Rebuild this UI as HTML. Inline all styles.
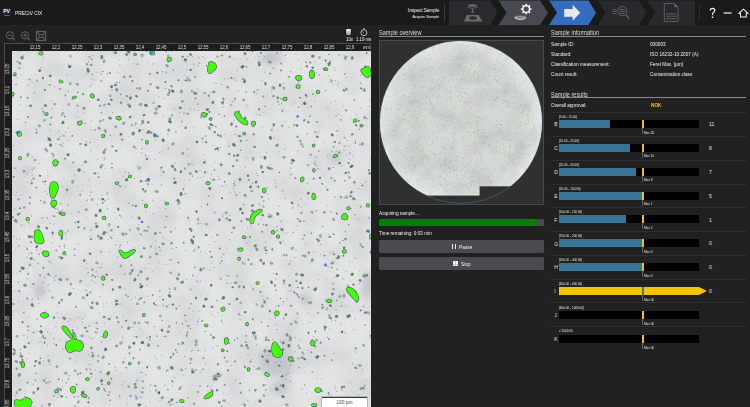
<!DOCTYPE html>
<html><head><meta charset="utf-8">
<style>
html,body{margin:0;padding:0;}
body{width:750px;height:407px;overflow:hidden;position:relative;background:#212121;font-family:"Liberation Sans", sans-serif;color:#e0e0e0;}
div{position:absolute;white-space:nowrap;}
.rl{font-size:4.5px;line-height:6px;color:#dcdcdc;letter-spacing:-0.12px;transform:scale(0.999)}
.hd{font-size:6.3px;line-height:7px;color:#dedede;transform:scaleX(0.885);transform-origin:0 0}
.lb{font-size:5.4px;line-height:6px;color:#f0f0f0;transform:scaleX(0.87);transform-origin:0 0}
.rng{position:absolute;font-size:3.7px;line-height:4px;color:#e8e8e8;transform:scaleX(0.83);transform-origin:0 0}
.let{position:absolute;font-size:5px;line-height:6px;color:#e0e0e0}
.cnt{position:absolute;font-size:5px;line-height:6px;color:#e6e6e6}
</style></head><body>
<!-- top bar -->
<div style="left:0;top:0;width:750px;height:25px;background:#1a1a1a"></div>
<div style="left:2px;top:8px;width:9px;height:8.4px;background:#1b2233;border-radius:1px"></div>
<div style="left:2px;top:9.2px;width:9px;text-align:center;font-size:5.2px;line-height:5px;font-weight:bold;color:#f4f4f4;letter-spacing:-0.3px">PV</div>
<div style="left:3.5px;top:14.6px;width:6px;height:0.5px;background:#5a6a8a;border-radius:50%"></div>
<div style="left:14.8px;top:9.4px;font-size:6.1px;line-height:7px;color:#f4f4f4;transform:scaleX(0.8);transform-origin:0 0">PRECiV CIX</div>
<div style="left:396px;top:7px;width:43px;text-align:right;font-size:5.1px;line-height:6px;color:#e8e8e8;letter-spacing:-0.28px">Inspect Sample</div>
<div style="left:396px;top:13.8px;width:43px;text-align:right;font-size:4.3px;line-height:5px;color:#e4e4e4;letter-spacing:-0.25px">Acquire Sample</div>
<div style="left:444px;top:4px;width:0.7px;height:17px;background:#3a3a3a"></div>
<svg style="position:absolute;left:0;top:0" width="750" height="26">
<path d="M449 0.5H490L497.5 12.7L490 24.9H449Z" fill="#2a2b2e"/>
<path d="M498.5 0.5H540L548 12.7L540 24.9H498.5L506.5 12.7Z" fill="#474a50"/>
<path d="M549 0.5H588.5L596 12.7L588.5 24.9H549L557 12.7Z" fill="#366cbc"/>
<path d="M598 0.5H639L646.5 12.7L639 24.9H598L605.5 12.7Z" fill="#28292c"/>
<path d="M647.5 0.5H695V24.9H647.5L655 12.7Z" fill="#28292c"/>
<!-- step1 icon -->
<g fill="#6b6b6b">
<ellipse cx="472.5" cy="5.5" rx="4.5" ry="1.3"/>
<path d="M467 7.2 Q472.5 9.6 478 7.2" fill="none" stroke="#6b6b6b" stroke-width="0.7"/>
<rect x="472" y="9" width="1" height="3"/>
<path d="M470.5 11.5H474.5L472.5 13.5Z"/>
<path d="M467 15H478.5L482.5 21.5H464Z"/>
</g>
<ellipse cx="473" cy="18" rx="4" ry="1.8" fill="#2a2b2e"/>
<!-- step2 gear -->
<g transform="translate(526.2 9.1)">
<circle r="3.35" fill="none" stroke="#f2f2f2" stroke-width="1.5"/>
<g fill="#f2f2f2">
<rect x="-0.85" y="-5.3" width="1.7" height="2" transform="rotate(0)"/>
<rect x="-0.85" y="-5.3" width="1.7" height="2" transform="rotate(45)"/>
<rect x="-0.85" y="-5.3" width="1.7" height="2" transform="rotate(90)"/>
<rect x="-0.85" y="-5.3" width="1.7" height="2" transform="rotate(135)"/>
<rect x="-0.85" y="-5.3" width="1.7" height="2" transform="rotate(180)"/>
<rect x="-0.85" y="-5.3" width="1.7" height="2" transform="rotate(225)"/>
<rect x="-0.85" y="-5.3" width="1.7" height="2" transform="rotate(270)"/>
<rect x="-0.85" y="-5.3" width="1.7" height="2" transform="rotate(315)"/>
</g>
</g>
<ellipse cx="520.2" cy="17.2" rx="5.6" ry="1.6" fill="#8e8e8e"/>
<path d="M514.4 17.6 Q520.2 21.6 526 17.6" fill="none" stroke="#ececec" stroke-width="0.9"/>
<!-- step3 arrow -->
<path d="M564.2 9H572.7V4.8L580.2 12.8L572.7 20.8V16.8H564.2Z" fill="#e8e8e8"/>
<!-- step4 magnifier -->
<g stroke="#6a6a6a" fill="none" stroke-width="0.8">
<circle cx="622.3" cy="11.2" r="4.6"/>
<path d="M625.6 14.6L629.4 18.6" stroke-width="1.3"/>
<path d="M612.6 9.5H616.5M612.6 11.6H616.5M612.6 13.7H616.5M619.5 9.5H624.5M619.5 11.6H625.5M619.5 13.7H624.5"/>
</g>
<!-- step5 doc -->
<g stroke="#6a6a6a" fill="none" stroke-width="0.8">
<path d="M664.3 3.5H674.5L678 7V21.5H664.3Z"/>
<path d="M666 13.9H676.5M666 16.2H676.5M666 18.7H676.5"/>
</g>
<path d="M674.5 3.5L678 7H674.5Z" fill="#6a6a6a"/>
<rect x="699" y="4" width="0.7" height="17" fill="#3a3a3a"/>
</svg>
<svg style="position:absolute;left:700px;top:0" width="50" height="25">
<path d="M10.2 10.6Q10.2 8.4 12.5 8.4Q14.8 8.4 14.8 10.5Q14.8 11.8 13.4 12.6Q12.5 13.2 12.5 14.6V15.2" fill="none" stroke="#f0f0f0" stroke-width="1.15"/>
<rect x="11.8" y="16.5" width="1.4" height="1.5" fill="#f0f0f0"/>
<rect x="23.6" y="12.4" width="8" height="1.2" fill="#f0f0f0"/>
<path d="M38.8 13.3L43.4 9.1L48 13.3H46.3V17H40.5V13.3Z" fill="none" stroke="#f0f0f0" stroke-width="1.05" stroke-linejoin="miter"/>
</svg>

<!-- zoom icons -->
<svg style="position:absolute;left:0;top:25px" width="60" height="20">
<g stroke="#626262" fill="none" stroke-width="1">
<circle cx="9.9" cy="10.3" r="3.6"/><path d="M12.6 13L14.8 15.3" stroke-width="1.2"/><path d="M8 10.3H11.8"/>
<circle cx="25" cy="10.3" r="3.6"/><path d="M27.7 13L29.9 15.3" stroke-width="1.2"/><path d="M23.1 10.3H26.9M25 8.4V12.2"/>
<rect x="36.5" y="6.4" width="9.2" height="9.2" stroke-width="1.1"/>
<rect x="39.2" y="9.4" width="3.8" height="3.2" stroke-width="0.9"/>
<path d="M37.2 7.1L39 8.9M45 7.1L43.2 8.9M37.2 14.9L39 13.1M45 14.9L43.2 13.1" stroke-width="1.2"/>
</g>
</svg>

<!-- microscope frame -->
<div style="left:4px;top:43px;width:367px;height:370px;background:#1c1c1c;box-shadow:inset 0.8px 0.8px 0 #5a5a5a, inset -0.8px 0 0 #5a5a5a"></div>
<svg width="750" height="407" style="position:absolute;left:0;top:0">
<defs>
<filter id="mott" x="0" y="0" width="100%" height="100%">
<feTurbulence type="fractalNoise" baseFrequency="0.035" numOctaves="3" seed="3"/>
<feColorMatrix type="matrix" values="0 0 0 0 0.48  0 0 0 0 0.49  0 0 0 0 0.52  0.9 0 0 0 -0.33"/>
</filter>
<filter id="bl"><feGaussianBlur stdDeviation="0.75"/></filter>
<filter id="pb"><feGaussianBlur stdDeviation="3"/></filter>
<filter id="grain1" x="0" y="0" width="100%" height="100%">
<feTurbulence type="fractalNoise" baseFrequency="0.7" numOctaves="1" seed="21"/>
<feColorMatrix type="matrix" values="0 0 0 0 0.45  0 0 0 0 0.5  0 0 0 0 0.48  1.4 0 0 0 -0.55"/>
</filter>
<clipPath id="imgclip"><rect x="12" y="51" width="359" height="356"/></clipPath>
</defs>
<g clip-path="url(#imgclip)">
<rect x="12" y="51" width="359" height="356" fill="#e6e6e7"/>
<rect x="12" y="51" width="359" height="356" filter="url(#mott)" opacity="0.75"/>
<rect x="12" y="51" width="359" height="356" filter="url(#grain1)" opacity="0.35"/>
<g filter="url(#pb)" fill="#8a8ea0" opacity="0.3">
<ellipse cx="273" cy="363" rx="13" ry="14"/><ellipse cx="280" cy="388" rx="10" ry="8"/><ellipse cx="286" cy="360" rx="6" ry="25"/>
<ellipse cx="368" cy="285" rx="6" ry="14"/><ellipse cx="27" cy="171" rx="5" ry="4"/><ellipse cx="270" cy="58" rx="10" ry="6"/>
<ellipse cx="335" cy="158" rx="7" ry="6"/><ellipse cx="305" cy="300" rx="6" ry="6"/><ellipse cx="40" cy="290" rx="5" ry="8"/>
</g>
<g filter="url(#bl)"><path d="M128.3 104.7l1.1 0.3M271.0 263.0l1.1 0.4M173.2 143.5l-0.5 0.7M141.0 104.2l-1.1 0.6M48.9 360.6l0.0 0.4M305.1 255.9l-0.0 0.3M344.0 295.2l0.1 1.1M180.2 387.8l-0.5 1.0M262.4 305.9l-0.3 0.3M367.4 312.6l0.4 0.0M78.4 401.7l0.1 0.1M82.6 335.8l-0.9 0.0M301.9 357.7l1.4 0.1M129.5 346.6l0.3 0.5" stroke="#2a5a3c" stroke-width="2.8" stroke-opacity="0.40" stroke-linecap="round" fill="none"/><path d="M221.2 374.9l0.3 0.1M257.1 186.4l0.1 0.1M143.9 230.3l0.0 0.5M333.3 283.4l-0.5 0.6M100.4 267.5l0.5 0.1M266.5 253.4l-0.1 0.1M259.1 204.3l0.0 0.0M340.0 242.7l-0.5 0.1M41.8 405.4l0.2 0.0M75.0 255.3l-0.6 0.2" stroke="#2a5a3c" stroke-width="1.5" stroke-opacity="0.40" stroke-linecap="round" fill="none"/><path d="M44.6 202.1l-0.2 0.7M325.3 327.4l0.0 0.2M169.5 326.3l-0.2 0.4M139.1 322.6l-0.3 0.4M301.3 144.0l0.5 0.5M61.9 299.7l-0.4 0.8M74.9 370.6l0.6 0.5M226.5 212.3l-0.7 0.8M187.3 332.6l0.1 0.1M331.7 81.0l-0.2 0.2M175.3 288.1l-0.3 1.0M68.8 104.2l-0.1 0.4M52.9 154.3l0.5 0.9M44.5 120.2l-0.3 0.0M268.6 340.0l0.2 0.3M100.6 121.1l-0.6 0.3M282.1 125.7l0.3 0.1M109.3 224.3l-0.5 0.2M84.3 228.1l0.1 0.6M126.3 233.9l-0.9 0.1" stroke="#305e40" stroke-width="2.4" stroke-opacity="0.40" stroke-linecap="round" fill="none"/><path d="M34.2 259.5l0.3 0.1M201.6 206.7l-0.2 0.0M104.9 391.0l0.1 0.1M55.7 395.0l0.1 0.0M101.9 341.9l-0.4 0.4M222.3 322.1l0.2 0.1M68.3 321.4l-0.0 0.0M88.1 332.2l-0.0 0.0M118.8 59.7l0.0 0.1M239.6 315.0l0.4 0.3M160.0 250.6l0.5 0.1M109.2 226.5l-0.0 0.2M327.9 108.6l0.2 0.5M335.2 196.7l0.1 0.1M128.6 203.4l0.3 0.0M203.1 141.7l-0.3 0.3" stroke="#2a5a3c" stroke-width="1.2" stroke-opacity="0.40" stroke-linecap="round" fill="none"/><path d="M162.5 243.5l0.8 0.5M332.5 262.7l-0.8 0.8M128.6 386.6l0.0 0.0M235.2 282.7l0.9 0.0M19.4 63.0l0.5 0.5M62.4 123.1l-0.1 0.0M121.1 102.6l-0.2 0.1M204.6 162.2l-0.6 0.7M240.0 136.1l-0.9 0.0M364.6 117.3l0.2 0.3M103.6 356.8l-0.6 0.9M181.6 91.0l-0.4 0.9M15.9 361.2l0.9 0.5M342.3 386.7l-0.4 0.7M139.0 362.4l-0.3 1.0M354.5 182.1l-0.2 0.5M324.7 326.8l1.0 0.5M340.9 197.1l0.0 0.0M166.6 65.3l0.9 0.6M171.7 242.9l-0.1 0.4M128.7 51.7l-0.7 0.0M130.8 97.5l-0.7 0.1" stroke="#3a6040" stroke-width="2.4" stroke-opacity="0.55" stroke-linecap="round" fill="none"/><path d="M220.8 278.5l-0.1 0.6M203.9 268.1l-0.4 0.8M94.9 129.8l0.4 0.2M31.5 252.9l0.2 0.2M353.5 122.1l0.3 0.2M153.9 102.7l-0.7 0.2M308.3 165.0l-0.7 0.4M341.7 306.0l-0.2 0.1M315.5 131.9l-0.5 0.1M141.3 372.4l0.4 0.1M124.6 274.2l0.0 0.1M312.2 339.8l-0.1 0.9M170.4 259.6l0.6 0.2M215.9 126.5l-0.1 0.1M227.1 361.1l-0.4 0.7" stroke="#3a6040" stroke-width="1.8" stroke-opacity="0.40" stroke-linecap="round" fill="none"/><path d="M234.2 227.7l-0.5 0.1M92.3 302.5l0.2 0.5M18.3 214.4l-0.4 0.1M104.3 317.0l-0.3 0.0M168.5 331.7l-0.8 0.1M213.6 91.9l0.5 0.1M31.6 183.2l0.0 0.1M247.5 219.5l1.0 0.0M205.1 172.3l-0.0 0.0M175.0 169.2l0.2 0.8M147.7 278.4l-0.7 0.8M284.1 280.6l-0.2 0.1M132.4 269.9l-0.3 0.9M67.1 189.8l-0.0 0.2M365.5 66.4l-0.3 0.6M32.0 304.2l-0.2 0.9" stroke="#34524a" stroke-width="2.4" stroke-opacity="0.55" stroke-linecap="round" fill="none"/><path d="M141.8 139.4l0.0 0.0M302.5 352.2l-0.1 0.2M210.8 334.9l0.2 0.0M61.6 115.1l0.1 0.0M333.5 234.1l0.3 0.1M207.3 204.3l0.3 0.4M210.4 251.5l-0.2 0.1M131.3 265.1l0.1 0.1M117.3 300.6l0.1 0.4M70.4 358.5l-0.4 0.2" stroke="#305e40" stroke-width="1.5" stroke-opacity="0.70" stroke-linecap="round" fill="none"/><path d="M189.7 173.3l1.0 0.4M240.7 392.6l0.1 0.0M109.0 318.8l0.9 0.4M237.1 160.0l0.1 0.2M117.1 345.7l-1.0 0.4M299.9 220.8l0.2 0.3M36.5 132.6l-0.1 0.4M219.9 248.5l0.0 0.2M324.7 212.3l-0.8 0.2M122.2 139.5l0.2 0.2M313.9 406.3l0.3 0.4M257.4 249.4l-0.6 0.7M352.5 134.0l-0.6 0.6M83.4 108.4l0.3 0.4M87.0 64.1l0.2 0.3M229.5 56.6l0.5 0.5" stroke="#3a6040" stroke-width="2.1" stroke-opacity="0.55" stroke-linecap="round" fill="none"/><path d="M162.1 320.5l-0.0 0.0M155.6 304.7l0.4 0.0M155.8 390.5l0.1 0.1M54.5 200.2l0.0 0.4M224.5 384.8l0.4 0.1M65.3 95.1l0.3 0.3M192.4 176.2l0.0 0.1M250.1 361.6l0.7 0.1M184.1 112.9l0.0 0.0M178.0 262.5l0.7 0.1M126.3 367.6l0.2 0.3M158.0 345.6l0.1 0.1M110.3 400.3l-0.2 0.1M341.9 388.9l-0.0 0.0M129.7 347.9l-0.5 0.2M283.7 254.8l0.5 0.1M297.5 218.7l0.5 0.3M238.3 313.9l0.0 0.4M184.8 315.4l0.7 0.1M35.2 365.6l-0.6 0.3" stroke="#2a4e50" stroke-width="1.5" stroke-opacity="0.55" stroke-linecap="round" fill="none"/><path d="M286.5 255.0l-0.1 0.5M296.3 281.1l0.4 0.0M65.2 158.5l-0.1 0.2M339.5 152.2l-0.4 0.3M313.8 178.4l-0.1 0.5M98.8 177.1l-0.3 0.0M76.1 306.7l-0.2 0.1M328.6 392.9l-0.0 0.9M252.7 318.9l0.2 0.6M129.4 353.1l0.2 0.3M310.0 62.3l0.5 0.4M174.3 178.4l0.0 0.1M92.3 352.9l0.1 0.0M78.0 374.2l0.0 0.0M229.3 304.0l0.2 0.1M169.7 402.0l-0.9 0.2M87.2 331.2l-0.7 0.1" stroke="#34524a" stroke-width="1.8" stroke-opacity="0.55" stroke-linecap="round" fill="none"/><path d="M175.8 350.0l-0.0 0.0M360.8 88.3l0.7 0.4M28.2 117.0l-0.2 0.0M281.4 70.2l-0.4 0.3M242.3 212.6l0.6 0.6M248.7 180.0l-0.0 0.1M91.6 64.8l-0.8 0.2M191.8 91.0l0.2 0.2M250.0 237.0l0.2 0.2M116.7 317.1l0.6 0.6M183.4 189.0l-0.1 0.2M109.9 72.7l-0.1 0.4M195.3 98.4l0.2 0.1M291.4 323.8l-0.6 0.2M301.6 212.8l-0.3 0.2M91.6 59.3l0.0 0.0M18.6 199.2l-0.1 0.3" stroke="#2a5a3c" stroke-width="1.8" stroke-opacity="0.55" stroke-linecap="round" fill="none"/><path d="M244.3 404.5l0.4 0.8M330.5 317.9l0.6 0.5M24.2 171.3l-0.2 0.1M268.9 216.8l0.8 0.3M183.6 242.7l-0.0 0.1M218.1 364.2l-0.2 0.4M162.5 397.4l-0.8 0.3M130.3 76.2l0.0 0.6M50.1 75.9l-0.1 0.0M83.1 94.0l0.1 0.4M294.3 292.4l0.2 0.1M54.3 216.2l-0.1 0.0" stroke="#2a4e50" stroke-width="2.1" stroke-opacity="0.55" stroke-linecap="round" fill="none"/><path d="M349.7 177.5l-0.1 0.0M70.4 56.3l-0.0 0.1M82.9 297.6l0.8 0.3M32.4 305.1l0.7 0.8M170.7 231.8l-0.0 0.0M291.1 305.7l-0.1 0.1M24.0 207.5l0.5 0.0M111.6 230.0l-0.2 0.5M302.6 298.6l-0.0 0.2M329.3 315.6l0.3 0.1M255.5 338.1l0.1 0.1M314.4 346.2l1.0 0.4M306.3 95.5l0.1 0.7" stroke="#2a4e50" stroke-width="2.4" stroke-opacity="0.40" stroke-linecap="round" fill="none"/><path d="M58.4 139.2l0.1 0.2M182.4 342.6l0.7 0.6M279.6 365.6l-0.9 0.0M324.8 329.4l-0.0 0.0M50.4 124.5l-0.0 0.0M240.9 140.9l0.0 0.0M302.9 255.8l0.0 0.0M228.0 370.0l0.2 0.3M212.2 67.2l0.4 0.7M256.1 248.2l-0.1 0.0M33.4 284.0l-0.1 0.0M211.7 256.8l0.2 0.0M223.4 98.6l0.1 0.6M171.2 86.0l0.6 0.5M355.3 291.2l-0.1 0.0M344.0 251.3l-0.8 0.5M253.7 134.2l-0.0 0.4" stroke="#2a5a3c" stroke-width="2.1" stroke-opacity="0.55" stroke-linecap="round" fill="none"/><path d="M111.7 99.7l-0.7 0.0M246.8 345.1l-0.4 0.5M84.2 260.2l-0.1 0.8M179.9 107.7l0.7 0.3M306.8 66.1l0.0 0.6M342.1 331.5l-0.2 0.8M134.1 342.8l-0.1 0.4M43.0 78.1l-0.1 0.1M112.9 289.4l0.0 0.3" stroke="#34524a" stroke-width="2.1" stroke-opacity="0.70" stroke-linecap="round" fill="none"/><path d="M95.8 223.6l0.3 0.1M287.4 404.6l-1.2 0.2M145.6 190.9l-0.8 0.8M347.1 197.3l-0.6 0.2M12.5 95.7l-0.4 1.1M100.1 105.6l0.1 0.1M355.8 348.2l-0.1 0.4M130.5 395.9l0.1 0.2M13.0 304.0l0.5 0.1M235.0 361.5l-0.1 0.1M19.3 291.1l-0.1 0.1M118.3 322.0l0.3 0.2M321.0 390.6l0.9 0.5M96.5 262.8l1.0 0.4" stroke="#34524a" stroke-width="2.4" stroke-opacity="0.40" stroke-linecap="round" fill="none"/><path d="M277.6 213.6l0.2 0.5M100.2 210.2l-0.1 0.9M242.9 66.6l-0.9 0.6M304.5 103.1l0.4 0.5M105.8 349.1l-0.4 0.6M277.2 346.5l-0.4 0.6M253.2 332.9l1.1 0.0M141.9 286.4l-1.1 0.7M317.8 356.5l-1.1 0.8M24.7 346.8l0.3 0.3M61.5 257.9l0.4 0.1" stroke="#2a4e50" stroke-width="2.8" stroke-opacity="0.70" stroke-linecap="round" fill="none"/><path d="M184.9 193.6l0.3 0.1M267.3 187.6l0.1 0.0M185.8 320.6l-0.2 0.5M246.3 140.5l0.6 0.0M315.3 331.7l-0.4 0.4M181.6 121.3l0.4 0.4M78.3 396.5l-0.2 0.1M257.4 368.8l-0.1 0.1M227.7 86.6l-0.4 0.4M369.1 314.4l-0.0 0.0M325.8 90.5l-0.0 0.3M205.5 331.5l-0.3 0.0M229.2 343.1l0.5 0.4M162.9 305.4l0.1 0.2" stroke="#305e40" stroke-width="1.5" stroke-opacity="0.40" stroke-linecap="round" fill="none"/><path d="M227.7 87.4l0.1 0.1M304.6 235.0l-0.0 0.2M126.7 179.8l-0.2 0.2M150.3 257.0l-0.2 0.4M52.8 297.5l-0.5 0.0M123.8 362.1l-0.6 0.4M198.1 219.0l0.2 0.0M217.2 234.7l0.4 0.4M243.4 99.5l0.6 0.8M50.6 75.5l-0.7 0.6M56.9 366.3l0.2 0.6M70.9 283.7l-0.1 0.8" stroke="#3a6040" stroke-width="2.4" stroke-opacity="0.40" stroke-linecap="round" fill="none"/><path d="M21.2 362.3l-0.8 0.1M20.3 389.6l-0.8 0.2M91.4 347.6l-0.1 0.4M100.9 167.3l-0.3 0.0M66.3 347.4l-0.2 0.4M266.1 339.9l-0.0 0.0M135.3 384.0l-0.5 0.3M213.8 179.7l0.0 0.1M155.7 233.3l-0.7 0.3M280.3 242.4l0.4 0.6M118.2 226.9l0.0 0.0M32.1 236.7l0.0 0.1M255.5 389.9l-0.3 0.6M144.0 248.2l0.4 0.1M346.4 88.8l0.0 0.7M115.9 300.9l-0.0 0.1M156.4 253.8l0.4 0.2M348.1 286.4l-0.1 0.3M98.2 235.9l0.2 0.5M140.5 271.7l0.9 0.0" stroke="#305e40" stroke-width="2.4" stroke-opacity="0.55" stroke-linecap="round" fill="none"/><path d="M228.2 219.8l0.2 0.2M359.3 129.2l-0.0 0.1M186.5 59.8l-0.2 0.2M322.4 226.5l-0.0 0.1M159.3 246.8l-0.1 0.6M291.0 174.1l-0.2 0.6M187.6 56.8l0.1 0.2M64.4 245.2l-0.2 0.5M303.1 354.1l0.5 0.1M253.3 335.7l-0.1 0.1M176.5 247.5l-0.3 0.0M293.5 232.3l-0.3 0.0M280.5 385.2l-0.3 0.4M15.0 168.2l-0.5 0.0M16.3 84.4l-0.4 0.0M57.1 212.5l0.0 0.1M68.2 204.9l-0.5 0.1M128.5 172.6l-0.0 0.4M331.1 211.5l0.1 0.2" stroke="#2a4e50" stroke-width="1.2" stroke-opacity="0.55" stroke-linecap="round" fill="none"/><path d="M63.7 317.9l1.0 0.6M283.3 342.8l-0.2 0.1M168.7 130.2l0.0 0.0M116.7 89.3l-0.1 0.7M352.4 57.6l-0.3 0.8M244.7 53.4l0.5 0.3M277.3 145.1l-0.5 0.4M245.2 117.8l0.0 0.3M353.4 198.6l0.8 0.4M30.4 105.8l0.4 0.0M24.6 285.1l0.7 0.3M287.0 334.7l0.1 0.3M194.6 93.2l1.4 0.1M261.0 260.2l-0.1 0.4M79.5 169.7l-0.4 1.0M252.3 210.6l0.4 0.4M39.6 362.7l-0.0 0.6M212.0 306.8l0.1 0.0" stroke="#2a4e50" stroke-width="2.8" stroke-opacity="0.55" stroke-linecap="round" fill="none"/><path d="M284.2 157.1l-0.7 0.2M85.9 209.7l0.5 0.0M362.5 143.6l-0.3 0.6M316.3 340.1l0.6 0.3M320.2 235.5l0.4 1.0M178.7 274.6l0.1 0.2M134.6 322.8l0.1 0.2M359.3 365.4l1.0 0.0M241.9 345.6l-0.5 0.3M223.7 400.6l1.1 0.1M139.3 88.5l0.6 0.1M104.3 60.9l-0.4 0.8M67.3 279.3l-0.4 0.1M70.3 83.6l-0.0 0.0M155.3 112.9l0.9 0.3M213.9 378.9l0.0 0.8M270.5 168.7l1.2 0.1M160.4 316.0l0.0 0.1M190.9 359.1l0.1 0.1M58.1 388.5l0.4 0.4M104.9 130.4l-0.0 0.0" stroke="#34524a" stroke-width="2.8" stroke-opacity="0.40" stroke-linecap="round" fill="none"/><path d="M139.7 130.3l-0.3 0.7M250.8 186.6l-0.4 0.6M118.2 208.8l0.1 0.7M211.2 285.0l-0.1 0.3M49.2 138.5l-0.5 0.8M102.9 199.1l-0.5 0.1M39.9 70.3l-0.3 0.5M271.4 281.8l0.2 1.1M281.6 229.5l0.9 0.1M45.2 105.4l0.4 0.2M197.0 141.7l-0.3 0.4M300.9 282.8l-0.3 0.2" stroke="#34524a" stroke-width="2.4" stroke-opacity="0.70" stroke-linecap="round" fill="none"/><path d="M295.0 321.0l0.4 0.4M309.7 116.1l0.6 0.3M78.7 211.9l0.5 0.3M329.8 60.9l0.5 0.2M221.6 320.2l-0.2 0.1M49.3 261.5l-0.1 0.3M253.5 126.6l-0.2 0.0M37.3 319.2l0.0 0.1M147.8 90.2l-0.4 0.4M318.1 169.0l0.3 0.1M340.6 119.8l0.5 0.2M268.7 214.5l0.5 0.1M119.0 185.6l0.4 0.1" stroke="#2a4e50" stroke-width="1.5" stroke-opacity="0.40" stroke-linecap="round" fill="none"/><path d="M197.8 177.6l0.2 0.2M89.9 364.3l-0.5 0.3M257.7 175.3l-0.5 0.2M302.1 388.8l0.0 0.6M326.3 278.8l-0.1 0.1M45.8 310.9l0.1 0.1M35.0 74.8l-0.0 0.0M42.2 108.1l-0.2 0.4M62.4 380.6l0.1 0.0M297.7 151.0l0.1 0.0M21.1 225.2l0.1 0.4M272.6 339.2l0.0 0.0" stroke="#34524a" stroke-width="1.2" stroke-opacity="0.40" stroke-linecap="round" fill="none"/><path d="M229.2 173.6l0.1 0.0M49.6 404.5l-0.4 0.0M104.2 151.6l-0.3 1.0M93.3 95.9l-0.4 0.2M222.7 102.2l-0.2 1.0M148.4 344.7l0.3 0.9M324.2 69.0l0.3 0.0M14.3 353.4l-0.4 0.6M31.3 258.5l-0.2 0.1M126.5 54.4l0.3 0.3M129.1 327.8l-0.7 0.6M158.7 106.3l0.0 0.2M329.3 168.6l-0.2 0.1M370.9 252.0l0.0 0.6M20.9 355.8l0.6 0.6" stroke="#34524a" stroke-width="2.8" stroke-opacity="0.55" stroke-linecap="round" fill="none"/><path d="M180.8 171.2l0.1 0.9M195.9 297.6l-0.0 0.8M22.4 322.1l0.2 0.1M140.7 181.1l0.7 0.1M240.4 179.1l-0.6 0.2M129.3 106.3l0.7 0.4M14.4 350.3l0.3 0.4M219.6 376.3l0.0 0.0M329.7 236.8l0.2 0.1M291.7 202.6l0.7 0.7M214.7 132.0l0.1 0.3M282.4 396.2l0.4 0.8M346.0 172.7l-0.5 0.5M316.8 136.7l0.9 0.3M144.4 115.0l-0.7 0.3M159.0 392.3l0.0 0.4M351.7 191.8l-0.6 0.9" stroke="#3a6040" stroke-width="2.1" stroke-opacity="0.70" stroke-linecap="round" fill="none"/><path d="M246.4 335.7l-0.4 0.3M333.4 146.7l0.5 0.1M243.0 66.2l-0.0 0.0M237.5 338.1l-0.0 0.2M308.4 287.2l0.5 0.1M190.5 328.4l-0.0 0.1M276.1 290.1l0.1 0.3M277.8 101.6l0.2 0.3M355.3 142.6l0.0 0.4M145.8 374.8l-0.0 0.0M252.4 51.5l0.3 0.2M234.7 185.6l-0.0 0.1M95.3 276.7l-0.1 0.6" stroke="#2a5a3c" stroke-width="1.2" stroke-opacity="0.70" stroke-linecap="round" fill="none"/><path d="M281.3 221.2l-0.1 0.0M242.8 78.6l-0.3 0.4M145.1 230.6l0.1 0.1M89.8 253.8l0.7 0.3M89.1 326.1l-0.0 0.0M347.5 396.3l0.0 0.0M92.1 356.3l0.5 0.4M145.5 181.1l0.2 0.1M203.3 358.0l0.4 0.2M40.6 358.3l-0.5 0.1M278.6 305.5l0.1 0.7M146.7 51.2l-0.1 0.2M326.6 309.2l0.0 0.3M42.9 181.5l0.1 0.2" stroke="#34524a" stroke-width="1.5" stroke-opacity="0.55" stroke-linecap="round" fill="none"/><path d="M271.1 215.9l0.2 0.1M179.2 202.6l-0.4 0.8M72.7 181.2l0.1 1.1M195.7 344.6l0.6 0.1M283.8 88.0l-0.0 0.2M340.0 296.6l-0.2 0.2M158.8 367.3l0.9 1.0M215.5 375.6l-0.9 0.6M289.8 336.8l0.6 0.5M39.2 125.7l0.3 0.3M168.7 94.4l-0.7 0.2M253.1 158.1l0.3 1.4M28.2 154.1l-0.4 0.2M137.8 228.4l0.7 0.6M292.9 247.9l-1.2 0.6M170.7 272.9l0.1 0.0" stroke="#305e40" stroke-width="2.8" stroke-opacity="0.40" stroke-linecap="round" fill="none"/><path d="M66.3 373.1l-1.2 0.1M92.2 199.5l0.1 0.2M259.1 368.2l-0.5 0.3M196.1 340.8l0.4 0.2M142.4 392.3l-0.0 0.0M150.5 84.2l0.1 0.1M156.3 108.7l0.2 0.6M361.8 388.0l-0.6 0.7M134.0 146.8l0.6 0.4M121.3 342.8l-0.8 0.6M206.4 224.1l0.0 0.0M345.6 57.3l-0.2 0.8M188.6 79.9l0.9 0.4" stroke="#3a6040" stroke-width="2.8" stroke-opacity="0.40" stroke-linecap="round" fill="none"/><path d="M248.0 175.7l-0.0 0.0M121.2 133.9l-0.5 0.6M86.0 144.7l-0.4 0.2M286.0 314.3l-0.1 0.4M259.5 64.5l-0.4 0.6M256.2 181.6l-0.1 0.7M221.0 164.5l0.3 0.3M237.9 155.0l-0.5 0.6M158.8 392.7l0.1 0.4M360.0 280.3l0.3 0.2M255.6 245.4l-0.6 0.6M344.1 247.6l-0.1 0.5M231.7 123.6l-0.2 1.0M172.2 399.6l-0.7 0.4M262.8 215.0l-0.1 0.1M115.3 84.9l0.3 0.3M245.2 312.2l-0.1 0.0M262.7 171.9l0.1 0.1" stroke="#305e40" stroke-width="2.4" stroke-opacity="0.70" stroke-linecap="round" fill="none"/><path d="M272.8 87.6l1.1 0.8M310.8 302.6l-1.4 0.1M100.3 238.4l1.3 0.4M17.1 336.3l-0.1 0.1M182.9 153.4l-0.0 0.0M156.1 191.5l1.2 0.1M290.8 339.2l-0.6 0.7M181.5 369.9l-0.0 0.0M142.2 54.8l-0.1 0.8M209.0 127.4l0.7 1.2M98.8 128.0l1.0 0.6M115.7 126.8l0.1 0.0M128.7 52.2l0.4 0.1M269.3 61.9l1.1 0.2M258.6 62.5l0.8 0.4M265.1 350.1l-0.3 1.2M296.9 273.9l-0.4 0.6M45.9 149.2l-0.1 0.4M136.5 398.3l0.1 0.0" stroke="#2a4e50" stroke-width="2.8" stroke-opacity="0.40" stroke-linecap="round" fill="none"/><path d="M325.7 61.0l-0.0 0.2M44.6 341.9l0.0 0.0M112.0 163.6l0.1 0.1M221.5 260.7l0.5 0.3M277.0 53.0l-0.2 0.4M17.5 61.5l-0.4 0.2M189.5 228.8l0.4 0.1M366.9 118.4l-0.0 0.0M291.5 163.1l-0.1 0.3M107.5 209.0l-0.0 0.0M148.3 91.0l0.1 0.2M98.3 355.9l-0.1 0.2M87.8 68.5l-0.7 0.0M152.8 294.9l-0.3 0.5M132.6 205.4l0.5 0.1M339.7 143.0l-0.6 0.0M56.6 250.5l-0.4 0.1M97.0 328.3l0.6 0.3M147.0 230.7l0.5 0.4" stroke="#3a6040" stroke-width="1.5" stroke-opacity="0.55" stroke-linecap="round" fill="none"/><path d="M105.1 200.2l-0.3 0.6M359.9 144.2l-0.0 0.5M361.2 245.8l0.1 0.1M192.7 275.1l0.2 0.6M227.2 283.0l0.1 0.3M275.2 317.0l0.1 0.5M169.5 292.0l0.6 0.4M290.6 71.5l-0.0 0.0M146.8 284.9l-0.0 0.0M65.2 233.1l0.5 0.3M189.3 308.0l0.1 0.2M337.3 130.8l-0.3 0.3M147.2 338.1l-0.2 0.0M365.3 385.5l-0.3 0.0M198.8 57.4l-0.1 0.0" stroke="#34524a" stroke-width="1.5" stroke-opacity="0.40" stroke-linecap="round" fill="none"/><path d="M272.3 249.1l0.0 0.5M260.5 291.6l0.0 0.3M58.8 379.3l-0.1 0.1M72.5 330.3l0.2 0.2M265.6 250.1l0.8 0.3M293.6 361.0l-0.5 0.1M248.3 259.7l0.2 0.0M273.2 96.0l0.4 0.3M269.3 351.2l0.5 0.2M19.9 208.2l0.2 0.0M215.5 149.1l-0.1 0.2M242.6 213.0l-0.1 0.3M54.1 317.2l-0.0 0.7" stroke="#3a6040" stroke-width="1.8" stroke-opacity="0.70" stroke-linecap="round" fill="none"/><path d="M290.8 365.4l-0.1 0.1M193.7 164.6l-0.1 0.2M185.7 62.3l-0.2 0.3M272.0 168.2l-0.0 0.1M44.8 277.5l-0.2 0.2M184.4 104.1l0.0 0.1M288.0 372.8l0.2 0.5M35.0 93.1l-0.1 0.2M171.7 60.1l0.0 0.3M32.2 157.1l0.2 0.2M246.8 91.4l-0.3 0.1M290.0 381.0l0.3 0.3M291.9 362.0l-0.3 0.0M194.0 64.1l0.4 0.1" stroke="#305e40" stroke-width="1.2" stroke-opacity="0.40" stroke-linecap="round" fill="none"/><path d="M194.3 251.0l-0.0 0.4M177.3 352.0l-0.2 0.4M245.6 342.0l-0.1 0.2M197.7 104.0l0.2 0.5M25.0 396.5l-0.2 0.1M141.4 124.5l-0.1 0.1M28.4 222.4l-0.1 0.4M314.2 163.4l0.4 0.2M29.4 79.1l-0.3 0.4M191.8 231.4l-0.4 0.1M281.7 103.6l0.1 0.4M154.3 326.6l-0.1 0.0M315.8 164.9l-0.0 0.1M342.6 240.4l0.5 0.0M348.3 224.6l0.6 0.2" stroke="#34524a" stroke-width="1.2" stroke-opacity="0.55" stroke-linecap="round" fill="none"/><path d="M100.9 237.3l0.7 0.3M331.1 396.4l0.4 0.8M132.4 80.9l-0.2 0.1M265.6 83.0l-0.6 0.1M343.0 405.4l0.4 0.1M56.3 345.0l0.0 0.3M265.4 84.0l0.1 0.5M231.3 78.0l0.3 0.1M234.1 155.4l0.1 0.2M161.6 167.5l-0.3 0.3M270.0 310.6l-0.4 0.8M206.0 142.0l0.3 0.3M308.6 332.5l-0.4 0.3" stroke="#305e40" stroke-width="1.8" stroke-opacity="0.70" stroke-linecap="round" fill="none"/><path d="M55.7 208.4l0.2 0.2M41.0 200.6l-0.2 0.2M88.1 272.7l0.1 0.0M176.4 322.5l0.1 0.5M355.1 214.7l-0.2 0.1M176.9 402.2l0.4 0.2M283.6 83.0l-0.0 0.1M221.6 406.3l0.2 0.1M97.7 173.0l-0.1 0.0M75.0 222.5l0.2 0.1M240.6 150.2l-0.0 0.0M54.0 338.6l0.0 0.0M136.5 88.1l0.4 0.2M33.4 332.3l0.4 0.3M364.1 125.5l0.0 0.0M277.0 226.5l0.0 0.0M173.3 69.8l0.0 0.3M34.1 167.7l0.1 0.2" stroke="#305e40" stroke-width="1.2" stroke-opacity="0.70" stroke-linecap="round" fill="none"/><path d="M120.7 94.6l-0.1 0.0M258.7 186.6l-0.2 0.3M170.5 357.1l0.2 0.6M305.6 94.8l0.1 0.3M334.2 254.0l0.1 0.5M275.9 389.0l0.2 0.5M136.2 337.0l0.7 0.0M13.7 348.8l-0.2 0.2M159.9 291.1l0.0 0.0M64.7 116.4l-0.2 0.1" stroke="#34524a" stroke-width="1.5" stroke-opacity="0.70" stroke-linecap="round" fill="none"/><path d="M45.1 181.3l0.4 0.0M327.6 189.7l-0.1 0.1M336.9 213.5l0.1 0.1M305.1 359.1l-0.5 0.2M59.0 302.5l0.2 0.5M236.2 126.3l0.0 0.3M348.5 162.9l0.3 0.0M317.1 239.1l0.1 0.1M193.9 236.6l-0.4 0.3M147.2 366.9l0.0 0.6M232.4 287.2l0.6 0.1M123.4 123.2l0.2 0.5M44.8 89.8l0.2 0.2M108.6 103.9l0.7 0.4M370.6 335.8l0.6 0.1M362.8 246.8l0.0 0.1" stroke="#2a4e50" stroke-width="1.8" stroke-opacity="0.70" stroke-linecap="round" fill="none"/><path d="M131.0 273.1l-0.9 0.7M80.8 143.9l-0.6 0.0M30.1 264.8l-0.4 0.2M363.3 345.1l0.5 0.6M139.7 167.5l-0.6 0.9M299.8 141.0l0.7 0.1M98.1 361.3l-0.0 0.0M168.3 55.7l0.1 1.0M239.4 286.0l-0.2 1.1M137.7 303.8l-0.7 0.0M311.7 212.1l0.6 0.4M351.1 196.3l0.1 0.0M54.3 104.0l0.6 0.3M265.2 247.5l-0.3 0.3M101.6 165.2l0.8 0.0M322.8 307.3l-0.5 0.7" stroke="#2a5a3c" stroke-width="2.4" stroke-opacity="0.40" stroke-linecap="round" fill="none"/><path d="M216.8 300.3l0.4 0.3M319.4 74.7l-0.0 0.2M161.4 184.9l0.1 0.2M232.1 232.1l-0.4 0.5M62.2 210.2l0.1 0.4M91.0 192.0l0.3 0.3M141.0 286.9l-0.5 0.2M124.7 122.0l0.4 0.0M350.2 196.2l-0.6 0.2M187.5 148.9l-0.1 0.1M342.7 278.9l-0.0 0.2M360.9 83.2l0.0 0.2M142.1 148.5l-0.2 0.4" stroke="#2a5a3c" stroke-width="1.2" stroke-opacity="0.55" stroke-linecap="round" fill="none"/><path d="M344.7 146.4l-0.5 0.1M298.8 106.9l-0.6 0.2M60.8 203.5l-0.1 0.1M223.6 254.2l0.2 0.2M37.8 263.3l0.5 0.3M196.1 342.6l0.2 0.1M336.1 115.7l-0.2 0.3M55.3 392.8l0.1 0.1M130.0 229.6l-0.1 0.7M307.1 133.6l0.5 0.2M240.0 209.6l-0.0 0.2M52.3 108.7l-0.3 0.0M164.7 385.1l0.0 0.0M107.4 193.1l-0.3 0.5M42.9 282.5l0.0 0.0M316.5 211.0l-0.6 0.1M252.5 182.8l0.1 0.5M221.2 55.5l-0.0 0.2" stroke="#3a6040" stroke-width="1.5" stroke-opacity="0.40" stroke-linecap="round" fill="none"/><path d="M101.9 56.5l-0.1 1.4M337.8 275.5l-0.6 0.3M315.7 288.8l-0.6 1.0M206.3 299.0l-0.7 0.4M60.0 212.6l0.3 0.6M104.4 232.4l-0.6 1.1M119.8 287.1l0.1 0.1M148.9 131.6l-1.0 0.9M338.5 256.6l-0.2 1.1M263.6 263.4l0.0 0.1" stroke="#3a6040" stroke-width="2.8" stroke-opacity="0.70" stroke-linecap="round" fill="none"/><path d="M312.5 56.1l0.6 0.1M233.5 144.3l0.8 1.0M22.2 268.0l1.1 0.3M283.0 385.4l0.2 0.8M329.6 63.2l-0.5 1.2M259.8 400.7l0.3 0.5M169.2 295.5l0.7 0.7M288.9 345.4l-0.0 0.6M175.4 182.5l-0.7 0.1M264.9 157.3l0.1 0.8M223.5 297.5l0.1 0.7M367.6 231.0l1.0 0.4M209.9 188.5l-0.1 0.0" stroke="#34524a" stroke-width="2.8" stroke-opacity="0.70" stroke-linecap="round" fill="none"/><path d="M62.0 237.5l-0.3 1.0M332.0 134.6l0.6 0.7M142.5 342.1l-0.8 0.7M237.0 298.9l-0.1 0.2M162.0 330.0l0.1 0.5M369.6 173.2l0.1 0.2M343.5 405.6l0.2 0.3M109.5 117.8l1.0 0.6M296.9 125.4l0.2 0.1M210.6 124.3l0.7 0.6M308.5 193.2l-0.5 0.2M135.1 279.3l-0.5 1.0" stroke="#2a5a3c" stroke-width="2.4" stroke-opacity="0.70" stroke-linecap="round" fill="none"/><path d="M332.5 294.1l0.1 0.0M270.2 137.2l0.5 1.2M336.8 316.2l-0.5 0.3M169.5 121.4l0.9 0.6M181.0 193.5l0.1 1.0M87.9 70.0l0.4 1.3M193.3 371.9l-0.7 0.2M185.4 59.7l-0.2 0.1M83.0 392.1l-0.2 0.5M29.2 236.4l0.6 0.4M111.7 86.5l-0.1 0.2M292.4 160.1l1.1 0.7M215.4 378.5l0.8 0.8M240.5 208.8l0.0 0.4M50.7 144.8l-0.2 0.7M301.5 274.9l1.2 0.3" stroke="#305e40" stroke-width="2.8" stroke-opacity="0.70" stroke-linecap="round" fill="none"/><path d="M202.8 138.1l-0.5 0.5M253.3 288.8l-0.1 0.5M84.8 107.7l0.2 0.2M197.7 392.0l0.6 0.0M336.5 258.3l0.6 0.0M116.9 82.3l-0.0 0.4M175.9 131.6l0.0 0.2M272.0 129.7l-0.5 0.2M119.7 215.3l0.1 0.1M202.6 320.7l-0.7 0.4M293.9 124.8l0.6 0.5M365.5 325.1l-0.2 0.0M298.5 345.4l-0.1 0.4M194.7 76.7l0.5 0.6" stroke="#2a4e50" stroke-width="1.8" stroke-opacity="0.40" stroke-linecap="round" fill="none"/><path d="M192.6 241.5l0.1 1.0M41.0 331.5l0.4 0.8M138.8 404.8l1.0 0.0M352.4 274.1l-0.4 0.5M68.0 154.6l0.2 0.1M97.0 226.4l-0.4 0.3M348.8 316.0l-1.0 0.5M108.6 372.7l-0.8 1.2M203.8 306.1l0.1 0.2M171.5 367.7l0.6 0.5M177.9 200.3l0.2 0.3M145.5 105.1l0.9 0.4M163.1 139.9l0.2 0.8M352.1 165.9l-1.0 0.7M70.3 293.6l-1.0 0.9M207.6 109.6l-0.4 0.0" stroke="#2a5a3c" stroke-width="2.8" stroke-opacity="0.70" stroke-linecap="round" fill="none"/><path d="M235.0 98.5l-0.1 0.2M236.5 195.1l-0.1 0.0M96.5 322.8l0.4 0.1M201.0 117.2l-0.1 0.2M299.0 297.0l-0.2 0.1M28.6 326.5l-0.9 0.0M329.0 404.3l0.6 0.2M35.4 160.0l-0.6 0.1M89.7 253.4l0.6 0.5" stroke="#2a4e50" stroke-width="2.1" stroke-opacity="0.40" stroke-linecap="round" fill="none"/><path d="M346.1 77.6l0.1 0.1M55.0 280.0l0.0 0.5M101.2 372.6l0.0 0.0M69.2 375.6l-0.3 0.1M204.9 58.4l0.1 0.0M47.7 137.1l0.0 0.0M156.3 358.6l-0.2 0.1M335.6 320.5l-0.3 0.1M172.0 248.5l0.5 0.2M350.9 208.6l0.4 0.2M51.6 153.1l0.4 0.0M209.7 312.0l0.5 0.1M298.6 82.6l0.1 0.0M360.3 183.5l-0.0 0.0M355.5 141.2l-0.0 0.2M213.9 267.6l0.0 0.1M89.6 101.7l-0.3 0.1" stroke="#3a6040" stroke-width="1.2" stroke-opacity="0.40" stroke-linecap="round" fill="none"/><path d="M228.6 275.9l-0.2 0.1M360.6 206.3l0.2 0.7M74.7 248.9l-0.1 0.2M167.7 389.5l0.3 0.2M59.4 256.8l-0.4 0.5M303.1 146.4l-0.2 0.6M122.0 326.8l-0.0 0.0M132.8 343.1l0.7 0.3M37.0 80.3l0.1 0.6M331.5 360.1l0.3 0.1M101.2 80.9l0.3 0.3M354.4 99.9l-0.0 0.3M89.3 56.9l0.2 0.0M298.6 358.4l-0.5 0.0M39.4 253.9l-0.3 0.5M312.4 372.1l-0.0 0.1M59.6 246.3l-0.0 0.0" stroke="#34524a" stroke-width="1.8" stroke-opacity="0.40" stroke-linecap="round" fill="none"/><path d="M155.0 385.6l0.4 0.5M280.3 298.4l-0.0 0.2M72.5 135.9l-0.3 0.1M222.1 298.8l0.0 0.0M105.7 131.9l-0.1 0.1M348.5 172.2l0.3 0.4M324.6 355.6l-0.2 0.2M108.6 395.0l-0.1 0.3M203.1 369.2l-0.1 0.1M345.9 110.1l0.2 0.5M343.6 255.5l-0.6 0.3M266.1 337.2l0.1 0.6M224.5 181.7l0.1 0.0M260.6 52.7l0.7 0.2" stroke="#2a5a3c" stroke-width="1.5" stroke-opacity="0.70" stroke-linecap="round" fill="none"/><path d="M318.7 150.9l0.3 0.2M115.9 370.0l-0.0 0.1M198.5 350.4l-0.2 0.1M166.4 216.3l0.3 0.0M120.8 186.5l-0.4 0.1M127.5 178.9l-0.4 0.1M234.5 339.8l0.2 0.3M304.0 221.0l-0.1 0.4M315.6 331.0l-0.3 0.2M73.3 162.1l-0.4 0.4M107.3 73.6l-0.1 0.0M81.5 392.1l0.5 0.0M18.3 282.1l0.0 0.0M77.5 92.1l0.1 0.5M110.2 135.1l-0.1 0.2M166.5 370.8l-0.0 0.2M197.9 220.5l0.0 0.0M156.9 335.9l0.0 0.4M263.8 200.9l0.0 0.2" stroke="#34524a" stroke-width="1.2" stroke-opacity="0.70" stroke-linecap="round" fill="none"/><path d="M209.5 111.8l-0.2 0.2M157.9 136.3l-0.4 0.1M102.9 284.5l-0.0 0.1M165.4 81.9l-0.0 0.4M150.0 336.9l-0.0 0.3M254.2 147.0l1.0 0.0M299.9 97.8l0.1 0.0M76.7 384.6l-0.0 0.0M238.6 111.5l0.4 0.1M266.8 225.2l-0.8 0.0" stroke="#34524a" stroke-width="2.1" stroke-opacity="0.55" stroke-linecap="round" fill="none"/><path d="M91.0 373.6l0.4 0.4M345.2 238.9l0.6 0.5M304.6 120.0l-0.5 0.6M208.8 95.6l0.1 0.3M283.0 396.6l0.9 0.3M43.4 267.6l-0.1 0.2M251.3 264.1l0.1 0.1M218.0 134.9l0.4 0.5M335.1 141.8l-0.3 0.4M244.9 366.6l0.1 0.7M355.2 367.8l1.0 0.3M228.9 153.8l0.7 0.3M363.5 387.8l0.3 0.7M182.0 101.3l0.7 0.1M366.8 402.3l0.4 0.0M366.3 70.4l0.5 0.3M42.7 336.2l0.2 0.3M54.1 206.5l-0.4 0.8M27.2 298.6l-0.0 0.2M77.1 84.0l0.5 0.6M320.7 342.6l-0.1 0.3M22.5 359.6l0.3 0.3" stroke="#305e40" stroke-width="2.1" stroke-opacity="0.55" stroke-linecap="round" fill="none"/><path d="M243.8 204.7l-0.0 0.0M101.2 251.5l-0.1 0.6M306.0 62.0l0.2 0.4M222.3 55.2l0.2 0.2M187.2 77.3l0.3 0.4M239.8 180.2l0.4 0.5M53.6 395.8l0.0 0.2M109.5 391.9l-0.3 0.2M268.0 326.1l-0.3 0.1M148.5 227.0l-0.5 0.2M170.1 404.6l-0.1 0.0M361.0 310.2l-0.8 0.1M345.1 73.9l-0.3 0.1M131.7 124.6l0.3 0.7M19.0 245.9l0.1 0.0" stroke="#305e40" stroke-width="1.8" stroke-opacity="0.40" stroke-linecap="round" fill="none"/><path d="M333.6 219.5l-0.1 0.0M33.7 392.4l-0.1 0.6M15.1 75.1l-0.3 0.2M264.8 301.5l-0.3 0.9M233.1 166.1l0.1 0.0M185.7 127.8l0.0 0.1M195.9 171.2l0.7 0.7M312.5 259.6l-0.5 1.1M214.0 337.5l-0.9 0.1M151.2 132.8l0.1 0.0M220.6 136.0l0.1 0.4M212.0 390.6l0.4 0.6M267.8 167.4l0.9 0.6" stroke="#2a5a3c" stroke-width="2.4" stroke-opacity="0.55" stroke-linecap="round" fill="none"/><path d="M66.6 397.0l-0.0 0.0M214.2 169.8l0.4 0.2M103.0 71.5l-0.5 0.1M233.8 183.3l0.2 0.0M208.8 196.1l-0.3 0.0M191.7 370.8l0.5 0.2M328.9 339.2l0.4 0.1M337.4 269.2l-0.3 0.1M27.7 155.4l-0.0 0.5M112.1 90.0l-0.2 0.0M328.7 54.3l0.1 0.1M207.9 386.1l-0.3 0.3M307.6 183.8l0.0 0.0" stroke="#2a4e50" stroke-width="1.2" stroke-opacity="0.70" stroke-linecap="round" fill="none"/><path d="M356.9 301.9l-0.2 0.1M137.5 64.3l0.1 0.1M75.0 405.8l-0.1 0.0M50.3 381.7l0.0 0.0M207.8 68.7l-0.0 0.0M190.8 289.4l0.0 0.0M63.7 135.8l0.2 0.1M273.5 68.2l0.0 0.1M184.7 168.3l0.4 0.6M80.2 194.4l-0.0 0.7M47.2 150.9l0.0 0.6M145.5 322.0l0.5 0.3M142.9 387.8l-0.1 0.1M311.2 106.5l-0.1 0.0" stroke="#2a5a3c" stroke-width="1.8" stroke-opacity="0.40" stroke-linecap="round" fill="none"/><path d="M244.3 79.9l0.5 0.5M333.3 288.9l0.6 0.2M207.4 395.6l0.5 0.2M227.4 351.1l-0.3 0.1M213.0 125.2l-0.1 0.1M279.4 172.6l0.0 0.0M240.2 383.3l-0.2 0.4M239.8 257.6l-0.2 0.1M362.6 185.4l-0.4 0.1M40.9 326.1l0.2 0.3" stroke="#2a4e50" stroke-width="1.5" stroke-opacity="0.70" stroke-linecap="round" fill="none"/><path d="M277.3 230.7l-0.2 0.1M36.1 187.6l0.6 0.1M196.1 369.8l0.5 0.1M304.7 385.0l-0.0 0.1M337.1 300.4l-0.4 0.2M267.1 298.3l0.5 0.2M85.9 290.6l-0.0 0.0M192.8 369.3l0.1 0.0M101.4 112.8l0.0 0.0M129.3 254.4l0.1 0.4M178.3 344.0l0.4 0.1M159.9 232.4l0.1 0.5M237.1 276.0l0.1 0.6M312.5 94.0l0.7 0.1M360.7 310.4l0.2 0.1" stroke="#305e40" stroke-width="1.5" stroke-opacity="0.55" stroke-linecap="round" fill="none"/><path d="M88.4 397.8l0.4 0.3M44.6 342.9l0.2 0.3M103.0 202.7l-0.5 0.4M25.6 122.6l0.0 0.0M108.9 363.7l0.5 0.3M27.8 382.4l-0.6 0.4M138.4 274.9l-0.1 0.2M311.2 233.0l-0.0 0.5M85.2 123.3l-0.0 0.0M194.8 267.3l-0.1 0.3M270.3 73.3l-0.3 0.6M66.3 382.7l0.1 0.1M36.2 373.2l-0.0 0.3M254.0 91.6l0.3 0.7M20.4 271.2l-0.3 0.5M74.3 397.0l0.1 0.0M190.4 362.9l0.1 0.3M244.9 263.9l-0.3 0.1M27.2 248.8l0.1 0.5M242.4 262.7l0.5 0.2M331.5 178.1l0.0 0.7M50.1 84.8l-0.7 0.1M311.4 351.9l0.1 0.3" stroke="#2a5a3c" stroke-width="1.5" stroke-opacity="0.55" stroke-linecap="round" fill="none"/><path d="M173.4 304.5l-0.9 0.2M344.1 386.7l-0.0 0.2M353.7 284.5l-0.5 0.2M154.0 303.2l0.1 0.7M178.4 80.1l-0.0 0.3M135.7 206.1l0.3 0.1M283.2 349.3l-0.5 0.6M142.9 188.9l0.3 0.7M172.4 381.2l0.0 0.1M95.2 173.4l-0.8 0.1M343.8 89.9l0.3 0.7M130.3 98.7l0.2 0.1M116.5 150.7l-0.6 0.2M308.2 121.9l0.3 0.6M39.6 175.7l0.9 0.2" stroke="#2a5a3c" stroke-width="1.8" stroke-opacity="0.70" stroke-linecap="round" fill="none"/><path d="M130.2 117.0l-0.0 0.0M339.7 163.0l-0.1 0.1M217.3 148.5l0.4 0.1M312.6 67.7l0.1 0.0M116.7 304.0l-0.3 0.4M365.4 312.5l-0.1 0.1M37.1 246.3l-0.6 0.8M229.8 220.1l0.1 0.1M217.8 374.0l0.8 0.0M101.4 380.5l0.4 0.5M38.1 388.5l-0.2 0.8M98.2 99.8l0.2 0.0" stroke="#2a4e50" stroke-width="2.4" stroke-opacity="0.70" stroke-linecap="round" fill="none"/><path d="M147.9 184.1l0.1 0.0M51.1 117.7l0.5 0.0M297.4 136.5l0.2 0.6M281.2 63.5l-0.0 0.0M46.0 382.9l-0.0 0.0M173.3 353.6l0.4 0.6M16.3 368.3l0.3 0.8M263.9 385.2l-0.3 0.4M310.9 154.7l-0.4 0.1M171.9 115.2l-0.1 0.5M110.2 95.5l0.1 0.8M186.7 335.2l0.1 0.6M60.4 144.7l-0.0 0.0M142.8 381.1l-0.0 0.3" stroke="#305e40" stroke-width="1.8" stroke-opacity="0.55" stroke-linecap="round" fill="none"/><path d="M122.8 337.2l-0.0 0.1M57.8 397.3l-0.4 0.2M43.5 338.1l-0.3 0.1M32.3 298.7l0.1 0.1M281.4 227.8l0.1 0.1M222.1 185.9l0.4 0.3M137.1 166.5l-0.1 0.0M263.9 286.6l-0.0 0.0M232.6 101.5l0.1 0.3M184.5 186.2l0.0 0.0M275.7 278.9l-0.0 0.1M315.5 156.9l0.2 0.1M49.8 223.3l0.1 0.2M343.1 401.6l0.1 0.1" stroke="#2a4e50" stroke-width="1.2" stroke-opacity="0.40" stroke-linecap="round" fill="none"/><path d="M172.2 166.1l0.6 0.6M169.8 118.9l-0.0 0.0M276.7 388.5l0.5 1.0M138.9 217.6l0.6 1.0M200.9 269.2l-0.1 0.9M135.6 387.2l0.1 0.2M213.0 102.2l-0.2 0.6M252.4 205.3l0.0 0.3M182.8 282.2l-1.2 0.2M266.8 360.8l0.9 0.9M96.9 303.2l0.4 0.7" stroke="#2a5a3c" stroke-width="2.8" stroke-opacity="0.55" stroke-linecap="round" fill="none"/><path d="M190.3 54.1l0.4 0.7M142.6 121.2l0.3 1.3M59.8 279.2l1.1 0.5M245.0 195.3l0.0 0.1M15.2 220.4l1.0 0.9M172.2 90.8l0.9 0.5M91.3 307.5l0.7 0.4M85.5 161.8l0.2 0.1M277.8 97.7l-0.0 0.4M190.6 229.2l0.4 0.6M219.3 402.4l-0.1 0.0" stroke="#305e40" stroke-width="2.8" stroke-opacity="0.55" stroke-linecap="round" fill="none"/><path d="M100.8 74.0l0.3 0.2M165.1 88.5l0.0 0.0M234.9 78.7l0.1 0.3M68.2 91.4l0.1 0.5M187.9 398.0l-0.1 0.1M338.9 54.8l0.3 0.4M328.1 266.7l-0.1 0.2M299.2 367.6l-0.4 0.2M110.6 236.6l-0.3 0.1M249.6 390.5l0.1 0.3M206.5 65.4l0.0 0.5M162.5 71.3l-0.3 0.4M90.0 369.0l0.4 0.3M20.3 352.8l0.3 0.5M265.9 389.6l-0.4 0.4M89.9 142.3l0.0 0.3" stroke="#3a6040" stroke-width="1.2" stroke-opacity="0.55" stroke-linecap="round" fill="none"/><path d="M191.0 303.7l0.0 0.1M188.3 164.2l1.0 0.2M121.0 265.5l-0.4 0.6M33.3 178.4l0.6 0.3M258.4 224.2l-0.0 0.0M163.2 171.6l0.8 0.5M217.0 56.5l0.6 0.1M204.4 92.9l0.6 0.1M149.9 340.0l0.0 0.0M12.3 217.1l0.8 0.1M360.6 244.1l-0.2 0.3M198.2 223.3l0.1 0.2M167.2 306.4l-0.5 0.3M122.8 233.3l0.0 0.2M165.5 227.0l-0.4 0.4M40.1 275.0l-0.1 0.5M334.6 180.5l0.5 0.4M111.6 238.0l-0.0 0.2M16.7 392.1l0.1 0.9" stroke="#305e40" stroke-width="2.1" stroke-opacity="0.40" stroke-linecap="round" fill="none"/><path d="M112.3 146.3l0.1 0.1M261.7 196.9l0.4 0.1M78.2 227.1l0.5 0.2M182.8 56.7l-0.4 0.1M163.0 299.6l0.1 0.1M159.8 106.4l0.3 0.2M157.7 72.5l-0.6 0.5M325.5 60.2l-0.0 0.0M85.6 327.7l-0.6 0.2M308.8 252.7l0.2 0.2M93.2 355.4l0.2 0.0M206.6 113.8l0.3 0.2M358.9 120.9l0.1 0.0M126.3 320.7l-0.1 0.1M368.8 170.2l0.1 0.2M88.6 402.2l-0.4 0.2M322.3 183.8l-0.0 0.0M324.5 255.6l0.0 0.0" stroke="#34524a" stroke-width="1.8" stroke-opacity="0.70" stroke-linecap="round" fill="none"/><path d="M297.7 287.4l0.1 0.0M224.5 357.5l0.1 0.3M255.9 335.9l-0.3 0.2M322.5 304.5l-0.3 0.1M80.2 373.1l0.2 0.2M295.2 178.0l0.5 0.4M119.8 396.0l0.0 0.0M101.9 384.3l0.3 0.0M366.8 52.9l-0.2 0.5M165.8 336.2l-0.1 0.1M23.9 312.8l0.0 0.0" stroke="#3a6040" stroke-width="1.5" stroke-opacity="0.70" stroke-linecap="round" fill="none"/><path d="M111.9 167.7l-0.0 0.1M135.8 123.5l-0.1 0.2M104.6 158.5l-0.0 0.0M252.4 191.0l-1.0 0.0M134.0 344.0l0.1 0.1M188.8 325.9l-0.9 0.2M263.8 395.2l0.4 0.7M319.7 57.0l-0.3 0.8M297.6 313.4l-0.2 0.1M95.5 332.2l0.8 0.2M111.3 378.5l0.2 0.6M263.1 96.3l0.3 0.3M143.3 342.7l-0.6 0.3M148.0 322.5l-0.4 0.8M38.8 229.6l-0.9 0.4" stroke="#34524a" stroke-width="2.1" stroke-opacity="0.40" stroke-linecap="round" fill="none"/><path d="M219.3 179.2l-0.1 0.1M48.1 382.3l-0.1 0.5M68.5 378.7l-0.4 0.2M119.7 82.5l-0.1 0.1M92.1 74.1l0.2 0.5M60.5 88.9l-0.2 0.5M219.4 114.4l-0.3 0.0M90.9 229.7l-0.1 0.6M106.8 232.3l0.0 0.3M298.7 204.8l-0.3 0.4" stroke="#305e40" stroke-width="1.2" stroke-opacity="0.55" stroke-linecap="round" fill="none"/><path d="M29.3 342.9l-0.8 0.3M262.1 231.7l0.1 0.1M45.1 337.9l0.2 0.5M276.2 314.6l0.5 0.4M150.8 246.3l0.0 0.3M150.0 73.6l-0.1 0.5M28.3 274.0l-0.4 0.1M104.0 389.0l0.2 0.1M92.6 275.1l0.4 0.3M217.6 376.3l0.1 0.5M29.7 202.9l-0.0 0.6M19.7 213.5l-0.1 0.2M246.3 66.6l0.1 0.1M187.3 113.6l0.8 0.3M14.2 176.8l-0.7 0.1M20.8 97.1l0.1 0.2M140.7 234.1l-0.0 0.0" stroke="#3a6040" stroke-width="1.8" stroke-opacity="0.55" stroke-linecap="round" fill="none"/><path d="M63.1 122.0l0.2 0.7M95.9 215.1l0.4 0.7M244.7 81.5l-0.6 0.4M273.8 124.4l0.1 0.6M280.1 84.7l-0.2 1.0M38.3 226.6l0.5 0.2" stroke="#3a6040" stroke-width="2.4" stroke-opacity="0.70" stroke-linecap="round" fill="none"/><path d="M262.4 356.3l0.3 0.5M356.1 125.1l0.0 0.2M206.8 235.0l-1.0 0.1M217.0 390.2l0.1 0.3M302.4 288.0l-0.0 0.1M136.1 95.9l0.8 0.6M191.5 239.7l-0.2 0.4" stroke="#305e40" stroke-width="2.1" stroke-opacity="0.70" stroke-linecap="round" fill="none"/><path d="M47.3 217.9l-0.1 0.1M331.9 267.6l-0.4 0.2M182.5 323.7l-0.1 0.3M36.9 250.1l0.1 0.0M153.2 63.8l-0.0 0.1M330.9 79.0l-0.0 0.0M33.3 384.0l-0.0 0.0M344.9 180.6l-0.3 0.0M316.7 121.9l0.5 0.1M166.0 52.0l0.1 0.1M139.9 349.5l0.4 0.2M58.3 161.3l0.1 0.5M333.4 167.3l0.0 0.0" stroke="#3a6040" stroke-width="1.2" stroke-opacity="0.70" stroke-linecap="round" fill="none"/><path d="M87.4 294.6l-0.3 0.7M320.0 177.8l-0.1 0.1M62.0 396.2l-0.8 0.3M36.0 361.2l-0.5 0.3M330.0 305.3l0.9 0.5M46.5 227.8l0.6 0.5M282.4 376.2l-0.8 0.4M289.4 285.2l0.5 0.3" stroke="#2a5a3c" stroke-width="2.1" stroke-opacity="0.70" stroke-linecap="round" fill="none"/><path d="M140.5 284.0l-0.2 0.4M133.6 357.8l-0.1 0.7M246.3 218.6l0.0 0.1M176.4 308.4l-0.1 0.5M91.3 238.7l-0.5 0.7M172.8 91.2l0.3 0.4M92.2 269.1l0.4 0.7M30.7 242.1l0.6 0.3M224.5 116.1l-0.0 0.0M296.9 294.1l0.6 0.6M141.3 297.9l0.1 0.2M169.3 89.6l-0.2 0.2M349.6 315.3l0.2 0.4M186.5 80.5l-0.8 0.1M241.5 220.8l-0.1 0.5M111.7 279.9l0.9 0.1M27.5 97.7l0.2 0.1M198.6 246.8l0.0 0.7M126.8 96.0l0.4 0.2M30.0 197.3l0.4 0.1M122.5 234.3l0.5 0.6M194.1 403.6l0.0 0.3M276.5 273.7l0.6 0.7M230.8 105.1l0.0 0.0" stroke="#2a4e50" stroke-width="1.8" stroke-opacity="0.55" stroke-linecap="round" fill="none"/><path d="M144.7 302.2l-0.7 0.2M317.8 313.0l0.2 0.0M90.7 292.2l0.1 0.1M103.4 119.8l-0.4 0.3M19.2 68.0l-0.0 0.3M256.5 304.1l0.2 0.7M240.5 302.7l0.7 0.1M105.0 149.3l0.7 0.1M274.9 285.2l0.2 0.8M125.9 294.7l-0.0 0.0M288.7 76.8l0.4 0.2M77.2 105.5l0.5 0.1M296.3 322.3l0.4 0.3M299.1 348.1l0.8 0.2M284.3 283.1l-0.3 0.2" stroke="#3a6040" stroke-width="2.1" stroke-opacity="0.40" stroke-linecap="round" fill="none"/><path d="M268.9 351.1l1.0 0.2M177.1 278.4l0.7 0.6M147.0 159.0l0.0 0.1" stroke="#2a4e50" stroke-width="2.4" stroke-opacity="0.55" stroke-linecap="round" fill="none"/><path d="M86.6 369.0l-0.2 0.6M188.1 217.4l-0.2 0.7M43.4 111.5l0.6 0.8M263.6 206.3l0.0 0.5M78.0 169.6l0.8 0.3M282.4 110.7l0.1 0.6M123.8 76.7l0.5 0.3M44.2 380.3l-0.7 0.3M63.1 113.3l-0.5 0.1M227.1 218.1l-0.7 0.7M81.3 280.9l-0.9 0.4M139.8 299.0l-0.4 0.4M247.8 347.4l0.1 1.0M104.6 104.6l-0.5 0.7" stroke="#2a5a3c" stroke-width="2.1" stroke-opacity="0.40" stroke-linecap="round" fill="none"/><path d="M222.0 198.2l-0.0 0.0M259.0 109.3l0.1 0.0M169.4 92.2l0.1 0.0M52.6 232.5l0.1 0.7M196.4 211.1l0.3 0.7M190.7 69.7l0.0 0.3M77.9 221.8l0.3 0.4M106.5 274.7l0.3 0.1M148.4 122.2l-0.3 0.3M243.8 286.9l0.0 0.5M60.8 389.5l0.1 0.2M48.5 274.3l-0.1 0.1M50.4 140.3l-0.4 0.0" stroke="#2a4e50" stroke-width="2.1" stroke-opacity="0.70" stroke-linecap="round" fill="none"/><path d="M261.2 166.5l0.1 0.9M219.4 219.6l-0.1 0.5M19.6 374.6l-0.4 0.5M364.3 90.3l0.1 0.2M157.2 87.4l0.8 0.3M141.5 256.6l-0.3 0.2M318.9 240.7l-0.6 0.1" stroke="#3a6040" stroke-width="2.8" stroke-opacity="0.55" stroke-linecap="round" fill="none"/><path d="M89.8 195.6h.2M222.5 216.1h.2M97.6 226.7h.2M247.0 243.1h.2M229.3 239.8h.2M43.6 365.0h.2M344.3 332.1h.2M51.7 199.4h.2M159.8 296.6h.2M77.8 317.7h.2M184.3 356.6h.2M152.7 200.4h.2M115.4 245.3h.2M86.2 73.8h.2M139.8 380.6h.2M212.6 348.3h.2M19.6 239.0h.2M39.0 303.2h.2M72.5 349.5h.2M25.4 391.1h.2M38.4 299.0h.2M69.9 318.8h.2M314.8 111.9h.2M68.4 128.2h.2M217.8 345.5h.2M106.0 131.1h.2M196.7 249.8h.2M263.3 224.8h.2M38.1 342.5h.2M85.8 217.4h.2M114.5 212.8h.2M136.1 54.8h.2M13.7 145.2h.2M355.8 292.5h.2M335.9 309.6h.2M301.0 207.1h.2M40.7 249.2h.2M282.0 256.0h.2M331.8 321.3h.2M223.5 393.2h.2M290.8 290.6h.2M316.9 378.4h.2M191.4 351.4h.2M313.7 251.9h.2M307.4 232.1h.2M27.3 337.4h.2M246.3 342.3h.2M328.3 234.6h.2M159.3 152.9h.2M188.3 155.9h.2M341.0 323.8h.2M334.8 100.8h.2M84.0 172.1h.2M246.4 197.3h.2M101.7 195.2h.2M224.4 78.7h.2M68.6 139.9h.2M26.1 247.3h.2M88.2 354.3h.2M57.3 313.2h.2M89.4 292.6h.2M315.0 61.8h.2M282.3 98.7h.2M220.5 263.7h.2M338.6 82.8h.2M251.8 359.8h.2M334.5 261.7h.2M135.0 125.4h.2M75.6 361.9h.2M33.9 92.2h.2M145.7 406.8h.2M347.0 140.7h.2M119.5 247.6h.2M274.3 137.8h.2M17.7 119.5h.2M123.0 381.8h.2M19.5 363.0h.2M172.8 355.7h.2M290.8 104.1h.2M137.2 128.0h.2M322.9 226.4h.2M214.5 162.0h.2M140.2 391.8h.2M200.9 251.6h.2M133.9 64.0h.2M59.0 214.4h.2M33.5 267.1h.2M260.4 115.5h.2M198.4 110.7h.2M345.5 57.7h.2M48.7 290.9h.2M221.4 84.5h.2M86.2 141.5h.2M317.6 121.5h.2M125.0 289.0h.2M29.9 224.1h.2M233.8 114.1h.2M313.2 289.4h.2M34.9 379.7h.2M116.1 218.1h.2M103.4 303.9h.2M119.0 304.2h.2M290.7 168.4h.2M314.9 100.9h.2M212.5 376.3h.2M154.4 356.4h.2M62.6 387.1h.2M211.1 237.2h.2M25.0 393.6h.2M259.3 56.4h.2M246.2 106.0h.2M217.2 83.2h.2M222.8 214.4h.2M65.2 132.1h.2M348.4 176.2h.2M94.6 282.4h.2M51.7 215.7h.2M58.3 131.1h.2M254.1 366.3h.2M283.1 301.9h.2M201.1 177.5h.2M133.8 336.5h.2M256.4 344.9h.2M334.8 385.7h.2M326.9 307.8h.2M338.1 114.2h.2M222.2 315.8h.2M112.6 52.7h.2M172.4 385.6h.2M342.9 105.7h.2M316.4 72.6h.2M211.5 385.8h.2M294.8 323.0h.2M274.8 284.7h.2M146.8 62.3h.2M217.9 176.4h.2M333.5 263.3h.2M220.1 308.7h.2M51.3 263.2h.2M53.5 224.2h.2M98.0 276.7h.2M153.4 213.8h.2M44.8 191.4h.2M102.1 263.8h.2M360.3 389.2h.2M189.2 179.6h.2M352.4 363.7h.2M317.7 132.9h.2M172.9 107.6h.2M32.1 169.6h.2M258.4 187.2h.2M143.2 343.6h.2M66.2 193.7h.2M370.6 338.3h.2M235.6 380.2h.2M185.4 368.2h.2M227.4 248.1h.2M23.9 225.2h.2M148.3 141.9h.2M103.7 233.9h.2M123.0 176.5h.2M260.1 205.5h.2M279.0 152.0h.2M154.6 113.5h.2M155.0 159.9h.2M125.0 186.7h.2M351.6 288.2h.2M124.9 358.0h.2M321.7 379.3h.2M360.3 107.6h.2M39.8 231.0h.2M330.3 252.1h.2M158.8 97.0h.2M71.8 213.4h.2M209.2 270.2h.2M200.6 372.2h.2M215.7 66.4h.2M334.8 70.3h.2M284.5 149.2h.2M211.3 263.2h.2M268.5 199.0h.2M214.3 316.5h.2M301.0 199.2h.2M89.8 236.4h.2M369.4 113.8h.2M207.9 294.3h.2M182.0 386.0h.2M210.9 178.7h.2M185.9 369.1h.2M40.9 342.1h.2M165.9 264.5h.2M66.1 255.6h.2M106.4 303.0h.2M212.9 180.7h.2M84.4 316.5h.2M179.5 331.4h.2M260.9 156.9h.2M256.4 173.1h.2M171.1 356.6h.2M155.9 241.0h.2M26.3 105.7h.2M305.2 243.7h.2M171.7 366.8h.2M57.8 306.1h.2M55.7 326.6h.2M119.2 182.2h.2M334.2 197.2h.2M180.2 208.2h.2M279.0 206.0h.2M110.9 316.2h.2M197.5 89.1h.2M42.0 217.5h.2M305.6 203.6h.2M18.1 301.6h.2M271.5 90.9h.2M280.5 361.7h.2M320.6 244.4h.2M308.5 333.9h.2M179.6 305.6h.2M330.6 102.6h.2M292.6 207.1h.2" stroke="#2a5a3c" stroke-width="1.0" stroke-opacity="0.45" stroke-linecap="round" fill="none"/><path d="M263.9 112.8h.2M353.2 156.1h.2M27.7 182.4h.2M308.3 322.9h.2M45.2 184.2h.2M210.5 388.7h.2M291.9 208.6h.2M145.7 268.3h.2M205.6 364.3h.2M86.3 268.4h.2M341.5 166.3h.2M52.5 236.1h.2M123.1 316.1h.2M77.1 327.8h.2M77.7 117.0h.2M279.0 104.6h.2M286.4 232.9h.2M16.0 310.6h.2M365.7 181.6h.2M171.3 90.7h.2M333.2 252.1h.2M91.0 120.8h.2M238.9 135.9h.2M349.7 261.9h.2M369.2 106.3h.2M107.7 319.1h.2M238.5 91.1h.2M101.1 336.5h.2M217.8 312.6h.2M359.5 271.0h.2M262.4 296.1h.2M241.1 115.3h.2M145.5 211.3h.2M40.0 338.7h.2M282.5 304.2h.2M294.6 257.8h.2M173.5 98.7h.2M233.5 188.8h.2M247.8 354.7h.2M77.3 403.6h.2M115.5 182.4h.2M50.1 364.4h.2M59.2 340.0h.2M334.8 277.6h.2M264.9 56.9h.2M61.3 299.8h.2M91.5 376.8h.2M28.8 84.6h.2M358.6 188.6h.2M33.9 366.5h.2M86.6 263.2h.2M13.8 236.4h.2M66.0 239.1h.2M275.5 183.1h.2M191.7 163.8h.2M117.0 347.0h.2M261.3 219.7h.2M250.8 226.5h.2M20.6 349.5h.2M359.0 283.6h.2M239.4 313.1h.2M280.2 340.2h.2M66.9 74.9h.2M47.4 331.8h.2M115.0 367.4h.2M27.1 86.2h.2M147.3 296.2h.2M264.4 106.1h.2M290.2 261.6h.2M104.3 323.2h.2M27.4 278.9h.2M174.6 109.3h.2M141.7 235.8h.2M161.8 400.0h.2M22.6 356.5h.2M315.6 95.7h.2M174.4 377.5h.2M157.3 367.9h.2M64.4 247.7h.2M346.6 145.5h.2M16.8 273.5h.2M336.3 151.4h.2M240.2 319.8h.2M265.8 384.5h.2M77.1 186.8h.2M53.1 157.7h.2M128.2 136.3h.2M26.7 257.2h.2M228.4 78.9h.2M59.1 88.6h.2M276.4 186.7h.2M47.8 175.8h.2M360.6 75.0h.2M16.3 192.1h.2M258.8 114.8h.2M306.3 393.0h.2M235.7 134.4h.2M142.0 362.7h.2M266.8 346.4h.2M162.8 244.1h.2M285.6 379.2h.2M344.2 55.8h.2M53.7 277.6h.2M292.4 163.6h.2M99.3 312.7h.2M120.8 217.0h.2M249.5 388.8h.2M91.8 79.1h.2M134.2 178.4h.2M270.1 165.3h.2M247.9 104.8h.2M117.7 72.4h.2M205.3 350.2h.2M108.2 198.9h.2M283.1 190.1h.2M205.6 253.2h.2M320.8 254.6h.2M276.2 186.9h.2M282.0 191.4h.2M349.5 146.1h.2M36.8 295.9h.2M109.2 252.1h.2M235.6 80.8h.2M190.1 109.6h.2M192.6 350.0h.2M95.1 215.9h.2M62.3 110.1h.2M27.0 358.3h.2M234.0 59.1h.2M13.0 311.9h.2M143.0 129.7h.2M342.0 390.4h.2M295.9 54.1h.2M332.6 254.1h.2M113.9 235.4h.2M234.1 120.3h.2M364.0 274.2h.2M148.8 263.7h.2M245.4 167.3h.2M200.4 281.0h.2M295.8 250.2h.2M350.4 118.7h.2M210.0 257.5h.2M15.1 395.8h.2M308.1 107.7h.2M108.1 239.3h.2M39.0 163.7h.2M35.5 380.5h.2M47.3 194.3h.2M327.1 63.3h.2M174.7 163.4h.2M335.6 80.5h.2M286.6 298.6h.2M187.0 69.5h.2M239.8 192.7h.2M54.2 86.3h.2M159.7 400.7h.2M127.4 242.0h.2M43.6 361.4h.2M193.2 244.5h.2M211.8 314.6h.2M88.9 305.9h.2M48.0 355.8h.2M125.3 172.2h.2M62.4 348.9h.2M39.0 331.6h.2M247.2 59.3h.2M19.5 376.4h.2M211.7 174.2h.2M128.5 59.3h.2M119.7 64.9h.2M300.3 340.1h.2M343.8 150.0h.2M349.5 159.2h.2M329.2 317.8h.2M245.6 92.6h.2M307.4 350.3h.2M365.8 380.6h.2M82.5 319.2h.2M52.0 100.8h.2M272.9 126.8h.2M50.5 275.7h.2M82.3 322.4h.2M234.5 192.1h.2M199.1 319.0h.2M81.9 165.5h.2M276.9 329.5h.2M74.6 175.2h.2M260.1 215.2h.2M342.8 401.5h.2M164.9 200.9h.2M285.8 374.8h.2M276.1 324.6h.2M355.2 258.3h.2M29.1 253.8h.2M186.4 279.4h.2M226.0 185.4h.2M111.8 167.9h.2M331.9 289.7h.2M15.6 290.9h.2M47.5 345.5h.2M179.8 112.5h.2M32.1 175.2h.2M337.4 84.8h.2M355.2 120.2h.2M125.1 77.4h.2M128.3 296.7h.2M135.2 297.1h.2M328.5 338.3h.2M73.5 288.5h.2M48.3 255.4h.2M274.7 87.5h.2M27.0 173.8h.2M199.7 310.9h.2M256.1 114.0h.2M134.5 247.2h.2M234.0 100.8h.2M167.9 134.0h.2M127.0 404.1h.2M253.0 205.8h.2M155.7 140.2h.2M233.6 156.6h.2M264.4 72.1h.2M91.8 280.9h.2M297.9 59.9h.2M31.3 216.0h.2M289.5 263.8h.2M59.1 230.9h.2M274.7 179.8h.2M169.9 122.3h.2" stroke="#2a4e50" stroke-width="1.0" stroke-opacity="0.45" stroke-linecap="round" fill="none"/><path d="M184.9 80.5h.2M359.8 389.2h.2M202.6 56.5h.2M313.5 336.6h.2M346.4 154.8h.2M23.4 55.8h.2M285.2 244.3h.2M98.8 198.7h.2M326.8 205.9h.2M141.9 286.7h.2M288.9 127.2h.2M197.7 65.9h.2M122.0 373.0h.2M227.0 337.3h.2M161.7 151.7h.2M234.1 184.6h.2M262.2 126.7h.2M42.3 218.7h.2M20.7 75.2h.2M141.3 152.9h.2M65.6 341.1h.2M268.6 168.1h.2M95.1 369.6h.2M280.3 52.3h.2M356.9 218.4h.2M194.4 248.9h.2M121.3 304.3h.2M328.6 76.0h.2M82.0 191.4h.2M194.3 127.8h.2M189.9 107.3h.2M14.6 208.9h.2M23.8 335.4h.2M323.7 142.5h.2M319.3 132.1h.2M60.3 136.7h.2M58.2 317.7h.2M105.2 391.1h.2M230.3 192.3h.2M331.6 151.4h.2M363.2 404.3h.2M192.4 56.4h.2M245.7 157.7h.2M41.2 67.6h.2M297.0 318.2h.2M253.4 133.4h.2M283.2 240.8h.2M89.9 337.7h.2M221.4 257.3h.2M336.9 391.5h.2M256.1 93.6h.2M327.0 337.1h.2M161.2 175.7h.2M285.1 198.5h.2M126.2 53.6h.2M327.3 155.6h.2M94.4 79.9h.2M342.3 332.1h.2M62.4 186.7h.2M345.0 59.5h.2M197.1 324.7h.2M358.0 118.0h.2M160.6 170.3h.2M89.7 86.1h.2M230.7 283.5h.2M288.5 264.2h.2M370.8 159.3h.2M248.0 51.1h.2M51.7 291.9h.2M209.9 393.0h.2M52.2 243.1h.2M228.9 142.3h.2M214.5 83.1h.2M218.6 150.6h.2M79.7 282.7h.2M335.4 388.1h.2M112.4 112.8h.2M156.0 389.7h.2M353.5 329.6h.2M44.6 381.0h.2M268.6 354.8h.2M224.2 134.5h.2M299.2 88.3h.2M131.5 299.8h.2M199.9 170.4h.2M297.2 226.1h.2M362.6 369.5h.2M92.7 55.6h.2M346.2 195.5h.2M37.9 299.1h.2M168.5 148.2h.2M369.9 100.4h.2M43.6 292.7h.2M301.4 69.0h.2M163.2 115.6h.2M35.7 380.7h.2M20.8 105.1h.2M220.1 263.1h.2M136.1 148.7h.2M97.5 72.5h.2M212.7 145.3h.2M280.6 341.8h.2M140.3 328.2h.2M84.3 113.0h.2M167.9 148.6h.2M359.7 219.8h.2M155.6 248.2h.2M294.5 102.1h.2M53.8 343.7h.2M91.6 276.5h.2M200.9 223.3h.2M192.6 311.1h.2M126.6 101.2h.2M265.7 242.4h.2M175.2 228.2h.2M237.1 70.4h.2M152.3 271.8h.2M117.4 256.8h.2M223.5 107.1h.2M255.3 57.8h.2M123.3 98.6h.2M359.2 399.0h.2M263.1 384.4h.2M231.2 365.5h.2M119.8 398.2h.2M234.8 181.3h.2M91.9 338.9h.2M165.5 208.5h.2M301.8 104.6h.2M91.3 84.8h.2M163.5 336.6h.2M356.2 115.2h.2M67.8 64.3h.2M346.6 56.6h.2M310.4 322.0h.2M282.9 108.1h.2M189.5 220.3h.2M255.9 369.4h.2M132.2 327.4h.2M148.8 176.1h.2M88.9 179.7h.2M270.1 319.1h.2M230.0 215.6h.2M294.8 337.5h.2M255.4 182.6h.2M150.6 402.5h.2M142.2 200.5h.2M325.8 187.0h.2M317.9 279.6h.2M283.9 301.6h.2M78.3 243.9h.2M270.8 265.2h.2M287.9 291.2h.2M295.0 351.4h.2M315.1 161.6h.2M50.3 333.9h.2M73.7 153.9h.2M204.1 154.7h.2M315.6 165.0h.2M32.0 82.2h.2M247.5 227.8h.2M345.4 333.2h.2M214.2 241.5h.2M135.7 205.2h.2M79.4 221.0h.2M185.5 250.4h.2M355.4 352.3h.2M273.3 273.6h.2M191.1 369.0h.2M355.0 318.6h.2M48.5 284.9h.2M16.4 239.1h.2M275.9 362.8h.2M334.1 353.3h.2M163.0 397.3h.2M226.0 275.1h.2M31.3 180.5h.2M54.4 165.6h.2M350.8 382.3h.2M211.4 92.5h.2M369.4 312.3h.2M121.9 384.6h.2M158.4 262.7h.2M183.6 375.0h.2M275.7 306.5h.2M247.8 400.6h.2M181.9 344.5h.2M261.9 80.8h.2M209.2 244.7h.2M256.1 339.4h.2M327.6 69.9h.2M345.9 271.5h.2M268.0 194.4h.2M30.8 79.9h.2M284.7 121.1h.2M63.0 143.3h.2M263.7 224.7h.2M16.8 77.0h.2M45.7 378.1h.2M342.0 302.6h.2M99.8 296.5h.2M329.5 329.4h.2M105.1 168.4h.2M358.4 394.8h.2M138.5 224.5h.2M205.1 161.2h.2M157.7 305.8h.2M43.2 57.7h.2M81.4 340.8h.2M328.3 318.0h.2M266.4 152.4h.2M169.1 304.5h.2M29.1 353.3h.2M265.1 106.5h.2M248.0 175.4h.2M97.5 159.2h.2M308.4 312.7h.2M163.0 237.9h.2M267.7 376.0h.2M104.0 306.6h.2M20.6 195.1h.2M193.4 250.4h.2M220.3 147.5h.2M280.0 352.6h.2M285.5 55.5h.2M50.2 130.4h.2M13.4 315.3h.2M184.2 75.6h.2M90.7 151.7h.2M161.8 355.7h.2M210.4 190.2h.2M96.3 271.7h.2M132.2 217.1h.2M171.9 404.9h.2M194.7 109.7h.2M91.9 130.3h.2M241.8 281.8h.2M150.1 391.1h.2M310.3 262.7h.2M164.1 98.5h.2M57.8 209.5h.2M345.1 306.1h.2M333.6 67.9h.2M97.5 204.6h.2M88.5 61.8h.2M203.6 176.3h.2M15.7 195.2h.2M328.2 66.1h.2M263.4 299.6h.2" stroke="#34524a" stroke-width="1.0" stroke-opacity="0.45" stroke-linecap="round" fill="none"/><path d="M261.5 322.0h.1M36.3 129.6h.1M55.8 275.7h.1M62.3 146.1h.1M166.1 72.2h.1M150.4 385.2h.1M344.6 137.7h.1M214.8 212.4h.1M283.7 318.5h.1M257.4 90.0h.1M135.7 396.0h.1M28.1 330.2h.1M363.4 306.6h.1M120.3 245.2h.1M197.2 281.5h.1M74.4 334.1h.1M349.9 153.2h.1M167.8 370.1h.1M86.7 200.5h.1M236.8 160.8h.1M345.5 231.8h.1M140.6 396.9h.1M127.7 296.3h.1M145.5 155.4h.1M169.6 288.7h.1M200.0 386.1h.1M302.6 238.8h.1M100.2 371.9h.1M205.6 136.1h.1M344.4 197.8h.1M136.6 380.4h.1M368.8 217.7h.1M355.8 402.1h.1M229.1 145.9h.1M67.7 230.7h.1M197.8 321.6h.1M59.0 394.2h.1M364.2 89.0h.1M199.4 63.3h.1M280.7 98.5h.1" stroke="#6a8cd8" stroke-width="2" stroke-opacity="0.6" stroke-linecap="round" fill="none"/></g>
<g fill="none" stroke="#40387a" stroke-width="1.3" opacity="0.85"><path d="M42.7 52.9Q42.8 53.3 42.7 53.7Q42.5 54.2 42.1 54.5Q41.7 54.9 41.0 54.8Q40.4 54.7 39.9 54.5Q39.3 54.3 39.1 53.8Q39.0 53.3 39.1 52.8Q39.2 52.3 39.8 52.1Q40.5 52.0 41.0 51.9Q41.6 51.9 42.1 52.2Q42.5 52.4 42.7 52.9Z"/><path d="M23.1 57.5Q23.3 57.7 23.1 57.9Q22.9 58.2 22.6 58.3Q22.4 58.4 22.0 58.5Q21.6 58.6 21.4 58.3Q21.2 58.1 21.1 57.9Q21.0 57.7 21.0 57.5Q21.0 57.2 21.3 57.1Q21.6 56.9 22.0 56.9Q22.4 56.9 22.7 57.1Q23.0 57.2 23.1 57.5Z"/><path d="M70.8 66.4Q70.8 66.6 70.7 66.8Q70.6 67.0 70.3 67.2Q70.0 67.3 69.7 67.3Q69.4 67.3 69.1 67.2Q68.8 67.0 68.6 66.8Q68.5 66.6 68.7 66.4Q68.8 66.2 69.1 66.0Q69.4 65.9 69.7 65.9Q70.1 65.8 70.4 66.0Q70.7 66.1 70.8 66.4Z"/><path d="M15.9 73.9Q15.9 74.3 15.8 74.6Q15.8 75.0 15.5 75.2Q15.2 75.4 14.9 75.4Q14.5 75.4 14.2 75.3Q13.8 75.1 13.8 74.7Q13.8 74.3 13.9 74.0Q14.0 73.6 14.2 73.3Q14.5 73.0 14.9 73.0Q15.3 73.1 15.6 73.3Q15.9 73.6 15.9 73.9Z"/><path d="M62.7 81.7Q62.7 82.1 62.5 82.4Q62.2 82.7 61.7 82.7Q61.1 82.7 60.5 82.5Q59.8 82.4 59.4 81.9Q59.0 81.5 59.1 81.2Q59.2 80.8 59.4 80.5Q59.6 80.1 60.1 80.1Q60.7 80.0 61.2 80.3Q61.8 80.6 62.2 81.0Q62.6 81.3 62.7 81.7Z"/><path d="M13.8 93.6Q14.0 94.0 13.7 94.4Q13.5 94.8 13.3 95.1Q13.0 95.3 12.7 95.4Q12.3 95.5 12.1 95.2Q11.8 94.9 11.6 94.4Q11.4 94.0 11.6 93.6Q11.9 93.2 12.1 92.9Q12.3 92.5 12.7 92.5Q13.0 92.6 13.3 92.9Q13.5 93.2 13.8 93.6Z"/><path d="M75.8 96.7Q76.3 96.9 76.0 97.3Q75.8 97.7 75.4 98.0Q75.0 98.3 74.5 98.5Q74.0 98.8 73.4 98.8Q72.8 98.9 72.5 98.6Q72.2 98.3 72.5 97.9Q72.7 97.5 73.0 97.1Q73.3 96.8 73.8 96.6Q74.4 96.5 74.9 96.5Q75.4 96.5 75.8 96.7Z"/><path d="M93.0 94.4Q93.6 94.9 93.8 95.6Q94.0 96.2 93.9 96.7Q93.8 97.2 93.6 97.6Q93.4 98.1 92.8 97.8Q92.2 97.6 91.7 97.3Q91.1 97.0 90.8 96.4Q90.5 95.8 90.6 95.2Q90.7 94.7 91.0 94.5Q91.3 94.2 91.9 94.0Q92.4 93.9 93.0 94.4Z"/><path d="M47.6 113.2Q47.8 113.5 47.9 113.9Q48.1 114.2 47.7 114.6Q47.4 114.9 46.9 115.1Q46.4 115.3 45.9 115.2Q45.5 115.2 45.2 114.9Q44.9 114.6 45.0 114.2Q45.2 113.8 45.5 113.5Q45.8 113.2 46.2 113.1Q46.6 112.9 47.0 112.9Q47.5 112.9 47.6 113.2Z"/><path d="M81.6 121.6Q81.9 122.2 81.9 122.8Q81.9 123.4 81.4 123.9Q80.9 124.3 80.3 124.6Q79.7 124.9 79.0 124.8Q78.4 124.6 78.1 124.1Q77.9 123.7 77.6 123.1Q77.4 122.5 77.9 122.0Q78.4 121.5 79.1 121.4Q79.7 121.2 80.5 121.1Q81.3 121.0 81.6 121.6Z"/><path d="M21.4 134.4Q21.3 135.1 20.7 135.6Q20.2 136.1 19.5 136.2Q18.8 136.3 18.3 135.8Q17.8 135.4 17.5 134.8Q17.3 134.2 17.4 133.6Q17.4 132.9 17.8 132.3Q18.3 131.7 19.1 131.5Q19.9 131.3 20.4 131.9Q21.0 132.5 21.3 133.1Q21.5 133.8 21.4 134.4Z"/><path d="M116.2 52.5Q116.2 52.7 116.1 52.9Q116.0 53.1 115.9 53.3Q115.8 53.5 115.5 53.5Q115.2 53.5 115.1 53.3Q114.9 53.1 114.8 52.9Q114.7 52.7 114.8 52.4Q114.8 52.2 115.0 52.1Q115.3 52.0 115.5 52.0Q115.7 52.0 115.9 52.1Q116.1 52.3 116.2 52.5Z"/><path d="M136.1 54.0Q136.3 54.4 136.1 54.7Q136.0 55.1 135.6 55.2Q135.3 55.4 135.0 55.4Q134.7 55.3 134.4 55.2Q134.0 55.1 133.9 54.7Q133.9 54.4 134.0 54.1Q134.2 53.8 134.4 53.5Q134.6 53.2 135.0 53.3Q135.3 53.4 135.7 53.5Q136.0 53.7 136.1 54.0Z"/><path d="M154.4 52.4Q154.4 52.9 154.4 53.4Q154.5 53.9 154.0 54.4Q153.5 54.8 152.8 54.7Q152.0 54.6 151.3 54.6Q150.6 54.6 150.4 54.1Q150.2 53.7 150.3 53.2Q150.4 52.7 151.0 52.5Q151.6 52.2 152.2 52.1Q152.8 52.0 153.6 51.9Q154.3 51.9 154.4 52.4Z"/><path d="M171.0 59.8Q170.8 60.4 170.3 60.8Q169.8 61.2 169.2 61.4Q168.6 61.7 168.1 61.4Q167.5 61.2 167.5 60.5Q167.5 59.8 167.4 59.1Q167.3 58.4 167.9 58.0Q168.6 57.6 169.1 57.6Q169.7 57.5 170.4 57.6Q171.0 57.7 171.1 58.4Q171.2 59.1 171.0 59.8Z"/><path d="M121.0 118.3Q121.1 118.7 120.8 119.1Q120.5 119.4 119.9 119.6Q119.3 119.9 118.4 119.6Q117.6 119.3 117.0 118.9Q116.5 118.4 116.2 117.9Q115.9 117.3 116.5 117.0Q117.0 116.7 117.7 116.7Q118.4 116.6 119.2 116.7Q120.1 116.8 120.5 117.3Q120.9 117.8 121.0 118.3Z"/><path d="M104.7 135.3Q104.7 135.8 104.5 136.2Q104.4 136.6 104.1 137.0Q103.8 137.4 103.3 137.4Q102.8 137.4 102.3 137.1Q101.9 136.8 101.9 136.3Q101.9 135.8 101.9 135.3Q101.9 134.8 102.4 134.6Q102.9 134.4 103.3 134.4Q103.8 134.3 104.2 134.6Q104.6 134.9 104.7 135.3Z"/><path d="M134.3 133.3Q134.5 133.6 134.2 133.9Q134.0 134.2 133.8 134.4Q133.6 134.7 133.2 134.8Q132.8 134.8 132.6 134.5Q132.3 134.2 132.3 133.9Q132.2 133.6 132.2 133.3Q132.3 132.9 132.6 132.7Q132.9 132.6 133.2 132.5Q133.6 132.4 133.9 132.6Q134.1 132.9 134.3 133.3Z"/><path d="M156.0 134.7Q156.2 135.2 156.0 135.7Q155.9 136.2 155.6 136.3Q155.2 136.5 154.9 136.6Q154.5 136.8 154.3 136.4Q154.0 136.1 153.9 135.6Q153.7 135.2 153.8 134.7Q153.9 134.2 154.2 134.0Q154.5 133.8 154.9 133.9Q155.2 133.9 155.5 134.1Q155.9 134.2 156.0 134.7Z"/><path d="M206.7 114.6Q206.7 115.3 206.5 115.9Q206.2 116.6 205.3 116.8Q204.5 117.1 203.7 116.6Q202.9 116.2 202.2 115.9Q201.4 115.6 201.5 115.0Q201.6 114.4 201.7 113.8Q201.8 113.2 202.5 112.8Q203.3 112.5 204.2 112.8Q205.0 113.2 205.8 113.6Q206.6 114.0 206.7 114.6Z"/><path d="M211.7 118.6Q211.9 119.0 211.7 119.3Q211.5 119.7 211.3 120.0Q211.0 120.3 210.6 120.2Q210.3 120.0 210.0 119.8Q209.7 119.6 209.5 119.3Q209.3 119.0 209.5 118.7Q209.7 118.3 210.0 118.2Q210.3 118.0 210.6 117.9Q211.0 117.9 211.3 118.1Q211.6 118.3 211.7 118.6Z"/><path d="M255.4 122.9Q255.4 123.7 255.2 124.3Q254.9 125.0 254.5 125.4Q254.1 125.8 253.4 126.0Q252.8 126.2 252.4 125.6Q251.9 125.1 251.8 124.4Q251.8 123.7 251.8 122.9Q251.7 122.1 252.3 121.8Q252.9 121.5 253.5 121.5Q254.1 121.4 254.7 121.7Q255.3 122.1 255.4 122.9Z"/><path d="M245.3 133.2Q245.3 133.6 245.3 134.0Q245.2 134.3 244.9 134.5Q244.6 134.7 244.2 134.7Q243.8 134.8 243.6 134.5Q243.3 134.3 243.1 133.9Q242.9 133.6 243.1 133.3Q243.3 132.9 243.5 132.7Q243.8 132.5 244.2 132.5Q244.6 132.4 244.9 132.7Q245.2 132.9 245.3 133.2Z"/><path d="M313.9 72.6Q314.1 73.9 314.2 75.1Q314.3 76.3 313.8 77.1Q313.4 77.9 312.8 78.2Q312.1 78.5 311.3 78.1Q310.4 77.6 309.9 76.2Q309.5 74.8 309.7 73.5Q309.9 72.2 310.3 71.4Q310.7 70.5 311.4 70.5Q312.1 70.5 312.9 70.9Q313.7 71.2 313.9 72.6Z"/><path d="M301.6 77.9Q301.7 78.6 301.3 79.2Q300.8 79.7 300.1 80.2Q299.4 80.7 298.4 80.5Q297.4 80.3 296.8 79.6Q296.2 79.0 295.8 78.2Q295.4 77.5 295.9 76.9Q296.4 76.2 297.3 75.9Q298.2 75.7 299.3 75.7Q300.3 75.8 300.9 76.5Q301.4 77.2 301.6 77.9Z"/><path d="M327.3 68.9Q327.6 69.2 327.5 69.6Q327.3 69.9 326.9 70.1Q326.5 70.3 326.0 70.4Q325.4 70.5 325.1 70.2Q324.7 69.9 324.6 69.5Q324.5 69.2 324.7 68.9Q325.0 68.6 325.2 68.4Q325.5 68.1 326.0 68.0Q326.6 67.9 326.8 68.3Q327.0 68.6 327.3 68.9Z"/><path d="M299.9 85.9Q300.1 86.5 299.8 87.0Q299.4 87.5 299.1 87.9Q298.7 88.4 298.1 88.4Q297.4 88.5 297.1 88.0Q296.8 87.5 296.4 87.0Q296.0 86.5 296.4 86.0Q296.7 85.5 297.1 85.1Q297.5 84.8 298.1 84.8Q298.7 84.8 299.2 85.1Q299.7 85.4 299.9 85.9Z"/><path d="M319.5 91.5Q319.7 92.0 319.5 92.5Q319.3 93.0 318.9 93.2Q318.5 93.5 318.0 93.4Q317.6 93.3 317.1 93.1Q316.6 93.0 316.5 92.5Q316.5 92.0 316.5 91.5Q316.6 90.9 317.1 90.9Q317.6 90.8 318.1 90.5Q318.6 90.3 318.9 90.7Q319.3 91.0 319.5 91.5Z"/><path d="M286.8 98.6Q286.8 99.1 286.7 99.6Q286.5 100.0 286.0 100.3Q285.5 100.5 284.9 100.5Q284.4 100.5 283.8 100.2Q283.3 100.0 283.2 99.6Q283.2 99.1 283.4 98.7Q283.5 98.3 283.9 97.9Q284.3 97.6 284.9 97.5Q285.6 97.4 286.2 97.7Q286.8 98.0 286.8 98.6Z"/><path d="M356.5 120.0Q356.7 120.4 356.7 120.9Q356.6 121.4 356.1 121.6Q355.7 121.8 355.1 122.0Q354.6 122.1 354.3 121.7Q354.0 121.3 353.9 120.8Q353.8 120.4 353.9 120.0Q354.0 119.5 354.3 119.2Q354.7 118.9 355.2 119.0Q355.6 119.0 356.0 119.3Q356.3 119.6 356.5 120.0Z"/><path d="M362.5 125.3Q362.7 125.7 362.5 126.0Q362.2 126.3 362.0 126.5Q361.8 126.8 361.4 126.8Q361.1 126.7 360.8 126.6Q360.4 126.4 360.3 126.0Q360.2 125.7 360.3 125.4Q360.5 125.0 360.8 124.8Q361.1 124.7 361.4 124.7Q361.7 124.8 362.0 124.9Q362.4 125.0 362.5 125.3Z"/><path d="M21.2 157.6Q21.3 158.1 21.1 158.6Q21.0 159.0 20.7 159.4Q20.4 159.7 20.0 159.6Q19.7 159.5 19.3 159.3Q19.0 159.1 18.9 158.6Q18.9 158.1 18.9 157.6Q19.0 157.1 19.3 156.9Q19.7 156.7 20.0 156.8Q20.3 156.8 20.7 157.0Q21.0 157.1 21.2 157.6Z"/><path d="M57.6 162.1Q58.1 162.8 57.7 163.6Q57.2 164.3 56.7 165.1Q56.2 165.8 55.4 165.8Q54.6 165.8 53.9 165.2Q53.3 164.6 53.1 163.7Q53.0 162.8 53.2 161.9Q53.3 161.0 54.0 160.6Q54.6 160.1 55.4 160.0Q56.2 159.8 56.7 160.6Q57.1 161.4 57.6 162.1Z"/><path d="M65.0 213.6Q65.0 214.1 64.7 214.5Q64.5 214.9 64.1 215.2Q63.7 215.5 63.1 215.4Q62.6 215.3 62.1 215.2Q61.5 215.0 61.3 214.6Q61.2 214.1 61.4 213.6Q61.5 213.2 62.1 213.0Q62.6 212.8 63.1 212.8Q63.6 212.9 64.3 212.9Q65.0 213.0 65.0 213.6Z"/><path d="M29.2 218.7Q29.2 219.2 29.0 219.6Q28.8 220.0 28.5 220.3Q28.1 220.5 27.7 220.7Q27.2 220.8 26.9 220.4Q26.6 220.0 26.3 219.6Q26.0 219.2 26.3 218.8Q26.5 218.3 26.8 217.9Q27.1 217.5 27.6 217.7Q28.1 217.9 28.6 218.0Q29.1 218.2 29.2 218.7Z"/><path d="M147.9 141.8Q148.0 142.2 148.0 142.7Q148.0 143.3 147.7 143.6Q147.3 143.8 146.9 143.8Q146.5 143.8 146.2 143.5Q145.9 143.2 145.9 142.7Q145.9 142.2 145.8 141.7Q145.8 141.1 146.2 141.0Q146.6 140.8 146.9 140.8Q147.3 140.7 147.5 141.0Q147.8 141.3 147.9 141.8Z"/><path d="M117.9 182.8Q118.0 183.1 118.0 183.5Q118.1 183.9 117.6 184.0Q117.1 184.2 116.6 184.3Q116.1 184.3 115.7 184.0Q115.4 183.7 115.3 183.4Q115.1 183.1 115.2 182.8Q115.4 182.4 115.8 182.3Q116.2 182.1 116.6 182.1Q117.0 182.2 117.4 182.3Q117.8 182.4 117.9 182.8Z"/><path d="M131.1 175.7Q131.3 176.0 131.3 176.4Q131.3 176.7 131.0 177.0Q130.6 177.2 130.2 177.4Q129.8 177.5 129.4 177.5Q129.0 177.5 128.8 177.3Q128.6 177.0 128.6 176.7Q128.7 176.3 128.9 176.0Q129.1 175.6 129.5 175.4Q130.0 175.2 130.4 175.3Q130.9 175.4 131.1 175.7Z"/><path d="M127.2 179.6Q127.4 179.8 127.3 180.0Q127.1 180.3 126.9 180.3Q126.7 180.4 126.5 180.5Q126.3 180.5 126.0 180.4Q125.8 180.3 125.8 180.0Q125.7 179.8 125.8 179.6Q125.8 179.3 126.1 179.2Q126.3 179.2 126.5 179.1Q126.8 179.0 126.9 179.2Q127.0 179.4 127.2 179.6Z"/><path d="M149.2 179.4Q149.2 179.8 149.1 180.1Q149.0 180.4 148.8 180.7Q148.6 180.9 148.2 180.8Q147.9 180.7 147.5 180.7Q147.1 180.6 147.1 180.2Q147.1 179.8 147.2 179.5Q147.3 179.1 147.6 178.9Q147.9 178.8 148.2 178.8Q148.5 178.9 148.9 178.9Q149.3 179.0 149.2 179.4Z"/><path d="M147.4 206.2Q147.3 206.6 147.0 207.0Q146.7 207.4 146.1 207.5Q145.6 207.6 145.2 207.3Q144.7 207.0 144.7 206.5Q144.7 206.0 144.7 205.6Q144.7 205.2 145.0 204.7Q145.3 204.3 145.8 204.4Q146.3 204.4 146.8 204.6Q147.2 204.8 147.4 205.3Q147.5 205.7 147.4 206.2Z"/><path d="M168.3 203.1Q168.5 203.5 168.3 203.9Q168.1 204.2 167.7 204.4Q167.3 204.6 166.8 204.7Q166.3 204.8 165.9 204.4Q165.6 204.1 165.5 203.8Q165.3 203.5 165.4 203.1Q165.4 202.8 165.9 202.6Q166.4 202.5 166.8 202.4Q167.3 202.4 167.7 202.6Q168.2 202.8 168.3 203.1Z"/><path d="M105.6 217.5Q105.8 217.9 105.6 218.3Q105.5 218.8 105.0 219.1Q104.6 219.4 104.0 219.4Q103.4 219.4 103.0 219.1Q102.6 218.7 102.5 218.3Q102.3 217.9 102.4 217.5Q102.6 217.1 103.0 216.8Q103.4 216.5 104.0 216.4Q104.7 216.3 105.1 216.6Q105.5 217.0 105.6 217.5Z"/><path d="M209.7 182.7Q210.1 183.1 209.8 183.5Q209.5 183.9 209.1 184.3Q208.8 184.7 208.1 184.7Q207.4 184.8 207.0 184.4Q206.5 184.0 206.2 183.6Q205.9 183.1 206.2 182.6Q206.5 182.2 207.0 181.9Q207.5 181.6 208.1 181.6Q208.7 181.7 209.0 182.0Q209.4 182.3 209.7 182.7Z"/><path d="M265.8 189.8Q266.1 190.4 265.8 191.0Q265.6 191.7 265.2 192.3Q264.8 192.8 264.1 192.7Q263.5 192.6 263.1 192.1Q262.7 191.6 262.6 191.0Q262.4 190.4 262.6 189.8Q262.7 189.1 263.1 188.6Q263.5 188.1 264.1 188.1Q264.7 188.1 265.1 188.7Q265.4 189.2 265.8 189.8Z"/><path d="M314.7 145.1Q314.8 145.5 314.6 145.8Q314.5 146.2 314.3 146.5Q314.0 146.8 313.6 146.8Q313.2 146.8 312.9 146.5Q312.6 146.3 312.5 145.9Q312.5 145.5 312.5 145.1Q312.5 144.7 312.9 144.6Q313.3 144.4 313.6 144.4Q314.0 144.3 314.3 144.5Q314.7 144.7 314.7 145.1Z"/><path d="M337.0 155.0Q337.3 155.2 337.5 155.5Q337.6 155.9 337.0 156.3Q336.3 156.6 335.6 157.0Q335.0 157.3 334.3 157.3Q333.5 157.4 333.4 157.0Q333.4 156.6 333.5 156.3Q333.6 155.9 333.8 155.5Q334.1 155.0 334.9 154.8Q335.6 154.6 336.1 154.7Q336.6 154.8 337.0 155.0Z"/><path d="M314.9 169.9Q315.2 170.3 315.0 170.8Q314.8 171.3 314.5 171.6Q314.2 171.9 313.8 171.9Q313.4 171.9 313.2 171.5Q313.0 171.1 312.9 170.7Q312.8 170.3 312.9 169.9Q313.0 169.5 313.2 169.2Q313.4 168.8 313.8 168.9Q314.1 169.1 314.3 169.3Q314.6 169.5 314.9 169.9Z"/><path d="M303.8 179.2Q303.8 180.0 303.3 180.5Q302.7 180.9 302.2 181.4Q301.8 181.9 301.3 181.6Q300.9 181.4 300.7 180.8Q300.5 180.2 300.6 179.5Q300.6 178.9 301.0 178.2Q301.3 177.6 301.9 177.4Q302.4 177.3 302.9 177.4Q303.3 177.5 303.6 178.0Q303.9 178.5 303.8 179.2Z"/><path d="M315.5 195.5Q315.8 196.4 315.6 197.4Q315.3 198.3 314.8 198.9Q314.4 199.5 313.8 199.5Q313.3 199.4 312.8 198.9Q312.3 198.4 312.2 197.4Q312.2 196.4 312.3 195.5Q312.4 194.5 312.8 193.9Q313.2 193.3 313.8 193.4Q314.3 193.5 314.7 194.1Q315.1 194.6 315.5 195.5Z"/><path d="M350.0 207.7Q350.1 208.1 350.0 208.6Q349.9 209.0 349.5 209.2Q349.0 209.4 348.6 209.5Q348.1 209.5 347.7 209.3Q347.2 209.1 347.0 208.6Q346.8 208.1 347.1 207.7Q347.4 207.2 347.8 207.0Q348.2 206.9 348.6 206.8Q349.0 206.8 349.4 207.0Q349.8 207.2 350.0 207.7Z"/><path d="M369.3 204.9Q369.4 205.3 369.3 205.7Q369.1 206.1 368.8 206.5Q368.5 206.9 368.0 206.9Q367.5 207.0 367.0 206.6Q366.6 206.3 366.5 205.8Q366.4 205.3 366.6 204.8Q366.7 204.4 367.1 204.1Q367.5 203.7 368.0 203.9Q368.4 204.0 368.8 204.2Q369.1 204.5 369.3 204.9Z"/><path d="M347.3 216.2Q347.9 217.0 347.6 218.0Q347.2 218.9 346.4 219.4Q345.5 219.8 344.6 219.7Q343.8 219.6 343.0 219.2Q342.2 218.7 341.8 217.9Q341.3 217.0 341.8 216.2Q342.3 215.3 342.9 214.6Q343.6 213.8 344.6 213.7Q345.7 213.5 346.2 214.5Q346.7 215.5 347.3 216.2Z"/><path d="M62.5 232.5Q62.6 233.3 62.6 234.2Q62.6 235.0 62.1 235.6Q61.6 236.2 61.0 235.8Q60.4 235.5 59.9 235.2Q59.4 234.8 59.1 234.0Q58.7 233.3 59.1 232.6Q59.5 231.9 59.9 231.3Q60.3 230.8 61.0 230.5Q61.6 230.3 62.0 231.0Q62.4 231.7 62.5 232.5Z"/><path d="M65.3 252.7Q65.5 253.2 65.3 253.7Q65.2 254.1 64.9 254.4Q64.6 254.7 64.2 254.7Q63.8 254.7 63.5 254.4Q63.3 254.1 63.1 253.7Q62.9 253.2 63.1 252.8Q63.4 252.4 63.6 252.1Q63.9 251.8 64.2 251.7Q64.6 251.5 64.9 251.9Q65.2 252.3 65.3 252.7Z"/><path d="M47.9 314.5Q48.8 315.2 48.4 316.1Q48.0 317.1 46.7 317.3Q45.4 317.5 44.2 317.8Q43.0 318.1 42.3 317.3Q41.6 316.6 40.9 315.9Q40.2 315.2 40.8 314.5Q41.4 313.7 42.2 313.2Q43.1 312.6 44.3 312.7Q45.4 312.8 46.3 313.3Q47.1 313.8 47.9 314.5Z"/><path d="M104.7 277.7Q104.9 278.2 104.8 278.8Q104.7 279.5 104.2 279.8Q103.8 280.1 103.3 280.1Q102.8 280.1 102.5 279.7Q102.1 279.3 101.8 278.7Q101.5 278.2 101.8 277.7Q102.2 277.2 102.5 276.6Q102.8 276.1 103.3 276.3Q103.7 276.5 104.1 276.8Q104.4 277.2 104.7 277.7Z"/><path d="M144.9 314.7Q144.9 315.2 144.9 315.7Q144.8 316.1 144.4 316.3Q144.1 316.5 143.8 316.5Q143.5 316.5 143.2 316.3Q142.8 316.1 142.8 315.7Q142.7 315.2 142.7 314.7Q142.7 314.2 143.1 314.0Q143.5 313.9 143.8 313.9Q144.1 313.9 144.5 314.0Q144.9 314.1 144.9 314.7Z"/><path d="M274.4 231.8Q274.7 232.2 274.6 232.7Q274.4 233.2 274.0 233.5Q273.5 233.7 273.0 233.7Q272.5 233.6 272.1 233.4Q271.7 233.2 271.5 232.7Q271.4 232.2 271.6 231.8Q271.8 231.4 272.2 231.1Q272.6 230.9 273.1 230.7Q273.6 230.5 273.8 230.9Q274.1 231.4 274.4 231.8Z"/><path d="M279.2 236.2Q279.3 236.6 279.3 237.0Q279.2 237.5 278.8 237.7Q278.4 238.0 278.0 238.0Q277.5 238.1 277.2 237.7Q276.9 237.4 276.7 237.0Q276.5 236.6 276.6 236.2Q276.8 235.7 277.2 235.5Q277.6 235.3 278.1 235.1Q278.5 234.9 278.8 235.3Q279.1 235.8 279.2 236.2Z"/><path d="M245.7 236.8Q245.9 237.1 245.8 237.5Q245.7 237.9 245.2 238.1Q244.7 238.2 244.2 238.3Q243.7 238.3 243.2 238.1Q242.8 237.9 242.6 237.5Q242.4 237.1 242.6 236.7Q242.8 236.4 243.3 236.2Q243.7 236.1 244.2 236.1Q244.6 236.1 245.0 236.3Q245.4 236.4 245.7 236.8Z"/><path d="M242.5 249.1Q242.9 249.5 242.7 250.0Q242.4 250.5 241.8 250.7Q241.1 250.9 240.4 250.9Q239.7 250.9 239.0 250.7Q238.3 250.5 238.1 250.0Q237.8 249.5 238.1 249.0Q238.5 248.6 239.1 248.4Q239.8 248.2 240.4 248.2Q241.1 248.1 241.6 248.4Q242.1 248.7 242.5 249.1Z"/><path d="M240.1 258.5Q240.3 258.8 240.2 259.1Q240.1 259.5 239.8 259.7Q239.5 259.9 239.1 260.0Q238.7 260.1 238.4 259.8Q238.0 259.6 238.1 259.2Q238.1 258.8 238.1 258.4Q238.1 258.1 238.4 257.9Q238.7 257.7 239.1 257.8Q239.4 257.9 239.7 258.0Q240.0 258.2 240.1 258.5Z"/><path d="M259.0 282.7Q259.1 283.1 258.9 283.4Q258.7 283.8 258.4 284.0Q258.0 284.3 257.5 284.3Q257.0 284.3 256.7 284.0Q256.4 283.7 256.3 283.4Q256.2 283.1 256.3 282.8Q256.3 282.5 256.7 282.2Q257.0 281.9 257.5 281.9Q258.1 281.8 258.5 282.1Q259.0 282.3 259.0 282.7Z"/><path d="M224.9 308.7Q225.0 309.2 224.8 309.7Q224.5 310.1 224.1 310.5Q223.7 310.8 223.2 310.9Q222.6 311.1 222.0 310.8Q221.4 310.5 221.5 309.9Q221.6 309.2 221.7 308.7Q221.9 308.2 222.2 307.8Q222.6 307.5 223.3 307.3Q223.9 307.1 224.3 307.6Q224.7 308.1 224.9 308.7Z"/><path d="M278.8 312.4Q279.1 313.0 278.8 313.6Q278.6 314.2 278.2 314.9Q277.8 315.5 277.0 315.4Q276.3 315.3 275.6 314.9Q274.9 314.5 274.8 313.8Q274.7 313.0 275.0 312.4Q275.3 311.8 275.8 311.4Q276.4 311.1 277.0 311.1Q277.6 311.1 278.1 311.5Q278.6 311.8 278.8 312.4Z"/><path d="M346.3 251.1Q346.5 251.5 346.2 251.9Q346.0 252.3 345.6 252.7Q345.3 253.2 344.6 253.2Q343.9 253.2 343.4 252.8Q342.9 252.5 342.6 252.0Q342.3 251.5 342.6 251.0Q342.9 250.5 343.4 250.2Q343.9 249.8 344.6 249.8Q345.3 249.9 345.7 250.2Q346.1 250.6 346.3 251.1Z"/><path d="M367.3 275.0Q367.8 275.1 367.5 275.4Q367.3 275.8 366.7 276.0Q366.1 276.3 365.4 276.5Q364.7 276.7 364.2 276.7Q363.6 276.7 363.4 276.5Q363.2 276.3 363.3 276.1Q363.4 275.8 363.9 275.5Q364.3 275.3 365.0 275.0Q365.7 274.8 366.2 274.9Q366.8 275.0 367.3 275.0Z"/><path d="M331.4 300.4Q331.7 300.8 331.6 301.3Q331.4 301.8 330.7 302.1Q330.0 302.4 329.1 302.3Q328.3 302.2 327.6 302.0Q327.0 301.7 326.5 301.2Q326.0 300.8 326.6 300.4Q327.1 300.0 327.7 299.6Q328.2 299.2 329.1 299.3Q329.9 299.3 330.5 299.7Q331.1 300.0 331.4 300.4Z"/><path d="M371.2 235.9Q371.3 236.6 371.3 237.4Q371.2 238.2 371.0 238.4Q370.7 238.5 370.5 238.7Q370.3 238.9 370.1 238.4Q369.9 238.0 369.8 237.3Q369.8 236.6 369.9 236.0Q370.0 235.4 370.1 234.9Q370.2 234.3 370.5 234.4Q370.7 234.5 370.9 234.8Q371.2 235.2 371.2 235.9Z"/><path d="M24.2 363.8Q24.3 364.6 24.3 365.5Q24.3 366.5 23.8 366.8Q23.3 367.0 22.8 367.2Q22.3 367.3 21.9 366.8Q21.5 366.3 21.4 365.4Q21.3 364.6 21.4 363.8Q21.6 363.0 21.9 362.6Q22.3 362.1 22.8 362.0Q23.3 361.9 23.7 362.4Q24.1 363.0 24.2 363.8Z"/><path d="M89.1 378.7Q89.5 379.0 89.4 379.4Q89.2 379.8 88.6 379.9Q88.0 380.1 87.4 380.1Q86.8 380.2 86.3 379.9Q85.9 379.7 85.7 379.3Q85.5 379.0 85.8 378.7Q86.1 378.4 86.5 378.2Q86.8 377.9 87.4 377.9Q88.0 377.9 88.4 378.1Q88.7 378.4 89.1 378.7Z"/><path d="M75.3 388.5Q75.5 389.6 75.2 390.5Q74.9 391.4 74.4 392.3Q73.9 393.1 73.1 392.8Q72.3 392.5 71.7 392.0Q71.0 391.5 70.7 390.6Q70.4 389.6 70.6 388.5Q70.8 387.5 71.6 387.2Q72.3 386.9 73.1 386.7Q73.8 386.4 74.5 386.9Q75.2 387.5 75.3 388.5Z"/><path d="M58.1 390.7Q58.5 391.1 58.2 391.5Q58.0 392.0 57.5 392.3Q57.1 392.6 56.5 392.5Q56.0 392.4 55.6 392.2Q55.2 391.9 54.9 391.5Q54.7 391.1 54.9 390.7Q55.2 390.3 55.6 390.0Q55.9 389.7 56.5 389.7Q57.1 389.7 57.4 390.0Q57.8 390.3 58.1 390.7Z"/><path d="M86.7 395.9Q86.7 396.4 86.3 396.8Q85.9 397.2 85.2 397.1Q84.4 397.1 83.6 396.8Q82.9 396.5 82.4 396.1Q81.8 395.6 81.5 395.0Q81.1 394.4 81.8 394.2Q82.4 394.0 83.1 393.9Q83.8 393.9 84.5 394.2Q85.2 394.6 86.0 395.0Q86.8 395.4 86.7 395.9Z"/><path d="M99.1 388.5Q99.2 388.9 99.1 389.2Q98.9 389.6 98.6 389.7Q98.3 389.9 98.0 390.0Q97.6 390.0 97.4 389.8Q97.2 389.5 97.1 389.2Q96.9 388.9 97.0 388.6Q97.2 388.3 97.4 388.0Q97.6 387.7 98.0 387.7Q98.4 387.7 98.7 387.9Q99.0 388.2 99.1 388.5Z"/><path d="M107.3 334.2Q107.1 335.1 106.7 336.0Q106.4 336.8 105.8 337.2Q105.3 337.6 104.7 337.7Q104.0 337.8 103.6 337.1Q103.2 336.4 103.5 335.3Q103.7 334.2 104.1 333.3Q104.6 332.4 105.2 331.6Q105.8 330.8 106.3 331.3Q106.8 331.8 107.1 332.5Q107.4 333.2 107.3 334.2Z"/><path d="M130.9 363.2Q131.1 363.5 130.9 363.8Q130.7 364.1 130.5 364.4Q130.3 364.8 129.9 364.7Q129.5 364.7 129.2 364.5Q128.8 364.3 128.8 363.9Q128.7 363.5 128.8 363.1Q128.9 362.8 129.2 362.6Q129.5 362.4 129.9 362.4Q130.3 362.3 130.5 362.6Q130.7 362.9 130.9 363.2Z"/><path d="M109.9 382.7Q110.1 383.0 109.8 383.3Q109.6 383.6 109.4 383.9Q109.2 384.2 108.8 384.1Q108.5 384.0 108.1 383.9Q107.8 383.7 107.6 383.4Q107.5 383.0 107.8 382.7Q108.0 382.4 108.2 382.2Q108.5 382.1 108.8 382.0Q109.1 381.9 109.4 382.1Q109.7 382.4 109.9 382.7Z"/><path d="M183.6 400.6Q183.9 401.0 183.8 401.5Q183.7 402.0 183.1 402.2Q182.4 402.3 181.9 402.3Q181.4 402.3 180.7 402.2Q180.0 402.1 179.9 401.5Q179.8 401.0 179.9 400.5Q180.0 399.9 180.7 399.7Q181.3 399.5 181.9 399.6Q182.5 399.6 182.9 399.9Q183.2 400.2 183.6 400.6Z"/><path d="M207.7 325.0Q207.8 325.4 207.7 325.8Q207.7 326.2 207.2 326.3Q206.7 326.5 206.2 326.5Q205.7 326.6 205.4 326.3Q205.1 326.0 204.7 325.7Q204.4 325.4 204.7 325.1Q205.1 324.8 205.4 324.6Q205.8 324.4 206.2 324.3Q206.7 324.2 207.1 324.5Q207.5 324.7 207.7 325.0Z"/><path d="M248.2 323.8Q248.2 324.3 248.1 324.7Q248.0 325.2 247.7 325.5Q247.5 325.8 247.1 325.8Q246.7 325.9 246.4 325.6Q246.0 325.3 245.9 324.8Q245.8 324.3 246.0 323.9Q246.2 323.4 246.4 323.0Q246.7 322.6 247.1 322.7Q247.5 322.8 247.8 323.1Q248.1 323.3 248.2 323.8Z"/><path d="M228.4 340.1Q228.7 340.9 228.4 341.7Q228.2 342.5 227.7 343.1Q227.2 343.6 226.4 343.9Q225.7 344.3 225.1 343.5Q224.6 342.8 224.5 341.8Q224.4 340.9 224.6 340.1Q224.7 339.2 225.2 338.4Q225.7 337.6 226.4 337.9Q227.2 338.1 227.7 338.7Q228.2 339.3 228.4 340.1Z"/><path d="M223.8 349.8Q223.8 350.2 223.8 350.6Q223.8 351.0 223.5 351.2Q223.1 351.5 222.7 351.5Q222.3 351.4 222.0 351.2Q221.6 351.0 221.6 350.6Q221.6 350.2 221.7 349.9Q221.8 349.6 222.1 349.3Q222.3 349.1 222.7 349.2Q223.0 349.3 223.4 349.3Q223.8 349.4 223.8 349.8Z"/><path d="M249.7 368.9Q249.7 369.4 249.5 369.8Q249.4 370.2 249.2 370.6Q249.0 370.9 248.6 370.8Q248.3 370.7 247.9 370.6Q247.5 370.4 247.5 369.9Q247.5 369.4 247.6 368.9Q247.6 368.5 247.9 368.1Q248.2 367.7 248.6 367.8Q249.0 368.0 249.3 368.2Q249.7 368.3 249.7 368.9Z"/><path d="M269.2 375.2Q269.0 375.7 268.6 375.9Q268.1 376.2 267.5 376.0Q266.9 375.9 266.3 375.7Q265.7 375.4 265.2 374.9Q264.7 374.3 265.0 373.9Q265.3 373.5 265.4 373.0Q265.6 372.5 266.4 372.7Q267.1 373.0 267.8 373.3Q268.4 373.5 268.9 374.1Q269.4 374.7 269.2 375.2Z"/><path d="M212.2 392.4Q212.6 392.8 212.6 393.4Q212.7 394.1 212.1 395.1Q211.6 396.1 210.0 397.2Q208.4 398.4 207.4 398.4Q206.3 398.4 205.2 398.6Q204.2 398.7 204.2 398.0Q204.2 397.2 205.3 396.1Q206.5 395.0 207.8 393.9Q209.2 392.7 210.5 392.3Q211.9 391.9 212.2 392.4Z"/><path d="M314.7 342.5Q315.0 343.1 314.7 343.7Q314.4 344.3 313.9 345.0Q313.5 345.6 312.7 345.7Q311.9 345.7 311.4 345.0Q310.9 344.4 310.6 343.7Q310.2 343.1 310.5 342.4Q310.7 341.7 311.3 341.2Q311.9 340.7 312.6 340.9Q313.3 341.1 313.9 341.5Q314.4 341.9 314.7 342.5Z"/><path d="M282.3 351.7Q282.4 352.4 282.1 353.0Q281.9 353.6 281.7 353.9Q281.4 354.3 281.0 354.6Q280.7 355.0 280.5 354.3Q280.3 353.6 280.1 353.0Q280.0 352.4 280.0 351.7Q280.1 350.9 280.4 350.7Q280.8 350.5 281.2 350.2Q281.5 349.9 281.8 350.4Q282.1 350.9 282.3 351.7Z"/><path d="M292.9 358.4Q293.1 359.0 292.7 359.5Q292.3 360.1 291.8 360.4Q291.3 360.8 290.5 361.0Q289.8 361.2 289.4 360.6Q289.0 360.0 288.7 359.5Q288.3 359.0 288.5 358.4Q288.7 357.8 289.2 357.4Q289.8 357.0 290.6 357.0Q291.4 357.1 292.0 357.4Q292.6 357.8 292.9 358.4Z"/><path d="M320.4 388.9Q320.7 389.5 320.7 390.2Q320.8 390.9 320.1 391.6Q319.5 392.2 318.4 392.4Q317.4 392.6 316.8 392.0Q316.1 391.5 315.4 391.0Q314.7 390.6 315.0 389.8Q315.3 389.1 316.1 388.6Q316.8 388.2 317.7 388.0Q318.5 387.8 319.3 388.1Q320.1 388.3 320.4 388.9Z"/><path d="M316.5 404.6Q316.6 405.0 316.4 405.4Q316.2 405.8 315.7 406.1Q315.1 406.4 314.3 406.4Q313.6 406.3 312.9 406.1Q312.2 405.9 311.8 405.4Q311.4 405.0 311.8 404.6Q312.2 404.1 312.9 403.9Q313.6 403.7 314.3 403.6Q315.1 403.6 315.7 403.9Q316.3 404.2 316.5 404.6Z"/><path d="M120.7 254.1Q118.3 250.3 119.8 250.1Q121.2 249.8 122.9 252.1Q124.6 254.3 128.8 251.8Q133.0 249.3 134.6 249.8Q136.2 250.3 133.8 252.4Q131.5 254.5 128.7 256.6Q125.8 258.6 124.4 258.2Q123.0 257.8 120.7 254.1Z"/><path d="M62.2 327.2Q62.5 326.5 64.0 326.2Q65.5 326.0 67.8 329.0Q70.0 332.0 71.5 334.8Q73.0 337.5 72.5 338.2Q72.0 339.0 70.8 338.0Q69.5 337.0 66.8 334.0Q64.0 331.0 63.0 329.5Q62.0 328.0 62.2 327.2Z"/><path d="M73.2 334.8Q72.8 332.5 73.4 332.5Q74.0 332.5 75.2 335.5Q76.5 338.5 76.0 339.0Q75.5 339.5 74.5 338.2Q73.5 337.0 73.2 334.8Z"/><path d="M65.8 345.8Q65.8 343.1 67.8 341.9Q69.7 340.6 72.2 340.1Q74.6 339.6 76.8 339.9Q79.0 340.1 81.0 341.6Q83.0 343.1 83.2 345.1Q83.5 347.0 82.2 349.2Q81.0 351.4 78.8 350.9Q76.6 350.5 75.2 350.5Q73.7 350.5 72.2 351.7Q70.7 352.9 69.2 352.4Q67.8 351.9 66.8 350.2Q65.8 348.5 65.8 345.8Z"/><path d="M51.5 182.7Q52.3 181.8 54.1 181.8Q56.0 181.8 57.2 183.9Q58.4 186.0 58.1 187.8Q57.8 189.7 56.9 191.6Q56.0 193.4 55.4 195.6Q54.7 197.7 53.2 198.0Q51.7 198.3 50.8 195.9Q49.8 193.4 49.7 190.4Q49.6 187.3 50.2 185.4Q50.8 183.6 51.5 182.7Z"/><path d="M51.2 202.4Q51.7 200.8 53.5 200.5Q55.4 200.2 56.2 201.4Q57.0 202.6 56.2 204.4Q55.4 206.3 53.8 206.7Q52.3 207.0 51.5 205.4Q50.8 203.9 51.2 202.4Z"/><path d="M34.6 232.6Q34.4 230.6 36.8 230.1Q39.2 229.7 40.5 231.6Q41.8 233.6 42.6 236.2Q43.5 238.8 43.7 240.9Q43.9 243.1 41.5 243.5Q39.2 243.9 37.2 243.2Q35.3 242.6 34.6 240.2Q34.0 237.9 34.5 236.2Q34.9 234.5 34.6 232.6Z"/><path d="M42.4 253.2Q42.2 251.7 45.0 251.2Q47.8 250.8 48.5 252.9Q49.1 255.1 47.8 256.1Q46.5 257.2 44.5 255.9Q42.6 254.7 42.4 253.2Z"/><path d="M208.8 63.5Q208.9 62.1 210.6 62.0Q212.3 61.8 213.7 62.5Q215.0 63.3 215.8 64.8Q216.6 66.4 216.1 67.8Q215.7 69.1 214.3 70.2Q212.9 71.3 211.5 72.5Q210.1 73.7 209.1 73.2Q208.0 72.8 207.8 70.7Q207.7 68.5 208.1 66.7Q208.6 64.8 208.8 63.5Z"/><path d="M361.4 71.5Q360.4 69.8 362.2 69.2Q364.1 68.6 366.0 67.3Q367.8 66.1 368.8 66.8Q369.7 67.4 370.4 69.8Q371.0 72.3 371.0 74.2Q371.0 76.0 368.8 76.8Q366.6 77.5 365.6 76.8Q364.7 76.0 363.5 74.6Q362.3 73.2 361.4 71.5Z"/><path d="M273.1 343.1Q273.8 341.6 275.1 342.0Q276.4 342.4 277.1 344.0Q277.8 345.7 279.1 347.4Q280.4 349.0 281.5 350.9Q282.6 352.7 282.1 354.4Q281.5 356.0 279.9 356.9Q278.2 357.8 276.5 357.2Q274.9 356.7 273.8 355.8Q272.7 354.9 272.1 351.9Q271.6 349.0 272.0 346.8Q272.3 344.6 273.1 343.1Z"/><path d="M346.9 290.0Q346.3 288.1 348.0 287.8Q349.6 287.4 351.5 288.3Q353.3 289.2 354.6 290.7Q355.8 292.2 357.0 294.2Q358.1 296.2 358.5 298.0Q358.8 299.9 357.9 300.8Q357.0 301.7 355.7 300.8Q354.4 299.9 352.8 297.9Q351.1 295.8 349.2 293.8Q347.4 291.8 346.9 290.0Z"/><path d="M14.6 401.8Q14.6 400.1 16.1 400.0Q17.6 399.9 19.5 400.3Q21.4 400.7 22.8 399.4Q24.1 398.2 25.7 397.8Q27.3 397.4 28.6 398.4Q30.0 399.3 31.1 400.6Q32.2 401.8 31.7 402.9Q31.1 403.9 30.6 405.7Q30.0 407.5 22.7 407.5Q15.4 407.5 15.0 405.4Q14.6 403.4 14.6 401.8Z"/><path d="M234.9 113.8Q235.1 112.1 236.1 111.9Q237.2 111.8 238.8 113.0Q240.3 114.2 240.8 116.1Q241.2 117.9 243.8 119.2Q246.4 120.4 247.2 121.6Q248.0 122.8 247.5 123.9Q247.0 125.0 245.5 124.7Q244.0 124.3 242.0 122.9Q240.0 121.6 238.3 119.8Q236.6 117.9 235.7 116.7Q234.8 115.4 234.9 113.8Z"/><path d="M250.8 223.2Q250.0 222.5 250.2 219.2Q250.5 216.0 252.2 214.0Q254.0 212.0 256.8 210.5Q259.5 209.0 261.0 209.5Q262.5 210.0 262.0 211.0Q261.5 212.0 259.0 213.5Q256.5 215.0 255.2 216.5Q253.8 218.0 253.7 220.5Q253.5 223.0 252.5 223.5Q251.5 224.0 250.8 223.2Z"/></g>
<g fill="#42ff00"><path d="M42.7 52.9Q42.8 53.3 42.7 53.7Q42.5 54.2 42.1 54.5Q41.7 54.9 41.0 54.8Q40.4 54.7 39.9 54.5Q39.3 54.3 39.1 53.8Q39.0 53.3 39.1 52.8Q39.2 52.3 39.8 52.1Q40.5 52.0 41.0 51.9Q41.6 51.9 42.1 52.2Q42.5 52.4 42.7 52.9Z"/><path d="M23.1 57.5Q23.3 57.7 23.1 57.9Q22.9 58.2 22.6 58.3Q22.4 58.4 22.0 58.5Q21.6 58.6 21.4 58.3Q21.2 58.1 21.1 57.9Q21.0 57.7 21.0 57.5Q21.0 57.2 21.3 57.1Q21.6 56.9 22.0 56.9Q22.4 56.9 22.7 57.1Q23.0 57.2 23.1 57.5Z"/><path d="M70.8 66.4Q70.8 66.6 70.7 66.8Q70.6 67.0 70.3 67.2Q70.0 67.3 69.7 67.3Q69.4 67.3 69.1 67.2Q68.8 67.0 68.6 66.8Q68.5 66.6 68.7 66.4Q68.8 66.2 69.1 66.0Q69.4 65.9 69.7 65.9Q70.1 65.8 70.4 66.0Q70.7 66.1 70.8 66.4Z"/><path d="M15.9 73.9Q15.9 74.3 15.8 74.6Q15.8 75.0 15.5 75.2Q15.2 75.4 14.9 75.4Q14.5 75.4 14.2 75.3Q13.8 75.1 13.8 74.7Q13.8 74.3 13.9 74.0Q14.0 73.6 14.2 73.3Q14.5 73.0 14.9 73.0Q15.3 73.1 15.6 73.3Q15.9 73.6 15.9 73.9Z"/><path d="M62.7 81.7Q62.7 82.1 62.5 82.4Q62.2 82.7 61.7 82.7Q61.1 82.7 60.5 82.5Q59.8 82.4 59.4 81.9Q59.0 81.5 59.1 81.2Q59.2 80.8 59.4 80.5Q59.6 80.1 60.1 80.1Q60.7 80.0 61.2 80.3Q61.8 80.6 62.2 81.0Q62.6 81.3 62.7 81.7Z"/><path d="M13.8 93.6Q14.0 94.0 13.7 94.4Q13.5 94.8 13.3 95.1Q13.0 95.3 12.7 95.4Q12.3 95.5 12.1 95.2Q11.8 94.9 11.6 94.4Q11.4 94.0 11.6 93.6Q11.9 93.2 12.1 92.9Q12.3 92.5 12.7 92.5Q13.0 92.6 13.3 92.9Q13.5 93.2 13.8 93.6Z"/><path d="M75.8 96.7Q76.3 96.9 76.0 97.3Q75.8 97.7 75.4 98.0Q75.0 98.3 74.5 98.5Q74.0 98.8 73.4 98.8Q72.8 98.9 72.5 98.6Q72.2 98.3 72.5 97.9Q72.7 97.5 73.0 97.1Q73.3 96.8 73.8 96.6Q74.4 96.5 74.9 96.5Q75.4 96.5 75.8 96.7Z"/><path d="M93.0 94.4Q93.6 94.9 93.8 95.6Q94.0 96.2 93.9 96.7Q93.8 97.2 93.6 97.6Q93.4 98.1 92.8 97.8Q92.2 97.6 91.7 97.3Q91.1 97.0 90.8 96.4Q90.5 95.8 90.6 95.2Q90.7 94.7 91.0 94.5Q91.3 94.2 91.9 94.0Q92.4 93.9 93.0 94.4Z"/><path d="M47.6 113.2Q47.8 113.5 47.9 113.9Q48.1 114.2 47.7 114.6Q47.4 114.9 46.9 115.1Q46.4 115.3 45.9 115.2Q45.5 115.2 45.2 114.9Q44.9 114.6 45.0 114.2Q45.2 113.8 45.5 113.5Q45.8 113.2 46.2 113.1Q46.6 112.9 47.0 112.9Q47.5 112.9 47.6 113.2Z"/><path d="M81.6 121.6Q81.9 122.2 81.9 122.8Q81.9 123.4 81.4 123.9Q80.9 124.3 80.3 124.6Q79.7 124.9 79.0 124.8Q78.4 124.6 78.1 124.1Q77.9 123.7 77.6 123.1Q77.4 122.5 77.9 122.0Q78.4 121.5 79.1 121.4Q79.7 121.2 80.5 121.1Q81.3 121.0 81.6 121.6Z"/><path d="M21.4 134.4Q21.3 135.1 20.7 135.6Q20.2 136.1 19.5 136.2Q18.8 136.3 18.3 135.8Q17.8 135.4 17.5 134.8Q17.3 134.2 17.4 133.6Q17.4 132.9 17.8 132.3Q18.3 131.7 19.1 131.5Q19.9 131.3 20.4 131.9Q21.0 132.5 21.3 133.1Q21.5 133.8 21.4 134.4Z"/><path d="M116.2 52.5Q116.2 52.7 116.1 52.9Q116.0 53.1 115.9 53.3Q115.8 53.5 115.5 53.5Q115.2 53.5 115.1 53.3Q114.9 53.1 114.8 52.9Q114.7 52.7 114.8 52.4Q114.8 52.2 115.0 52.1Q115.3 52.0 115.5 52.0Q115.7 52.0 115.9 52.1Q116.1 52.3 116.2 52.5Z"/><path d="M136.1 54.0Q136.3 54.4 136.1 54.7Q136.0 55.1 135.6 55.2Q135.3 55.4 135.0 55.4Q134.7 55.3 134.4 55.2Q134.0 55.1 133.9 54.7Q133.9 54.4 134.0 54.1Q134.2 53.8 134.4 53.5Q134.6 53.2 135.0 53.3Q135.3 53.4 135.7 53.5Q136.0 53.7 136.1 54.0Z"/><path d="M154.4 52.4Q154.4 52.9 154.4 53.4Q154.5 53.9 154.0 54.4Q153.5 54.8 152.8 54.7Q152.0 54.6 151.3 54.6Q150.6 54.6 150.4 54.1Q150.2 53.7 150.3 53.2Q150.4 52.7 151.0 52.5Q151.6 52.2 152.2 52.1Q152.8 52.0 153.6 51.9Q154.3 51.9 154.4 52.4Z"/><path d="M171.0 59.8Q170.8 60.4 170.3 60.8Q169.8 61.2 169.2 61.4Q168.6 61.7 168.1 61.4Q167.5 61.2 167.5 60.5Q167.5 59.8 167.4 59.1Q167.3 58.4 167.9 58.0Q168.6 57.6 169.1 57.6Q169.7 57.5 170.4 57.6Q171.0 57.7 171.1 58.4Q171.2 59.1 171.0 59.8Z"/><path d="M121.0 118.3Q121.1 118.7 120.8 119.1Q120.5 119.4 119.9 119.6Q119.3 119.9 118.4 119.6Q117.6 119.3 117.0 118.9Q116.5 118.4 116.2 117.9Q115.9 117.3 116.5 117.0Q117.0 116.7 117.7 116.7Q118.4 116.6 119.2 116.7Q120.1 116.8 120.5 117.3Q120.9 117.8 121.0 118.3Z"/><path d="M104.7 135.3Q104.7 135.8 104.5 136.2Q104.4 136.6 104.1 137.0Q103.8 137.4 103.3 137.4Q102.8 137.4 102.3 137.1Q101.9 136.8 101.9 136.3Q101.9 135.8 101.9 135.3Q101.9 134.8 102.4 134.6Q102.9 134.4 103.3 134.4Q103.8 134.3 104.2 134.6Q104.6 134.9 104.7 135.3Z"/><path d="M134.3 133.3Q134.5 133.6 134.2 133.9Q134.0 134.2 133.8 134.4Q133.6 134.7 133.2 134.8Q132.8 134.8 132.6 134.5Q132.3 134.2 132.3 133.9Q132.2 133.6 132.2 133.3Q132.3 132.9 132.6 132.7Q132.9 132.6 133.2 132.5Q133.6 132.4 133.9 132.6Q134.1 132.9 134.3 133.3Z"/><path d="M156.0 134.7Q156.2 135.2 156.0 135.7Q155.9 136.2 155.6 136.3Q155.2 136.5 154.9 136.6Q154.5 136.8 154.3 136.4Q154.0 136.1 153.9 135.6Q153.7 135.2 153.8 134.7Q153.9 134.2 154.2 134.0Q154.5 133.8 154.9 133.9Q155.2 133.9 155.5 134.1Q155.9 134.2 156.0 134.7Z"/><path d="M206.7 114.6Q206.7 115.3 206.5 115.9Q206.2 116.6 205.3 116.8Q204.5 117.1 203.7 116.6Q202.9 116.2 202.2 115.9Q201.4 115.6 201.5 115.0Q201.6 114.4 201.7 113.8Q201.8 113.2 202.5 112.8Q203.3 112.5 204.2 112.8Q205.0 113.2 205.8 113.6Q206.6 114.0 206.7 114.6Z"/><path d="M211.7 118.6Q211.9 119.0 211.7 119.3Q211.5 119.7 211.3 120.0Q211.0 120.3 210.6 120.2Q210.3 120.0 210.0 119.8Q209.7 119.6 209.5 119.3Q209.3 119.0 209.5 118.7Q209.7 118.3 210.0 118.2Q210.3 118.0 210.6 117.9Q211.0 117.9 211.3 118.1Q211.6 118.3 211.7 118.6Z"/><path d="M255.4 122.9Q255.4 123.7 255.2 124.3Q254.9 125.0 254.5 125.4Q254.1 125.8 253.4 126.0Q252.8 126.2 252.4 125.6Q251.9 125.1 251.8 124.4Q251.8 123.7 251.8 122.9Q251.7 122.1 252.3 121.8Q252.9 121.5 253.5 121.5Q254.1 121.4 254.7 121.7Q255.3 122.1 255.4 122.9Z"/><path d="M245.3 133.2Q245.3 133.6 245.3 134.0Q245.2 134.3 244.9 134.5Q244.6 134.7 244.2 134.7Q243.8 134.8 243.6 134.5Q243.3 134.3 243.1 133.9Q242.9 133.6 243.1 133.3Q243.3 132.9 243.5 132.7Q243.8 132.5 244.2 132.5Q244.6 132.4 244.9 132.7Q245.2 132.9 245.3 133.2Z"/><path d="M313.9 72.6Q314.1 73.9 314.2 75.1Q314.3 76.3 313.8 77.1Q313.4 77.9 312.8 78.2Q312.1 78.5 311.3 78.1Q310.4 77.6 309.9 76.2Q309.5 74.8 309.7 73.5Q309.9 72.2 310.3 71.4Q310.7 70.5 311.4 70.5Q312.1 70.5 312.9 70.9Q313.7 71.2 313.9 72.6Z"/><path d="M301.6 77.9Q301.7 78.6 301.3 79.2Q300.8 79.7 300.1 80.2Q299.4 80.7 298.4 80.5Q297.4 80.3 296.8 79.6Q296.2 79.0 295.8 78.2Q295.4 77.5 295.9 76.9Q296.4 76.2 297.3 75.9Q298.2 75.7 299.3 75.7Q300.3 75.8 300.9 76.5Q301.4 77.2 301.6 77.9Z"/><path d="M327.3 68.9Q327.6 69.2 327.5 69.6Q327.3 69.9 326.9 70.1Q326.5 70.3 326.0 70.4Q325.4 70.5 325.1 70.2Q324.7 69.9 324.6 69.5Q324.5 69.2 324.7 68.9Q325.0 68.6 325.2 68.4Q325.5 68.1 326.0 68.0Q326.6 67.9 326.8 68.3Q327.0 68.6 327.3 68.9Z"/><path d="M299.9 85.9Q300.1 86.5 299.8 87.0Q299.4 87.5 299.1 87.9Q298.7 88.4 298.1 88.4Q297.4 88.5 297.1 88.0Q296.8 87.5 296.4 87.0Q296.0 86.5 296.4 86.0Q296.7 85.5 297.1 85.1Q297.5 84.8 298.1 84.8Q298.7 84.8 299.2 85.1Q299.7 85.4 299.9 85.9Z"/><path d="M319.5 91.5Q319.7 92.0 319.5 92.5Q319.3 93.0 318.9 93.2Q318.5 93.5 318.0 93.4Q317.6 93.3 317.1 93.1Q316.6 93.0 316.5 92.5Q316.5 92.0 316.5 91.5Q316.6 90.9 317.1 90.9Q317.6 90.8 318.1 90.5Q318.6 90.3 318.9 90.7Q319.3 91.0 319.5 91.5Z"/><path d="M286.8 98.6Q286.8 99.1 286.7 99.6Q286.5 100.0 286.0 100.3Q285.5 100.5 284.9 100.5Q284.4 100.5 283.8 100.2Q283.3 100.0 283.2 99.6Q283.2 99.1 283.4 98.7Q283.5 98.3 283.9 97.9Q284.3 97.6 284.9 97.5Q285.6 97.4 286.2 97.7Q286.8 98.0 286.8 98.6Z"/><path d="M356.5 120.0Q356.7 120.4 356.7 120.9Q356.6 121.4 356.1 121.6Q355.7 121.8 355.1 122.0Q354.6 122.1 354.3 121.7Q354.0 121.3 353.9 120.8Q353.8 120.4 353.9 120.0Q354.0 119.5 354.3 119.2Q354.7 118.9 355.2 119.0Q355.6 119.0 356.0 119.3Q356.3 119.6 356.5 120.0Z"/><path d="M362.5 125.3Q362.7 125.7 362.5 126.0Q362.2 126.3 362.0 126.5Q361.8 126.8 361.4 126.8Q361.1 126.7 360.8 126.6Q360.4 126.4 360.3 126.0Q360.2 125.7 360.3 125.4Q360.5 125.0 360.8 124.8Q361.1 124.7 361.4 124.7Q361.7 124.8 362.0 124.9Q362.4 125.0 362.5 125.3Z"/><path d="M21.2 157.6Q21.3 158.1 21.1 158.6Q21.0 159.0 20.7 159.4Q20.4 159.7 20.0 159.6Q19.7 159.5 19.3 159.3Q19.0 159.1 18.9 158.6Q18.9 158.1 18.9 157.6Q19.0 157.1 19.3 156.9Q19.7 156.7 20.0 156.8Q20.3 156.8 20.7 157.0Q21.0 157.1 21.2 157.6Z"/><path d="M57.6 162.1Q58.1 162.8 57.7 163.6Q57.2 164.3 56.7 165.1Q56.2 165.8 55.4 165.8Q54.6 165.8 53.9 165.2Q53.3 164.6 53.1 163.7Q53.0 162.8 53.2 161.9Q53.3 161.0 54.0 160.6Q54.6 160.1 55.4 160.0Q56.2 159.8 56.7 160.6Q57.1 161.4 57.6 162.1Z"/><path d="M65.0 213.6Q65.0 214.1 64.7 214.5Q64.5 214.9 64.1 215.2Q63.7 215.5 63.1 215.4Q62.6 215.3 62.1 215.2Q61.5 215.0 61.3 214.6Q61.2 214.1 61.4 213.6Q61.5 213.2 62.1 213.0Q62.6 212.8 63.1 212.8Q63.6 212.9 64.3 212.9Q65.0 213.0 65.0 213.6Z"/><path d="M29.2 218.7Q29.2 219.2 29.0 219.6Q28.8 220.0 28.5 220.3Q28.1 220.5 27.7 220.7Q27.2 220.8 26.9 220.4Q26.6 220.0 26.3 219.6Q26.0 219.2 26.3 218.8Q26.5 218.3 26.8 217.9Q27.1 217.5 27.6 217.7Q28.1 217.9 28.6 218.0Q29.1 218.2 29.2 218.7Z"/><path d="M147.9 141.8Q148.0 142.2 148.0 142.7Q148.0 143.3 147.7 143.6Q147.3 143.8 146.9 143.8Q146.5 143.8 146.2 143.5Q145.9 143.2 145.9 142.7Q145.9 142.2 145.8 141.7Q145.8 141.1 146.2 141.0Q146.6 140.8 146.9 140.8Q147.3 140.7 147.5 141.0Q147.8 141.3 147.9 141.8Z"/><path d="M117.9 182.8Q118.0 183.1 118.0 183.5Q118.1 183.9 117.6 184.0Q117.1 184.2 116.6 184.3Q116.1 184.3 115.7 184.0Q115.4 183.7 115.3 183.4Q115.1 183.1 115.2 182.8Q115.4 182.4 115.8 182.3Q116.2 182.1 116.6 182.1Q117.0 182.2 117.4 182.3Q117.8 182.4 117.9 182.8Z"/><path d="M131.1 175.7Q131.3 176.0 131.3 176.4Q131.3 176.7 131.0 177.0Q130.6 177.2 130.2 177.4Q129.8 177.5 129.4 177.5Q129.0 177.5 128.8 177.3Q128.6 177.0 128.6 176.7Q128.7 176.3 128.9 176.0Q129.1 175.6 129.5 175.4Q130.0 175.2 130.4 175.3Q130.9 175.4 131.1 175.7Z"/><path d="M127.2 179.6Q127.4 179.8 127.3 180.0Q127.1 180.3 126.9 180.3Q126.7 180.4 126.5 180.5Q126.3 180.5 126.0 180.4Q125.8 180.3 125.8 180.0Q125.7 179.8 125.8 179.6Q125.8 179.3 126.1 179.2Q126.3 179.2 126.5 179.1Q126.8 179.0 126.9 179.2Q127.0 179.4 127.2 179.6Z"/><path d="M149.2 179.4Q149.2 179.8 149.1 180.1Q149.0 180.4 148.8 180.7Q148.6 180.9 148.2 180.8Q147.9 180.7 147.5 180.7Q147.1 180.6 147.1 180.2Q147.1 179.8 147.2 179.5Q147.3 179.1 147.6 178.9Q147.9 178.8 148.2 178.8Q148.5 178.9 148.9 178.9Q149.3 179.0 149.2 179.4Z"/><path d="M147.4 206.2Q147.3 206.6 147.0 207.0Q146.7 207.4 146.1 207.5Q145.6 207.6 145.2 207.3Q144.7 207.0 144.7 206.5Q144.7 206.0 144.7 205.6Q144.7 205.2 145.0 204.7Q145.3 204.3 145.8 204.4Q146.3 204.4 146.8 204.6Q147.2 204.8 147.4 205.3Q147.5 205.7 147.4 206.2Z"/><path d="M168.3 203.1Q168.5 203.5 168.3 203.9Q168.1 204.2 167.7 204.4Q167.3 204.6 166.8 204.7Q166.3 204.8 165.9 204.4Q165.6 204.1 165.5 203.8Q165.3 203.5 165.4 203.1Q165.4 202.8 165.9 202.6Q166.4 202.5 166.8 202.4Q167.3 202.4 167.7 202.6Q168.2 202.8 168.3 203.1Z"/><path d="M105.6 217.5Q105.8 217.9 105.6 218.3Q105.5 218.8 105.0 219.1Q104.6 219.4 104.0 219.4Q103.4 219.4 103.0 219.1Q102.6 218.7 102.5 218.3Q102.3 217.9 102.4 217.5Q102.6 217.1 103.0 216.8Q103.4 216.5 104.0 216.4Q104.7 216.3 105.1 216.6Q105.5 217.0 105.6 217.5Z"/><path d="M209.7 182.7Q210.1 183.1 209.8 183.5Q209.5 183.9 209.1 184.3Q208.8 184.7 208.1 184.7Q207.4 184.8 207.0 184.4Q206.5 184.0 206.2 183.6Q205.9 183.1 206.2 182.6Q206.5 182.2 207.0 181.9Q207.5 181.6 208.1 181.6Q208.7 181.7 209.0 182.0Q209.4 182.3 209.7 182.7Z"/><path d="M265.8 189.8Q266.1 190.4 265.8 191.0Q265.6 191.7 265.2 192.3Q264.8 192.8 264.1 192.7Q263.5 192.6 263.1 192.1Q262.7 191.6 262.6 191.0Q262.4 190.4 262.6 189.8Q262.7 189.1 263.1 188.6Q263.5 188.1 264.1 188.1Q264.7 188.1 265.1 188.7Q265.4 189.2 265.8 189.8Z"/><path d="M314.7 145.1Q314.8 145.5 314.6 145.8Q314.5 146.2 314.3 146.5Q314.0 146.8 313.6 146.8Q313.2 146.8 312.9 146.5Q312.6 146.3 312.5 145.9Q312.5 145.5 312.5 145.1Q312.5 144.7 312.9 144.6Q313.3 144.4 313.6 144.4Q314.0 144.3 314.3 144.5Q314.7 144.7 314.7 145.1Z"/><path d="M337.0 155.0Q337.3 155.2 337.5 155.5Q337.6 155.9 337.0 156.3Q336.3 156.6 335.6 157.0Q335.0 157.3 334.3 157.3Q333.5 157.4 333.4 157.0Q333.4 156.6 333.5 156.3Q333.6 155.9 333.8 155.5Q334.1 155.0 334.9 154.8Q335.6 154.6 336.1 154.7Q336.6 154.8 337.0 155.0Z"/><path d="M314.9 169.9Q315.2 170.3 315.0 170.8Q314.8 171.3 314.5 171.6Q314.2 171.9 313.8 171.9Q313.4 171.9 313.2 171.5Q313.0 171.1 312.9 170.7Q312.8 170.3 312.9 169.9Q313.0 169.5 313.2 169.2Q313.4 168.8 313.8 168.9Q314.1 169.1 314.3 169.3Q314.6 169.5 314.9 169.9Z"/><path d="M303.8 179.2Q303.8 180.0 303.3 180.5Q302.7 180.9 302.2 181.4Q301.8 181.9 301.3 181.6Q300.9 181.4 300.7 180.8Q300.5 180.2 300.6 179.5Q300.6 178.9 301.0 178.2Q301.3 177.6 301.9 177.4Q302.4 177.3 302.9 177.4Q303.3 177.5 303.6 178.0Q303.9 178.5 303.8 179.2Z"/><path d="M315.5 195.5Q315.8 196.4 315.6 197.4Q315.3 198.3 314.8 198.9Q314.4 199.5 313.8 199.5Q313.3 199.4 312.8 198.9Q312.3 198.4 312.2 197.4Q312.2 196.4 312.3 195.5Q312.4 194.5 312.8 193.9Q313.2 193.3 313.8 193.4Q314.3 193.5 314.7 194.1Q315.1 194.6 315.5 195.5Z"/><path d="M350.0 207.7Q350.1 208.1 350.0 208.6Q349.9 209.0 349.5 209.2Q349.0 209.4 348.6 209.5Q348.1 209.5 347.7 209.3Q347.2 209.1 347.0 208.6Q346.8 208.1 347.1 207.7Q347.4 207.2 347.8 207.0Q348.2 206.9 348.6 206.8Q349.0 206.8 349.4 207.0Q349.8 207.2 350.0 207.7Z"/><path d="M369.3 204.9Q369.4 205.3 369.3 205.7Q369.1 206.1 368.8 206.5Q368.5 206.9 368.0 206.9Q367.5 207.0 367.0 206.6Q366.6 206.3 366.5 205.8Q366.4 205.3 366.6 204.8Q366.7 204.4 367.1 204.1Q367.5 203.7 368.0 203.9Q368.4 204.0 368.8 204.2Q369.1 204.5 369.3 204.9Z"/><path d="M347.3 216.2Q347.9 217.0 347.6 218.0Q347.2 218.9 346.4 219.4Q345.5 219.8 344.6 219.7Q343.8 219.6 343.0 219.2Q342.2 218.7 341.8 217.9Q341.3 217.0 341.8 216.2Q342.3 215.3 342.9 214.6Q343.6 213.8 344.6 213.7Q345.7 213.5 346.2 214.5Q346.7 215.5 347.3 216.2Z"/><path d="M62.5 232.5Q62.6 233.3 62.6 234.2Q62.6 235.0 62.1 235.6Q61.6 236.2 61.0 235.8Q60.4 235.5 59.9 235.2Q59.4 234.8 59.1 234.0Q58.7 233.3 59.1 232.6Q59.5 231.9 59.9 231.3Q60.3 230.8 61.0 230.5Q61.6 230.3 62.0 231.0Q62.4 231.7 62.5 232.5Z"/><path d="M65.3 252.7Q65.5 253.2 65.3 253.7Q65.2 254.1 64.9 254.4Q64.6 254.7 64.2 254.7Q63.8 254.7 63.5 254.4Q63.3 254.1 63.1 253.7Q62.9 253.2 63.1 252.8Q63.4 252.4 63.6 252.1Q63.9 251.8 64.2 251.7Q64.6 251.5 64.9 251.9Q65.2 252.3 65.3 252.7Z"/><path d="M47.9 314.5Q48.8 315.2 48.4 316.1Q48.0 317.1 46.7 317.3Q45.4 317.5 44.2 317.8Q43.0 318.1 42.3 317.3Q41.6 316.6 40.9 315.9Q40.2 315.2 40.8 314.5Q41.4 313.7 42.2 313.2Q43.1 312.6 44.3 312.7Q45.4 312.8 46.3 313.3Q47.1 313.8 47.9 314.5Z"/><path d="M104.7 277.7Q104.9 278.2 104.8 278.8Q104.7 279.5 104.2 279.8Q103.8 280.1 103.3 280.1Q102.8 280.1 102.5 279.7Q102.1 279.3 101.8 278.7Q101.5 278.2 101.8 277.7Q102.2 277.2 102.5 276.6Q102.8 276.1 103.3 276.3Q103.7 276.5 104.1 276.8Q104.4 277.2 104.7 277.7Z"/><path d="M144.9 314.7Q144.9 315.2 144.9 315.7Q144.8 316.1 144.4 316.3Q144.1 316.5 143.8 316.5Q143.5 316.5 143.2 316.3Q142.8 316.1 142.8 315.7Q142.7 315.2 142.7 314.7Q142.7 314.2 143.1 314.0Q143.5 313.9 143.8 313.9Q144.1 313.9 144.5 314.0Q144.9 314.1 144.9 314.7Z"/><path d="M274.4 231.8Q274.7 232.2 274.6 232.7Q274.4 233.2 274.0 233.5Q273.5 233.7 273.0 233.7Q272.5 233.6 272.1 233.4Q271.7 233.2 271.5 232.7Q271.4 232.2 271.6 231.8Q271.8 231.4 272.2 231.1Q272.6 230.9 273.1 230.7Q273.6 230.5 273.8 230.9Q274.1 231.4 274.4 231.8Z"/><path d="M279.2 236.2Q279.3 236.6 279.3 237.0Q279.2 237.5 278.8 237.7Q278.4 238.0 278.0 238.0Q277.5 238.1 277.2 237.7Q276.9 237.4 276.7 237.0Q276.5 236.6 276.6 236.2Q276.8 235.7 277.2 235.5Q277.6 235.3 278.1 235.1Q278.5 234.9 278.8 235.3Q279.1 235.8 279.2 236.2Z"/><path d="M245.7 236.8Q245.9 237.1 245.8 237.5Q245.7 237.9 245.2 238.1Q244.7 238.2 244.2 238.3Q243.7 238.3 243.2 238.1Q242.8 237.9 242.6 237.5Q242.4 237.1 242.6 236.7Q242.8 236.4 243.3 236.2Q243.7 236.1 244.2 236.1Q244.6 236.1 245.0 236.3Q245.4 236.4 245.7 236.8Z"/><path d="M242.5 249.1Q242.9 249.5 242.7 250.0Q242.4 250.5 241.8 250.7Q241.1 250.9 240.4 250.9Q239.7 250.9 239.0 250.7Q238.3 250.5 238.1 250.0Q237.8 249.5 238.1 249.0Q238.5 248.6 239.1 248.4Q239.8 248.2 240.4 248.2Q241.1 248.1 241.6 248.4Q242.1 248.7 242.5 249.1Z"/><path d="M240.1 258.5Q240.3 258.8 240.2 259.1Q240.1 259.5 239.8 259.7Q239.5 259.9 239.1 260.0Q238.7 260.1 238.4 259.8Q238.0 259.6 238.1 259.2Q238.1 258.8 238.1 258.4Q238.1 258.1 238.4 257.9Q238.7 257.7 239.1 257.8Q239.4 257.9 239.7 258.0Q240.0 258.2 240.1 258.5Z"/><path d="M259.0 282.7Q259.1 283.1 258.9 283.4Q258.7 283.8 258.4 284.0Q258.0 284.3 257.5 284.3Q257.0 284.3 256.7 284.0Q256.4 283.7 256.3 283.4Q256.2 283.1 256.3 282.8Q256.3 282.5 256.7 282.2Q257.0 281.9 257.5 281.9Q258.1 281.8 258.5 282.1Q259.0 282.3 259.0 282.7Z"/><path d="M224.9 308.7Q225.0 309.2 224.8 309.7Q224.5 310.1 224.1 310.5Q223.7 310.8 223.2 310.9Q222.6 311.1 222.0 310.8Q221.4 310.5 221.5 309.9Q221.6 309.2 221.7 308.7Q221.9 308.2 222.2 307.8Q222.6 307.5 223.3 307.3Q223.9 307.1 224.3 307.6Q224.7 308.1 224.9 308.7Z"/><path d="M278.8 312.4Q279.1 313.0 278.8 313.6Q278.6 314.2 278.2 314.9Q277.8 315.5 277.0 315.4Q276.3 315.3 275.6 314.9Q274.9 314.5 274.8 313.8Q274.7 313.0 275.0 312.4Q275.3 311.8 275.8 311.4Q276.4 311.1 277.0 311.1Q277.6 311.1 278.1 311.5Q278.6 311.8 278.8 312.4Z"/><path d="M346.3 251.1Q346.5 251.5 346.2 251.9Q346.0 252.3 345.6 252.7Q345.3 253.2 344.6 253.2Q343.9 253.2 343.4 252.8Q342.9 252.5 342.6 252.0Q342.3 251.5 342.6 251.0Q342.9 250.5 343.4 250.2Q343.9 249.8 344.6 249.8Q345.3 249.9 345.7 250.2Q346.1 250.6 346.3 251.1Z"/><path d="M367.3 275.0Q367.8 275.1 367.5 275.4Q367.3 275.8 366.7 276.0Q366.1 276.3 365.4 276.5Q364.7 276.7 364.2 276.7Q363.6 276.7 363.4 276.5Q363.2 276.3 363.3 276.1Q363.4 275.8 363.9 275.5Q364.3 275.3 365.0 275.0Q365.7 274.8 366.2 274.9Q366.8 275.0 367.3 275.0Z"/><path d="M331.4 300.4Q331.7 300.8 331.6 301.3Q331.4 301.8 330.7 302.1Q330.0 302.4 329.1 302.3Q328.3 302.2 327.6 302.0Q327.0 301.7 326.5 301.2Q326.0 300.8 326.6 300.4Q327.1 300.0 327.7 299.6Q328.2 299.2 329.1 299.3Q329.9 299.3 330.5 299.7Q331.1 300.0 331.4 300.4Z"/><path d="M371.2 235.9Q371.3 236.6 371.3 237.4Q371.2 238.2 371.0 238.4Q370.7 238.5 370.5 238.7Q370.3 238.9 370.1 238.4Q369.9 238.0 369.8 237.3Q369.8 236.6 369.9 236.0Q370.0 235.4 370.1 234.9Q370.2 234.3 370.5 234.4Q370.7 234.5 370.9 234.8Q371.2 235.2 371.2 235.9Z"/><path d="M24.2 363.8Q24.3 364.6 24.3 365.5Q24.3 366.5 23.8 366.8Q23.3 367.0 22.8 367.2Q22.3 367.3 21.9 366.8Q21.5 366.3 21.4 365.4Q21.3 364.6 21.4 363.8Q21.6 363.0 21.9 362.6Q22.3 362.1 22.8 362.0Q23.3 361.9 23.7 362.4Q24.1 363.0 24.2 363.8Z"/><path d="M89.1 378.7Q89.5 379.0 89.4 379.4Q89.2 379.8 88.6 379.9Q88.0 380.1 87.4 380.1Q86.8 380.2 86.3 379.9Q85.9 379.7 85.7 379.3Q85.5 379.0 85.8 378.7Q86.1 378.4 86.5 378.2Q86.8 377.9 87.4 377.9Q88.0 377.9 88.4 378.1Q88.7 378.4 89.1 378.7Z"/><path d="M75.3 388.5Q75.5 389.6 75.2 390.5Q74.9 391.4 74.4 392.3Q73.9 393.1 73.1 392.8Q72.3 392.5 71.7 392.0Q71.0 391.5 70.7 390.6Q70.4 389.6 70.6 388.5Q70.8 387.5 71.6 387.2Q72.3 386.9 73.1 386.7Q73.8 386.4 74.5 386.9Q75.2 387.5 75.3 388.5Z"/><path d="M58.1 390.7Q58.5 391.1 58.2 391.5Q58.0 392.0 57.5 392.3Q57.1 392.6 56.5 392.5Q56.0 392.4 55.6 392.2Q55.2 391.9 54.9 391.5Q54.7 391.1 54.9 390.7Q55.2 390.3 55.6 390.0Q55.9 389.7 56.5 389.7Q57.1 389.7 57.4 390.0Q57.8 390.3 58.1 390.7Z"/><path d="M86.7 395.9Q86.7 396.4 86.3 396.8Q85.9 397.2 85.2 397.1Q84.4 397.1 83.6 396.8Q82.9 396.5 82.4 396.1Q81.8 395.6 81.5 395.0Q81.1 394.4 81.8 394.2Q82.4 394.0 83.1 393.9Q83.8 393.9 84.5 394.2Q85.2 394.6 86.0 395.0Q86.8 395.4 86.7 395.9Z"/><path d="M99.1 388.5Q99.2 388.9 99.1 389.2Q98.9 389.6 98.6 389.7Q98.3 389.9 98.0 390.0Q97.6 390.0 97.4 389.8Q97.2 389.5 97.1 389.2Q96.9 388.9 97.0 388.6Q97.2 388.3 97.4 388.0Q97.6 387.7 98.0 387.7Q98.4 387.7 98.7 387.9Q99.0 388.2 99.1 388.5Z"/><path d="M107.3 334.2Q107.1 335.1 106.7 336.0Q106.4 336.8 105.8 337.2Q105.3 337.6 104.7 337.7Q104.0 337.8 103.6 337.1Q103.2 336.4 103.5 335.3Q103.7 334.2 104.1 333.3Q104.6 332.4 105.2 331.6Q105.8 330.8 106.3 331.3Q106.8 331.8 107.1 332.5Q107.4 333.2 107.3 334.2Z"/><path d="M130.9 363.2Q131.1 363.5 130.9 363.8Q130.7 364.1 130.5 364.4Q130.3 364.8 129.9 364.7Q129.5 364.7 129.2 364.5Q128.8 364.3 128.8 363.9Q128.7 363.5 128.8 363.1Q128.9 362.8 129.2 362.6Q129.5 362.4 129.9 362.4Q130.3 362.3 130.5 362.6Q130.7 362.9 130.9 363.2Z"/><path d="M109.9 382.7Q110.1 383.0 109.8 383.3Q109.6 383.6 109.4 383.9Q109.2 384.2 108.8 384.1Q108.5 384.0 108.1 383.9Q107.8 383.7 107.6 383.4Q107.5 383.0 107.8 382.7Q108.0 382.4 108.2 382.2Q108.5 382.1 108.8 382.0Q109.1 381.9 109.4 382.1Q109.7 382.4 109.9 382.7Z"/><path d="M183.6 400.6Q183.9 401.0 183.8 401.5Q183.7 402.0 183.1 402.2Q182.4 402.3 181.9 402.3Q181.4 402.3 180.7 402.2Q180.0 402.1 179.9 401.5Q179.8 401.0 179.9 400.5Q180.0 399.9 180.7 399.7Q181.3 399.5 181.9 399.6Q182.5 399.6 182.9 399.9Q183.2 400.2 183.6 400.6Z"/><path d="M207.7 325.0Q207.8 325.4 207.7 325.8Q207.7 326.2 207.2 326.3Q206.7 326.5 206.2 326.5Q205.7 326.6 205.4 326.3Q205.1 326.0 204.7 325.7Q204.4 325.4 204.7 325.1Q205.1 324.8 205.4 324.6Q205.8 324.4 206.2 324.3Q206.7 324.2 207.1 324.5Q207.5 324.7 207.7 325.0Z"/><path d="M248.2 323.8Q248.2 324.3 248.1 324.7Q248.0 325.2 247.7 325.5Q247.5 325.8 247.1 325.8Q246.7 325.9 246.4 325.6Q246.0 325.3 245.9 324.8Q245.8 324.3 246.0 323.9Q246.2 323.4 246.4 323.0Q246.7 322.6 247.1 322.7Q247.5 322.8 247.8 323.1Q248.1 323.3 248.2 323.8Z"/><path d="M228.4 340.1Q228.7 340.9 228.4 341.7Q228.2 342.5 227.7 343.1Q227.2 343.6 226.4 343.9Q225.7 344.3 225.1 343.5Q224.6 342.8 224.5 341.8Q224.4 340.9 224.6 340.1Q224.7 339.2 225.2 338.4Q225.7 337.6 226.4 337.9Q227.2 338.1 227.7 338.7Q228.2 339.3 228.4 340.1Z"/><path d="M223.8 349.8Q223.8 350.2 223.8 350.6Q223.8 351.0 223.5 351.2Q223.1 351.5 222.7 351.5Q222.3 351.4 222.0 351.2Q221.6 351.0 221.6 350.6Q221.6 350.2 221.7 349.9Q221.8 349.6 222.1 349.3Q222.3 349.1 222.7 349.2Q223.0 349.3 223.4 349.3Q223.8 349.4 223.8 349.8Z"/><path d="M249.7 368.9Q249.7 369.4 249.5 369.8Q249.4 370.2 249.2 370.6Q249.0 370.9 248.6 370.8Q248.3 370.7 247.9 370.6Q247.5 370.4 247.5 369.9Q247.5 369.4 247.6 368.9Q247.6 368.5 247.9 368.1Q248.2 367.7 248.6 367.8Q249.0 368.0 249.3 368.2Q249.7 368.3 249.7 368.9Z"/><path d="M269.2 375.2Q269.0 375.7 268.6 375.9Q268.1 376.2 267.5 376.0Q266.9 375.9 266.3 375.7Q265.7 375.4 265.2 374.9Q264.7 374.3 265.0 373.9Q265.3 373.5 265.4 373.0Q265.6 372.5 266.4 372.7Q267.1 373.0 267.8 373.3Q268.4 373.5 268.9 374.1Q269.4 374.7 269.2 375.2Z"/><path d="M212.2 392.4Q212.6 392.8 212.6 393.4Q212.7 394.1 212.1 395.1Q211.6 396.1 210.0 397.2Q208.4 398.4 207.4 398.4Q206.3 398.4 205.2 398.6Q204.2 398.7 204.2 398.0Q204.2 397.2 205.3 396.1Q206.5 395.0 207.8 393.9Q209.2 392.7 210.5 392.3Q211.9 391.9 212.2 392.4Z"/><path d="M314.7 342.5Q315.0 343.1 314.7 343.7Q314.4 344.3 313.9 345.0Q313.5 345.6 312.7 345.7Q311.9 345.7 311.4 345.0Q310.9 344.4 310.6 343.7Q310.2 343.1 310.5 342.4Q310.7 341.7 311.3 341.2Q311.9 340.7 312.6 340.9Q313.3 341.1 313.9 341.5Q314.4 341.9 314.7 342.5Z"/><path d="M282.3 351.7Q282.4 352.4 282.1 353.0Q281.9 353.6 281.7 353.9Q281.4 354.3 281.0 354.6Q280.7 355.0 280.5 354.3Q280.3 353.6 280.1 353.0Q280.0 352.4 280.0 351.7Q280.1 350.9 280.4 350.7Q280.8 350.5 281.2 350.2Q281.5 349.9 281.8 350.4Q282.1 350.9 282.3 351.7Z"/><path d="M292.9 358.4Q293.1 359.0 292.7 359.5Q292.3 360.1 291.8 360.4Q291.3 360.8 290.5 361.0Q289.8 361.2 289.4 360.6Q289.0 360.0 288.7 359.5Q288.3 359.0 288.5 358.4Q288.7 357.8 289.2 357.4Q289.8 357.0 290.6 357.0Q291.4 357.1 292.0 357.4Q292.6 357.8 292.9 358.4Z"/><path d="M320.4 388.9Q320.7 389.5 320.7 390.2Q320.8 390.9 320.1 391.6Q319.5 392.2 318.4 392.4Q317.4 392.6 316.8 392.0Q316.1 391.5 315.4 391.0Q314.7 390.6 315.0 389.8Q315.3 389.1 316.1 388.6Q316.8 388.2 317.7 388.0Q318.5 387.8 319.3 388.1Q320.1 388.3 320.4 388.9Z"/><path d="M316.5 404.6Q316.6 405.0 316.4 405.4Q316.2 405.8 315.7 406.1Q315.1 406.4 314.3 406.4Q313.6 406.3 312.9 406.1Q312.2 405.9 311.8 405.4Q311.4 405.0 311.8 404.6Q312.2 404.1 312.9 403.9Q313.6 403.7 314.3 403.6Q315.1 403.6 315.7 403.9Q316.3 404.2 316.5 404.6Z"/><path d="M120.7 254.1Q118.3 250.3 119.8 250.1Q121.2 249.8 122.9 252.1Q124.6 254.3 128.8 251.8Q133.0 249.3 134.6 249.8Q136.2 250.3 133.8 252.4Q131.5 254.5 128.7 256.6Q125.8 258.6 124.4 258.2Q123.0 257.8 120.7 254.1Z"/><path d="M62.2 327.2Q62.5 326.5 64.0 326.2Q65.5 326.0 67.8 329.0Q70.0 332.0 71.5 334.8Q73.0 337.5 72.5 338.2Q72.0 339.0 70.8 338.0Q69.5 337.0 66.8 334.0Q64.0 331.0 63.0 329.5Q62.0 328.0 62.2 327.2Z"/><path d="M73.2 334.8Q72.8 332.5 73.4 332.5Q74.0 332.5 75.2 335.5Q76.5 338.5 76.0 339.0Q75.5 339.5 74.5 338.2Q73.5 337.0 73.2 334.8Z"/><path d="M65.8 345.8Q65.8 343.1 67.8 341.9Q69.7 340.6 72.2 340.1Q74.6 339.6 76.8 339.9Q79.0 340.1 81.0 341.6Q83.0 343.1 83.2 345.1Q83.5 347.0 82.2 349.2Q81.0 351.4 78.8 350.9Q76.6 350.5 75.2 350.5Q73.7 350.5 72.2 351.7Q70.7 352.9 69.2 352.4Q67.8 351.9 66.8 350.2Q65.8 348.5 65.8 345.8Z"/><path d="M51.5 182.7Q52.3 181.8 54.1 181.8Q56.0 181.8 57.2 183.9Q58.4 186.0 58.1 187.8Q57.8 189.7 56.9 191.6Q56.0 193.4 55.4 195.6Q54.7 197.7 53.2 198.0Q51.7 198.3 50.8 195.9Q49.8 193.4 49.7 190.4Q49.6 187.3 50.2 185.4Q50.8 183.6 51.5 182.7Z"/><path d="M51.2 202.4Q51.7 200.8 53.5 200.5Q55.4 200.2 56.2 201.4Q57.0 202.6 56.2 204.4Q55.4 206.3 53.8 206.7Q52.3 207.0 51.5 205.4Q50.8 203.9 51.2 202.4Z"/><path d="M34.6 232.6Q34.4 230.6 36.8 230.1Q39.2 229.7 40.5 231.6Q41.8 233.6 42.6 236.2Q43.5 238.8 43.7 240.9Q43.9 243.1 41.5 243.5Q39.2 243.9 37.2 243.2Q35.3 242.6 34.6 240.2Q34.0 237.9 34.5 236.2Q34.9 234.5 34.6 232.6Z"/><path d="M42.4 253.2Q42.2 251.7 45.0 251.2Q47.8 250.8 48.5 252.9Q49.1 255.1 47.8 256.1Q46.5 257.2 44.5 255.9Q42.6 254.7 42.4 253.2Z"/><path d="M208.8 63.5Q208.9 62.1 210.6 62.0Q212.3 61.8 213.7 62.5Q215.0 63.3 215.8 64.8Q216.6 66.4 216.1 67.8Q215.7 69.1 214.3 70.2Q212.9 71.3 211.5 72.5Q210.1 73.7 209.1 73.2Q208.0 72.8 207.8 70.7Q207.7 68.5 208.1 66.7Q208.6 64.8 208.8 63.5Z"/><path d="M361.4 71.5Q360.4 69.8 362.2 69.2Q364.1 68.6 366.0 67.3Q367.8 66.1 368.8 66.8Q369.7 67.4 370.4 69.8Q371.0 72.3 371.0 74.2Q371.0 76.0 368.8 76.8Q366.6 77.5 365.6 76.8Q364.7 76.0 363.5 74.6Q362.3 73.2 361.4 71.5Z"/><path d="M273.1 343.1Q273.8 341.6 275.1 342.0Q276.4 342.4 277.1 344.0Q277.8 345.7 279.1 347.4Q280.4 349.0 281.5 350.9Q282.6 352.7 282.1 354.4Q281.5 356.0 279.9 356.9Q278.2 357.8 276.5 357.2Q274.9 356.7 273.8 355.8Q272.7 354.9 272.1 351.9Q271.6 349.0 272.0 346.8Q272.3 344.6 273.1 343.1Z"/><path d="M346.9 290.0Q346.3 288.1 348.0 287.8Q349.6 287.4 351.5 288.3Q353.3 289.2 354.6 290.7Q355.8 292.2 357.0 294.2Q358.1 296.2 358.5 298.0Q358.8 299.9 357.9 300.8Q357.0 301.7 355.7 300.8Q354.4 299.9 352.8 297.9Q351.1 295.8 349.2 293.8Q347.4 291.8 346.9 290.0Z"/><path d="M14.6 401.8Q14.6 400.1 16.1 400.0Q17.6 399.9 19.5 400.3Q21.4 400.7 22.8 399.4Q24.1 398.2 25.7 397.8Q27.3 397.4 28.6 398.4Q30.0 399.3 31.1 400.6Q32.2 401.8 31.7 402.9Q31.1 403.9 30.6 405.7Q30.0 407.5 22.7 407.5Q15.4 407.5 15.0 405.4Q14.6 403.4 14.6 401.8Z"/><path d="M234.9 113.8Q235.1 112.1 236.1 111.9Q237.2 111.8 238.8 113.0Q240.3 114.2 240.8 116.1Q241.2 117.9 243.8 119.2Q246.4 120.4 247.2 121.6Q248.0 122.8 247.5 123.9Q247.0 125.0 245.5 124.7Q244.0 124.3 242.0 122.9Q240.0 121.6 238.3 119.8Q236.6 117.9 235.7 116.7Q234.8 115.4 234.9 113.8Z"/><path d="M250.8 223.2Q250.0 222.5 250.2 219.2Q250.5 216.0 252.2 214.0Q254.0 212.0 256.8 210.5Q259.5 209.0 261.0 209.5Q262.5 210.0 262.0 211.0Q261.5 212.0 259.0 213.5Q256.5 215.0 255.2 216.5Q253.8 218.0 253.7 220.5Q253.5 223.0 252.5 223.5Q251.5 224.0 250.8 223.2Z"/></g>
<g fill="#2a6cff" opacity="0.85"><ellipse cx="17.5" cy="132.5" rx="2" ry="1.6"/><ellipse cx="151" cy="52.5" rx="2.2" ry="1.3"/><ellipse cx="297.7" cy="116.4" rx="1.3" ry="1.3"/><ellipse cx="148.2" cy="179.8" rx="1.2" ry="1.2"/><ellipse cx="325.5" cy="265" rx="1.5" ry="1.8"/><ellipse cx="154.9" cy="135.5" rx="1.3" ry="1.5"/><ellipse cx="142" cy="221.9" rx="1.4" ry="1.2"/><ellipse cx="69.7" cy="66.6" rx="1.2" ry="1"/></g>
</g>
</svg>
<svg width="750" height="407" style="position:absolute;left:0;top:0"><rect x="14.0" y="49.2" width="0.7" height="0.8" fill="#505050"/><rect x="18.2" y="49.2" width="0.7" height="0.8" fill="#505050"/><rect x="22.4" y="49.2" width="0.7" height="0.8" fill="#505050"/><rect x="26.6" y="49.2" width="0.7" height="0.8" fill="#505050"/><rect x="30.8" y="49.2" width="0.7" height="0.8" fill="#505050"/><rect x="35.0" y="49.2" width="0.7" height="0.8" fill="#505050"/><rect x="39.2" y="49.2" width="0.7" height="0.8" fill="#505050"/><rect x="43.4" y="49.2" width="0.7" height="0.8" fill="#505050"/><rect x="47.6" y="49.2" width="0.7" height="0.8" fill="#505050"/><rect x="51.8" y="49.2" width="0.7" height="0.8" fill="#505050"/><rect x="56.0" y="49.2" width="0.7" height="0.8" fill="#505050"/><rect x="60.2" y="49.2" width="0.7" height="0.8" fill="#505050"/><rect x="64.4" y="49.2" width="0.7" height="0.8" fill="#505050"/><rect x="68.6" y="49.2" width="0.7" height="0.8" fill="#505050"/><rect x="72.8" y="49.2" width="0.7" height="0.8" fill="#505050"/><rect x="77.0" y="49.2" width="0.7" height="0.8" fill="#505050"/><rect x="81.2" y="49.2" width="0.7" height="0.8" fill="#505050"/><rect x="85.4" y="49.2" width="0.7" height="0.8" fill="#505050"/><rect x="89.6" y="49.2" width="0.7" height="0.8" fill="#505050"/><rect x="93.8" y="49.2" width="0.7" height="0.8" fill="#505050"/><rect x="98.0" y="49.2" width="0.7" height="0.8" fill="#505050"/><rect x="102.2" y="49.2" width="0.7" height="0.8" fill="#505050"/><rect x="106.4" y="49.2" width="0.7" height="0.8" fill="#505050"/><rect x="110.6" y="49.2" width="0.7" height="0.8" fill="#505050"/><rect x="114.8" y="49.2" width="0.7" height="0.8" fill="#505050"/><rect x="119.0" y="49.2" width="0.7" height="0.8" fill="#505050"/><rect x="123.2" y="49.2" width="0.7" height="0.8" fill="#505050"/><rect x="127.4" y="49.2" width="0.7" height="0.8" fill="#505050"/><rect x="131.6" y="49.2" width="0.7" height="0.8" fill="#505050"/><rect x="135.8" y="49.2" width="0.7" height="0.8" fill="#505050"/><rect x="140.0" y="49.2" width="0.7" height="0.8" fill="#505050"/><rect x="144.2" y="49.2" width="0.7" height="0.8" fill="#505050"/><rect x="148.4" y="49.2" width="0.7" height="0.8" fill="#505050"/><rect x="152.6" y="49.2" width="0.7" height="0.8" fill="#505050"/><rect x="156.8" y="49.2" width="0.7" height="0.8" fill="#505050"/><rect x="161.0" y="49.2" width="0.7" height="0.8" fill="#505050"/><rect x="165.2" y="49.2" width="0.7" height="0.8" fill="#505050"/><rect x="169.4" y="49.2" width="0.7" height="0.8" fill="#505050"/><rect x="173.6" y="49.2" width="0.7" height="0.8" fill="#505050"/><rect x="177.8" y="49.2" width="0.7" height="0.8" fill="#505050"/><rect x="182.0" y="49.2" width="0.7" height="0.8" fill="#505050"/><rect x="186.2" y="49.2" width="0.7" height="0.8" fill="#505050"/><rect x="190.4" y="49.2" width="0.7" height="0.8" fill="#505050"/><rect x="194.6" y="49.2" width="0.7" height="0.8" fill="#505050"/><rect x="198.8" y="49.2" width="0.7" height="0.8" fill="#505050"/><rect x="203.0" y="49.2" width="0.7" height="0.8" fill="#505050"/><rect x="207.2" y="49.2" width="0.7" height="0.8" fill="#505050"/><rect x="211.4" y="49.2" width="0.7" height="0.8" fill="#505050"/><rect x="215.6" y="49.2" width="0.7" height="0.8" fill="#505050"/><rect x="219.8" y="49.2" width="0.7" height="0.8" fill="#505050"/><rect x="224.0" y="49.2" width="0.7" height="0.8" fill="#505050"/><rect x="228.2" y="49.2" width="0.7" height="0.8" fill="#505050"/><rect x="232.4" y="49.2" width="0.7" height="0.8" fill="#505050"/><rect x="236.6" y="49.2" width="0.7" height="0.8" fill="#505050"/><rect x="240.8" y="49.2" width="0.7" height="0.8" fill="#505050"/><rect x="245.0" y="49.2" width="0.7" height="0.8" fill="#505050"/><rect x="249.2" y="49.2" width="0.7" height="0.8" fill="#505050"/><rect x="253.4" y="49.2" width="0.7" height="0.8" fill="#505050"/><rect x="257.6" y="49.2" width="0.7" height="0.8" fill="#505050"/><rect x="261.8" y="49.2" width="0.7" height="0.8" fill="#505050"/><rect x="266.0" y="49.2" width="0.7" height="0.8" fill="#505050"/><rect x="270.2" y="49.2" width="0.7" height="0.8" fill="#505050"/><rect x="274.4" y="49.2" width="0.7" height="0.8" fill="#505050"/><rect x="278.6" y="49.2" width="0.7" height="0.8" fill="#505050"/><rect x="282.8" y="49.2" width="0.7" height="0.8" fill="#505050"/><rect x="287.0" y="49.2" width="0.7" height="0.8" fill="#505050"/><rect x="291.2" y="49.2" width="0.7" height="0.8" fill="#505050"/><rect x="295.4" y="49.2" width="0.7" height="0.8" fill="#505050"/><rect x="299.6" y="49.2" width="0.7" height="0.8" fill="#505050"/><rect x="303.8" y="49.2" width="0.7" height="0.8" fill="#505050"/><rect x="308.0" y="49.2" width="0.7" height="0.8" fill="#505050"/><rect x="312.2" y="49.2" width="0.7" height="0.8" fill="#505050"/><rect x="316.4" y="49.2" width="0.7" height="0.8" fill="#505050"/><rect x="320.6" y="49.2" width="0.7" height="0.8" fill="#505050"/><rect x="324.8" y="49.2" width="0.7" height="0.8" fill="#505050"/><rect x="329.0" y="49.2" width="0.7" height="0.8" fill="#505050"/><rect x="333.2" y="49.2" width="0.7" height="0.8" fill="#505050"/><rect x="337.4" y="49.2" width="0.7" height="0.8" fill="#505050"/><rect x="341.6" y="49.2" width="0.7" height="0.8" fill="#505050"/><rect x="345.8" y="49.2" width="0.7" height="0.8" fill="#505050"/><rect x="350.0" y="49.2" width="0.7" height="0.8" fill="#505050"/><rect x="354.2" y="49.2" width="0.7" height="0.8" fill="#505050"/><rect x="358.4" y="49.2" width="0.7" height="0.8" fill="#505050"/><rect x="362.6" y="49.2" width="0.7" height="0.8" fill="#505050"/><rect x="366.8" y="49.2" width="0.7" height="0.8" fill="#505050"/><rect x="10" y="53.0" width="0.8" height="0.7" fill="#484848"/><rect x="10" y="57.2" width="0.8" height="0.7" fill="#484848"/><rect x="10" y="61.4" width="0.8" height="0.7" fill="#484848"/><rect x="10" y="65.6" width="0.8" height="0.7" fill="#484848"/><rect x="10" y="69.8" width="0.8" height="0.7" fill="#484848"/><rect x="10" y="74.0" width="0.8" height="0.7" fill="#484848"/><rect x="10" y="78.2" width="0.8" height="0.7" fill="#484848"/><rect x="10" y="82.4" width="0.8" height="0.7" fill="#484848"/><rect x="10" y="86.6" width="0.8" height="0.7" fill="#484848"/><rect x="10" y="90.8" width="0.8" height="0.7" fill="#484848"/><rect x="10" y="95.0" width="0.8" height="0.7" fill="#484848"/><rect x="10" y="99.2" width="0.8" height="0.7" fill="#484848"/><rect x="10" y="103.4" width="0.8" height="0.7" fill="#484848"/><rect x="10" y="107.6" width="0.8" height="0.7" fill="#484848"/><rect x="10" y="111.8" width="0.8" height="0.7" fill="#484848"/><rect x="10" y="116.0" width="0.8" height="0.7" fill="#484848"/><rect x="10" y="120.2" width="0.8" height="0.7" fill="#484848"/><rect x="10" y="124.4" width="0.8" height="0.7" fill="#484848"/><rect x="10" y="128.6" width="0.8" height="0.7" fill="#484848"/><rect x="10" y="132.8" width="0.8" height="0.7" fill="#484848"/><rect x="10" y="137.0" width="0.8" height="0.7" fill="#484848"/><rect x="10" y="141.2" width="0.8" height="0.7" fill="#484848"/><rect x="10" y="145.4" width="0.8" height="0.7" fill="#484848"/><rect x="10" y="149.6" width="0.8" height="0.7" fill="#484848"/><rect x="10" y="153.8" width="0.8" height="0.7" fill="#484848"/><rect x="10" y="158.0" width="0.8" height="0.7" fill="#484848"/><rect x="10" y="162.2" width="0.8" height="0.7" fill="#484848"/><rect x="10" y="166.4" width="0.8" height="0.7" fill="#484848"/><rect x="10" y="170.6" width="0.8" height="0.7" fill="#484848"/><rect x="10" y="174.8" width="0.8" height="0.7" fill="#484848"/><rect x="10" y="179.0" width="0.8" height="0.7" fill="#484848"/><rect x="10" y="183.2" width="0.8" height="0.7" fill="#484848"/><rect x="10" y="187.4" width="0.8" height="0.7" fill="#484848"/><rect x="10" y="191.6" width="0.8" height="0.7" fill="#484848"/><rect x="10" y="195.8" width="0.8" height="0.7" fill="#484848"/><rect x="10" y="200.0" width="0.8" height="0.7" fill="#484848"/><rect x="10" y="204.2" width="0.8" height="0.7" fill="#484848"/><rect x="10" y="208.4" width="0.8" height="0.7" fill="#484848"/><rect x="10" y="212.6" width="0.8" height="0.7" fill="#484848"/><rect x="10" y="216.8" width="0.8" height="0.7" fill="#484848"/><rect x="10" y="221.0" width="0.8" height="0.7" fill="#484848"/><rect x="10" y="225.2" width="0.8" height="0.7" fill="#484848"/><rect x="10" y="229.4" width="0.8" height="0.7" fill="#484848"/><rect x="10" y="233.6" width="0.8" height="0.7" fill="#484848"/><rect x="10" y="237.8" width="0.8" height="0.7" fill="#484848"/><rect x="10" y="242.0" width="0.8" height="0.7" fill="#484848"/><rect x="10" y="246.2" width="0.8" height="0.7" fill="#484848"/><rect x="10" y="250.4" width="0.8" height="0.7" fill="#484848"/><rect x="10" y="254.6" width="0.8" height="0.7" fill="#484848"/><rect x="10" y="258.8" width="0.8" height="0.7" fill="#484848"/><rect x="10" y="263.0" width="0.8" height="0.7" fill="#484848"/><rect x="10" y="267.2" width="0.8" height="0.7" fill="#484848"/><rect x="10" y="271.4" width="0.8" height="0.7" fill="#484848"/><rect x="10" y="275.6" width="0.8" height="0.7" fill="#484848"/><rect x="10" y="279.8" width="0.8" height="0.7" fill="#484848"/><rect x="10" y="284.0" width="0.8" height="0.7" fill="#484848"/><rect x="10" y="288.2" width="0.8" height="0.7" fill="#484848"/><rect x="10" y="292.4" width="0.8" height="0.7" fill="#484848"/><rect x="10" y="296.6" width="0.8" height="0.7" fill="#484848"/><rect x="10" y="300.8" width="0.8" height="0.7" fill="#484848"/><rect x="10" y="305.0" width="0.8" height="0.7" fill="#484848"/><rect x="10" y="309.2" width="0.8" height="0.7" fill="#484848"/><rect x="10" y="313.4" width="0.8" height="0.7" fill="#484848"/><rect x="10" y="317.6" width="0.8" height="0.7" fill="#484848"/><rect x="10" y="321.8" width="0.8" height="0.7" fill="#484848"/><rect x="10" y="326.0" width="0.8" height="0.7" fill="#484848"/><rect x="10" y="330.2" width="0.8" height="0.7" fill="#484848"/><rect x="10" y="334.4" width="0.8" height="0.7" fill="#484848"/><rect x="10" y="338.6" width="0.8" height="0.7" fill="#484848"/><rect x="10" y="342.8" width="0.8" height="0.7" fill="#484848"/><rect x="10" y="347.0" width="0.8" height="0.7" fill="#484848"/><rect x="10" y="351.2" width="0.8" height="0.7" fill="#484848"/><rect x="10" y="355.4" width="0.8" height="0.7" fill="#484848"/><rect x="10" y="359.6" width="0.8" height="0.7" fill="#484848"/><rect x="10" y="363.8" width="0.8" height="0.7" fill="#484848"/><rect x="10" y="368.0" width="0.8" height="0.7" fill="#484848"/><rect x="10" y="372.2" width="0.8" height="0.7" fill="#484848"/><rect x="10" y="376.4" width="0.8" height="0.7" fill="#484848"/><rect x="10" y="380.6" width="0.8" height="0.7" fill="#484848"/><rect x="10" y="384.8" width="0.8" height="0.7" fill="#484848"/><rect x="10" y="389.0" width="0.8" height="0.7" fill="#484848"/><rect x="10" y="393.2" width="0.8" height="0.7" fill="#484848"/><rect x="10" y="397.4" width="0.8" height="0.7" fill="#484848"/><rect x="10" y="401.6" width="0.8" height="0.7" fill="#484848"/><rect x="10" y="405.8" width="0.8" height="0.7" fill="#484848"/></svg>
<div class="rl" style="left:20px;top:44.8px;width:30px;text-align:center">12,15</div><div class="rl" style="left:41px;top:44.8px;width:30px;text-align:center">12,2</div><div class="rl" style="left:62px;top:44.8px;width:30px;text-align:center">12,25</div><div class="rl" style="left:83px;top:44.8px;width:30px;text-align:center">12,3</div><div class="rl" style="left:104px;top:44.8px;width:30px;text-align:center">12,35</div><div class="rl" style="left:125px;top:44.8px;width:30px;text-align:center">12,4</div><div class="rl" style="left:146px;top:44.8px;width:30px;text-align:center">12,45</div><div class="rl" style="left:167px;top:44.8px;width:30px;text-align:center">12,5</div><div class="rl" style="left:188px;top:44.8px;width:30px;text-align:center">12,55</div><div class="rl" style="left:209px;top:44.8px;width:30px;text-align:center">12,6</div><div class="rl" style="left:230px;top:44.8px;width:30px;text-align:center">12,65</div><div class="rl" style="left:251px;top:44.8px;width:30px;text-align:center">12,7</div><div class="rl" style="left:272px;top:44.8px;width:30px;text-align:center">12,75</div><div class="rl" style="left:293px;top:44.8px;width:30px;text-align:center">12,8</div><div class="rl" style="left:314px;top:44.8px;width:30px;text-align:center">12,85</div><div class="rl" style="left:335px;top:44.8px;width:30px;text-align:center">12,9</div><div class="rl" style="left:358px;top:44.8px;width:12px;text-align:right">mm</div><div class="rl" style="left:-7px;top:66px;width:30px;text-align:center;transform:rotate(-90deg);transform-origin:15px 3px;">13,05</div><div class="rl" style="left:-7px;top:87px;width:30px;text-align:center;transform:rotate(-90deg);transform-origin:15px 3px;">13,1</div><div class="rl" style="left:-7px;top:108px;width:30px;text-align:center;transform:rotate(-90deg);transform-origin:15px 3px;">13,15</div><div class="rl" style="left:-7px;top:129px;width:30px;text-align:center;transform:rotate(-90deg);transform-origin:15px 3px;">13,2</div><div class="rl" style="left:-7px;top:150px;width:30px;text-align:center;transform:rotate(-90deg);transform-origin:15px 3px;">13,25</div><div class="rl" style="left:-7px;top:171px;width:30px;text-align:center;transform:rotate(-90deg);transform-origin:15px 3px;">13,3</div><div class="rl" style="left:-7px;top:192px;width:30px;text-align:center;transform:rotate(-90deg);transform-origin:15px 3px;">13,35</div><div class="rl" style="left:-7px;top:213px;width:30px;text-align:center;transform:rotate(-90deg);transform-origin:15px 3px;">13,4</div><div class="rl" style="left:-7px;top:234px;width:30px;text-align:center;transform:rotate(-90deg);transform-origin:15px 3px;">13,45</div><div class="rl" style="left:-7px;top:255px;width:30px;text-align:center;transform:rotate(-90deg);transform-origin:15px 3px;">13,5</div><div class="rl" style="left:-7px;top:276px;width:30px;text-align:center;transform:rotate(-90deg);transform-origin:15px 3px;">13,55</div><div class="rl" style="left:-7px;top:297px;width:30px;text-align:center;transform:rotate(-90deg);transform-origin:15px 3px;">13,6</div><div class="rl" style="left:-7px;top:318px;width:30px;text-align:center;transform:rotate(-90deg);transform-origin:15px 3px;">13,65</div><div class="rl" style="left:-7px;top:339px;width:30px;text-align:center;transform:rotate(-90deg);transform-origin:15px 3px;">13,7</div><div class="rl" style="left:-7px;top:360px;width:30px;text-align:center;transform:rotate(-90deg);transform-origin:15px 3px;">13,75</div><div class="rl" style="left:-7px;top:381px;width:30px;text-align:center;transform:rotate(-90deg);transform-origin:15px 3px;">13,8</div><div class="rl" style="left:-7px;top:402px;width:30px;text-align:center;transform:rotate(-90deg);transform-origin:15px 3px;">13,85</div>
<!-- objective & stopwatch -->
<svg style="position:absolute;left:340px;top:26px" width="35" height="12">
<rect x="6" y="2.7" width="5" height="6.6" rx="2" fill="#b8b8b8" stroke="#111" stroke-width="0.4"/>
<rect x="6.2" y="2.9" width="4.6" height="2" rx="1" fill="#e8e8e8"/>
<rect x="6.2" y="5" width="4.6" height="1.3" fill="#f0d000"/>
<circle cx="23.9" cy="6.7" r="3" fill="none" stroke="#c8c8c8" stroke-width="0.9"/>
<rect x="23.3" y="2.2" width="1.2" height="1.4" fill="#c8c8c8"/>
<path d="M23.9 6.7L22.5 5.5" stroke="#c8c8c8" stroke-width="0.7"/>
</svg>
<div class="rl" style="left:345.8px;top:36.9px;color:#e4ecf4">10x</div>
<div class="rl" style="left:355.6px;top:36.9px;color:#e4ecf4">1.19 ms</div>
<!-- scale bar -->
<div style="left:321px;top:395.5px;width:47px;height:12px;background:#b4b4b8;border-radius:1px"></div>
<div style="left:322.3px;top:397px;width:44.5px;height:10px;background:#fff;border-top:1.2px solid #3a3a3a"></div>
<div style="left:321px;top:400.1px;width:47px;text-align:center;font-size:4.9px;line-height:6px;color:#444">100 µm</div>

<!-- overview panel -->
<div class="hd" style="left:378.6px;top:28.6px">Sample overview</div>
<div style="left:379px;top:36px;width:165px;height:1px;background:#8a8a8a"></div>
<div style="left:379px;top:40px;width:165px;height:165px;background:#303030;box-shadow:inset 0 0 0 1px #434a52"></div>
<svg style="position:absolute;left:379px;top:40px" width="165" height="165">
<defs>
<clipPath id="ovc2"><circle cx="82" cy="82" r="81"/></clipPath><radialGradient id="rim" cx="82" cy="82" r="81" gradientUnits="userSpaceOnUse"><stop offset="0.8" stop-color="#fff" stop-opacity="0"/><stop offset="1" stop-color="#fff" stop-opacity="0.35"/></radialGradient><clipPath id="ovn"><path d="M0 0H165V146.3H100.5V155.4H0Z"/></clipPath>
<filter id="mott2" x="0" y="0" width="100%" height="100%">
<feTurbulence type="fractalNoise" baseFrequency="0.045" numOctaves="4" seed="11"/>
<feColorMatrix type="matrix" values="0 0 0 0 0.35  0 0 0 0 0.37  0 0 0 0 0.37  1.2 0 0 0 -0.45"/>
<feComposite in2="SourceGraphic" operator="in"/>
</filter>
<filter id="grain" x="0" y="0" width="100%" height="100%">
<feTurbulence type="fractalNoise" baseFrequency="0.9" numOctaves="1" seed="5"/>
<feColorMatrix type="matrix" values="0 0 0 0 0.3  0 0 0 0 0.3  0 0 0 0 0.3  1.2 0 0 0 -0.45"/>
<feComposite in2="SourceGraphic" operator="in"/>
</filter>
</defs>
<circle cx="82" cy="82" r="81.2" fill="none" stroke="#3e5a6a" stroke-width="0.9"/>
<g clip-path="url(#ovc2)">
<path d="M0 0H165V146.3H100.5V155.4H0Z" fill="#dadcdc"/>
<path d="M0 0H165V146.3H100.5V155.4H0Z" fill="#000" filter="url(#mott2)" opacity="0.6"/>
<path d="M0 0H165V146.3H100.5V155.4H0Z" fill="#000" filter="url(#grain)" opacity="0.3"/>
<g clip-path="url(#ovn)"><path d="M37.9 144.8h.75M38.8 66.2h.75M102.5 96.0h.75M35.5 26.9h.75M61.9 33.2h.75M87.3 113.4h.75M38.4 92.2h.75M48.6 28.7h.75M119.3 118.8h.75M19.7 6.5h.75M143.2 90.6h.75M95.1 89.2h.75M30.4 1.8h.75M61.1 136.4h.75M106.0 148.3h.75M13.2 122.1h.75M146.3 151.9h.75M149.4 107.1h.75M158.4 45.3h.75M89.1 150.2h.75M148.3 75.4h.75M50.3 73.6h.75M32.9 72.2h.75M139.7 18.6h.75M122.6 71.1h.75M103.9 128.9h.75M89.3 124.3h.75M39.1 99.6h.75M10.3 121.7h.75M80.8 61.2h.75M36.3 2.4h.75M40.7 67.4h.75M161.8 137.4h.75M115.6 39.3h.75M124.7 154.7h.75M102.2 56.3h.75M72.2 107.8h.75M78.9 51.2h.75M35.9 71.0h.75M83.4 98.5h.75M27.6 72.1h.75M50.7 52.0h.75M95.2 33.8h.75M0.6 58.2h.75M62.5 106.9h.75M99.4 77.0h.75M13.8 142.6h.75M51.0 63.8h.75M58.5 98.4h.75M156.5 29.8h.75M35.9 25.4h.75M150.6 38.0h.75M10.8 16.4h.75M57.2 115.8h.75M14.5 102.8h.75M146.8 49.8h.75M123.5 80.9h.75M106.5 125.9h.75M15.0 9.2h.75M156.3 43.3h.75M157.0 60.7h.75M25.3 128.1h.75M31.1 17.3h.75M81.7 113.4h.75M32.7 103.9h.75M157.8 78.7h.75M162.1 109.4h.75M153.2 0.1h.75M87.4 83.7h.75M83.5 118.0h.75M126.8 152.0h.75M20.8 25.4h.75M102.1 4.8h.75M3.1 48.4h.75M156.1 146.8h.75M5.7 123.6h.75M18.1 141.3h.75M14.9 85.4h.75M154.0 6.4h.75M158.8 35.9h.75M61.5 41.1h.75M13.6 99.8h.75M73.0 69.9h.75M141.5 18.7h.75M58.8 91.0h.75M71.1 64.1h.75M97.7 86.2h.75M19.1 69.8h.75M147.2 89.6h.75M120.4 42.6h.75M2.0 124.9h.75M36.6 80.5h.75M25.0 115.5h.75M140.2 2.1h.75M145.5 93.2h.75M119.7 31.7h.75M141.6 30.0h.75M125.6 74.9h.75M82.9 53.0h.75M153.2 25.0h.75M63.4 84.5h.75M23.6 27.9h.75M105.6 50.6h.75M17.3 9.2h.75M151.6 130.7h.75M130.3 118.1h.75M54.3 40.2h.75M58.3 56.9h.75M10.0 110.5h.75M147.4 74.3h.75M65.9 108.2h.75M125.7 52.1h.75M123.5 137.3h.75M38.6 66.6h.75M38.2 140.7h.75M154.4 144.0h.75M91.0 119.9h.75M38.7 87.5h.75M46.3 134.9h.75M108.7 79.8h.75M73.2 107.8h.75M4.6 141.6h.75M0.8 28.6h.75M147.3 64.5h.75M142.5 44.0h.75M159.1 20.9h.75M92.2 25.4h.75M41.6 54.6h.75M109.0 25.3h.75M81.7 56.4h.75M141.2 82.6h.75M93.8 92.5h.75M41.9 35.4h.75M122.2 6.1h.75M92.4 141.9h.75M162.8 112.2h.75M118.6 52.8h.75M76.6 64.1h.75M64.8 106.8h.75M71.1 76.3h.75M16.5 136.7h.75M8.2 147.0h.75M90.6 51.5h.75M162.1 141.1h.75M6.6 110.8h.75M67.4 76.6h.75M152.2 101.5h.75M21.3 132.1h.75M89.6 122.6h.75M9.3 153.4h.75M91.5 24.8h.75M162.9 74.5h.75M25.3 137.8h.75M11.8 116.2h.75M29.4 3.3h.75M22.6 121.3h.75M99.8 16.3h.75M142.8 109.3h.75M150.0 89.3h.75M98.2 90.5h.75M141.6 14.3h.75M149.5 115.2h.75M120.1 87.8h.75M150.5 104.5h.75M55.0 68.1h.75M49.7 0.6h.75M101.6 90.0h.75M132.4 121.3h.75M23.2 18.2h.75M19.6 117.3h.75M11.8 152.9h.75M46.5 91.9h.75M140.4 145.9h.75M53.5 93.5h.75M92.1 87.0h.75M93.8 153.6h.75M71.1 47.6h.75M134.9 98.3h.75M46.2 139.2h.75M1.6 72.6h.75M45.5 126.2h.75M107.5 77.0h.75M95.9 55.4h.75M124.7 97.7h.75M10.0 5.9h.75M34.1 117.7h.75M13.0 33.2h.75M14.9 6.0h.75M51.2 153.3h.75M40.6 146.4h.75M29.4 95.7h.75M54.2 7.5h.75M53.8 70.0h.75M108.6 107.7h.75M29.9 152.1h.75M90.3 82.7h.75M148.7 113.4h.75M7.4 44.0h.75M83.6 39.4h.75M148.9 79.9h.75M87.4 48.9h.75M99.0 131.3h.75M37.0 77.9h.75M75.5 68.4h.75M154.9 111.3h.75M115.4 60.6h.75M50.0 59.2h.75M157.1 26.9h.75M109.6 19.2h.75M86.2 23.0h.75M160.6 121.0h.75M4.8 127.6h.75M95.0 81.6h.75M135.4 46.7h.75M10.0 145.2h.75M32.9 92.2h.75M37.4 113.8h.75M20.3 148.2h.75M28.0 14.4h.75M0.1 128.4h.75M40.1 2.2h.75M54.2 139.2h.75M117.1 152.3h.75M74.3 23.7h.75M145.0 40.8h.75M26.9 131.2h.75M120.5 39.1h.75M40.9 3.5h.75M53.8 95.9h.75M66.9 14.8h.75M2.3 130.2h.75M22.5 28.3h.75M59.9 45.6h.75M34.2 144.6h.75M118.2 42.3h.75M53.7 39.3h.75M99.9 40.1h.75M142.7 72.6h.75M29.9 141.1h.75M152.7 142.2h.75M145.7 84.8h.75M156.2 4.6h.75M138.7 101.7h.75M92.7 16.9h.75M20.5 154.3h.75M151.4 66.8h.75M27.5 138.9h.75M92.1 68.7h.75M0.4 110.5h.75M0.6 1.3h.75M76.8 4.8h.75M125.3 60.4h.75M15.3 137.2h.75M0.4 97.8h.75M149.0 82.3h.75M117.5 20.9h.75M120.7 89.2h.75M154.6 13.7h.75M65.8 37.9h.75M109.1 5.6h.75M142.2 73.4h.75M53.2 151.9h.75M13.9 38.4h.75M125.5 130.1h.75M23.6 38.7h.75M42.2 64.1h.75M91.0 126.0h.75M156.2 127.5h.75M52.5 18.4h.75M72.8 105.2h.75M72.4 144.7h.75M153.6 74.4h.75M98.7 153.6h.75M112.4 56.4h.75M130.0 43.7h.75M74.6 105.7h.75M41.5 121.3h.75M100.1 25.2h.75M107.6 8.7h.75M84.8 75.7h.75M128.3 131.3h.75M130.9 137.5h.75M44.9 70.3h.75M127.5 13.4h.75M23.3 82.0h.75M93.4 14.8h.75M142.9 127.3h.75M152.8 152.0h.75M52.9 101.2h.75M4.5 52.8h.75M112.8 123.0h.75M19.3 138.4h.75M87.5 123.2h.75M33.7 61.2h.75M59.6 120.8h.75M41.1 137.6h.75M35.0 149.5h.75M114.1 82.2h.75M164.5 148.4h.75M89.9 98.3h.75M39.5 139.9h.75M5.9 68.5h.75M25.6 74.2h.75M71.1 33.9h.75M57.4 49.9h.75M78.4 32.9h.75M42.5 47.9h.75M32.9 117.5h.75M122.3 123.6h.75M89.6 91.8h.75M86.5 53.7h.75M30.0 81.0h.75M68.2 60.4h.75M164.0 25.7h.75M15.1 74.6h.75M124.2 105.1h.75M96.4 42.2h.75M53.0 41.9h.75M26.4 56.1h.75M117.1 40.3h.75M32.8 92.8h.75M41.4 36.2h.75M7.0 68.3h.75M29.3 26.4h.75M129.9 5.3h.75M131.3 144.6h.75M44.9 13.8h.75M69.3 144.3h.75M108.0 43.5h.75M113.9 59.9h.75M34.2 83.2h.75M101.1 21.6h.75M131.3 104.5h.75M66.9 123.5h.75M98.8 38.0h.75M122.4 149.9h.75M136.7 68.2h.75M30.6 75.0h.75M89.7 117.1h.75M122.7 84.5h.75M29.2 71.2h.75M120.7 112.6h.75M36.0 34.7h.75M59.0 57.9h.75M49.8 111.4h.75M63.0 75.6h.75M83.3 96.5h.75M116.8 58.6h.75M41.4 109.9h.75M135.8 140.1h.75M114.0 60.1h.75M62.1 31.8h.75M45.3 84.0h.75M43.0 119.2h.75M135.1 40.2h.75M150.5 33.9h.75M62.4 62.5h.75M12.0 68.8h.75M146.7 46.9h.75M120.4 105.5h.75M66.0 86.7h.75M154.7 45.8h.75M163.1 1.2h.75M74.7 87.5h.75M124.9 45.4h.75M23.9 2.3h.75M156.7 144.2h.75M80.6 88.2h.75M163.8 130.2h.75M154.8 5.6h.75M129.8 153.2h.75M110.2 104.5h.75M139.5 155.0h.75M62.4 146.4h.75M16.9 51.9h.75M42.4 45.6h.75M144.6 34.4h.75M115.8 113.7h.75M4.0 144.9h.75M97.5 123.2h.75M46.0 139.0h.75M66.3 103.8h.75M122.9 87.8h.75M89.2 82.4h.75M124.5 27.1h.75M103.1 125.0h.75M40.0 18.2h.75M158.1 84.2h.75M35.6 47.5h.75M3.9 115.3h.75M29.3 15.4h.75M100.3 30.7h.75M152.2 81.0h.75M50.3 118.4h.75M55.7 146.0h.75M151.1 138.9h.75M96.2 92.0h.75M27.5 44.4h.75M14.9 4.7h.75M143.6 93.2h.75M91.8 144.6h.75M32.1 147.3h.75M28.8 126.3h.75M154.5 86.0h.75M41.0 85.0h.75M140.0 46.7h.75M161.3 31.2h.75M32.6 131.2h.75M24.3 74.1h.75M91.0 93.6h.75M78.6 110.2h.75M85.0 52.2h.75M27.5 59.1h.75M48.8 90.1h.75M49.2 135.7h.75M75.8 20.5h.75M112.6 69.5h.75M154.0 131.1h.75M129.7 86.0h.75M125.7 51.3h.75M163.7 114.3h.75M16.1 109.4h.75M5.9 54.4h.75M98.0 80.9h.75M17.8 130.6h.75M52.6 2.2h.75M106.4 89.4h.75M33.4 48.2h.75M16.6 126.9h.75M155.9 52.7h.75M32.5 135.6h.75M161.8 140.5h.75M31.7 77.7h.75M141.5 113.2h.75M139.0 78.5h.75M16.7 125.2h.75M18.4 37.3h.75M52.6 74.1h.75M32.1 125.0h.75M24.0 39.1h.75M141.6 125.9h.75M40.8 60.0h.75M121.8 44.8h.75M113.2 13.0h.75M0.3 115.1h.75M116.8 86.1h.75M144.6 104.9h.75M63.0 28.8h.75M67.2 141.6h.75M6.8 89.5h.75M163.6 62.7h.75M139.5 57.8h.75M100.0 143.3h.75M82.0 87.3h.75M88.6 98.2h.75M140.7 32.8h.75M26.5 117.3h.75M108.1 6.2h.75M136.0 14.2h.75M145.0 19.9h.75M21.0 30.1h.75M45.0 12.2h.75M134.7 57.1h.75M147.0 62.2h.75M135.3 37.0h.75M157.3 96.0h.75M76.9 39.4h.75M134.0 125.3h.75M133.4 33.0h.75M111.8 134.5h.75M92.3 136.6h.75M7.8 98.2h.75M15.1 90.7h.75M74.4 93.0h.75M146.5 137.5h.75M129.4 43.7h.75M82.4 19.1h.75M139.0 110.1h.75M64.2 131.7h.75M111.3 80.1h.75M123.6 95.1h.75M36.1 71.8h.75M7.7 153.5h.75M53.2 90.7h.75M131.9 38.0h.75M59.9 90.3h.75M82.1 137.5h.75M130.2 63.5h.75M57.7 75.8h.75M129.9 100.4h.75M155.5 124.0h.75M164.1 78.8h.75M98.5 38.5h.75M155.2 112.6h.75M60.0 55.6h.75M3.5 130.9h.75M70.2 19.5h.75M142.9 119.0h.75M42.8 63.1h.75M0.5 77.7h.75M66.6 49.6h.75M14.7 34.7h.75M113.9 149.0h.75M55.0 12.1h.75M150.9 104.3h.75M132.6 39.3h.75M54.5 51.9h.75M164.5 61.4h.75M75.8 146.5h.75M110.3 44.0h.75M78.1 117.1h.75M65.2 120.5h.75M147.0 5.4h.75M98.3 89.9h.75M76.8 120.9h.75M104.9 35.1h.75M36.4 132.2h.75M99.0 127.8h.75M54.3 85.0h.75M147.0 118.3h.75M116.3 119.8h.75M43.1 137.6h.75M0.7 146.1h.75M28.0 131.9h.75M26.4 79.5h.75M69.1 41.2h.75M125.0 23.6h.75M11.8 113.0h.75M96.2 1.9h.75M18.9 134.3h.75M22.4 112.9h.75M33.1 29.7h.75M92.6 141.8h.75M164.1 107.4h.75M18.7 36.5h.75M159.3 151.1h.75M94.4 92.7h.75M130.5 100.6h.75M149.7 69.2h.75M54.3 66.5h.75M86.6 26.6h.75M106.6 62.1h.75M68.2 81.0h.75M81.7 39.7h.75M152.2 9.0h.75M109.7 32.3h.75M95.1 39.8h.75M86.0 17.4h.75M12.0 69.4h.75M63.3 92.5h.75M25.1 55.5h.75M64.9 18.6h.75M83.7 48.9h.75M145.6 66.7h.75M9.0 144.7h.75M47.0 62.8h.75M2.0 69.7h.75M24.6 34.1h.75M123.4 99.3h.75M105.7 146.3h.75M37.5 100.9h.75M142.4 113.2h.75M163.7 65.9h.75M89.0 128.4h.75M72.2 148.2h.75M49.4 104.3h.75M61.1 45.5h.75M98.7 147.7h.75M9.4 16.4h.75M86.7 20.2h.75M46.8 19.2h.75M143.9 10.8h.75M148.8 114.1h.75M43.0 145.4h.75M88.0 6.1h.75M79.7 17.9h.75M40.8 135.6h.75M99.0 36.1h.75M71.3 58.4h.75M102.4 78.7h.75M156.2 121.8h.75M61.1 112.8h.75M76.2 93.5h.75M68.0 151.6h.75M41.2 68.8h.75M26.8 119.3h.75M51.9 3.4h.75M103.9 77.7h.75M13.5 4.9h.75M21.2 154.8h.75M149.3 31.3h.75M142.6 54.8h.75M150.5 99.1h.75M4.2 2.1h.75M65.9 98.1h.75M161.6 73.0h.75M74.1 1.3h.75M26.9 107.6h.75M136.6 80.2h.75M7.3 126.8h.75M132.5 99.5h.75M163.2 64.8h.75M45.5 115.4h.75M37.7 123.7h.75M103.1 116.1h.75M105.1 108.6h.75M44.1 81.7h.75M117.9 2.4h.75M141.1 11.4h.75M18.5 79.2h.75M22.9 110.4h.75M92.4 83.5h.75M126.0 141.5h.75M164.0 81.2h.75M2.0 118.2h.75M161.0 64.8h.75M98.6 14.3h.75M131.4 140.9h.75M70.1 85.2h.75M127.3 3.0h.75M146.3 121.3h.75M31.8 37.9h.75M96.5 102.1h.75M45.6 46.3h.75M98.6 38.8h.75M82.9 34.5h.75M146.5 114.4h.75M54.7 117.4h.75M25.4 142.7h.75M47.9 129.5h.75M70.3 128.4h.75M74.3 125.7h.75M70.0 11.9h.75M141.9 65.0h.75M129.0 18.7h.75M114.7 27.7h.75M124.0 109.3h.75M153.6 148.3h.75M144.5 20.2h.75M8.4 92.1h.75M149.7 43.3h.75M157.8 33.7h.75M146.1 19.0h.75M60.7 58.0h.75M117.3 80.4h.75M112.4 102.4h.75M103.8 17.4h.75M32.9 151.9h.75M36.3 125.6h.75M5.8 80.2h.75M82.9 40.0h.75M1.5 76.6h.75M42.8 78.9h.75M149.9 116.7h.75M68.1 52.6h.75M38.3 139.3h.75M80.3 24.0h.75M80.9 131.0h.75M60.4 114.5h.75M71.6 26.3h.75M126.0 30.3h.75M84.1 2.0h.75M47.0 57.1h.75M117.8 28.6h.75M44.3 116.3h.75M76.5 120.7h.75M120.6 84.1h.75M142.1 36.9h.75M162.7 20.6h.75M100.7 114.6h.75M116.3 24.2h.75M52.7 103.6h.75M112.7 3.8h.75M7.5 128.6h.75M117.8 36.9h.75M128.8 123.6h.75M53.8 103.1h.75M78.9 8.7h.75M133.5 31.2h.75M104.5 25.4h.75M155.2 87.3h.75M117.3 84.9h.75M164.9 109.0h.75M87.2 18.3h.75M77.6 18.2h.75M120.6 71.1h.75M84.5 135.5h.75M74.1 97.9h.75M80.1 65.6h.75M104.1 91.4h.75M51.2 134.2h.75M111.5 2.3h.75M32.9 41.3h.75M16.2 151.3h.75M96.4 145.2h.75M111.0 150.2h.75M52.9 28.1h.75M26.0 70.6h.75M8.6 153.4h.75M23.6 102.4h.75M39.9 105.0h.75M134.4 104.1h.75M54.1 125.1h.75M161.5 86.2h.75M53.7 147.1h.75M15.1 97.9h.75M38.4 142.3h.75M25.4 56.0h.75M159.5 52.2h.75M88.4 137.6h.75M88.3 11.5h.75M155.9 149.3h.75M42.1 124.2h.75M121.7 140.1h.75M149.7 64.4h.75M60.5 119.0h.75M103.6 13.5h.75M92.3 122.0h.75M62.3 79.2h.75M81.7 17.9h.75M126.9 66.0h.75M139.8 87.1h.75M127.8 96.6h.75M52.4 48.4h.75M87.0 145.3h.75M5.5 7.5h.75M139.7 154.5h.75M124.0 33.3h.75M123.0 112.7h.75M135.9 0.5h.75M25.3 34.5h.75M113.8 49.4h.75M6.2 25.0h.75M164.0 9.0h.75M153.2 137.7h.75M43.6 109.2h.75M145.3 118.3h.75M81.8 52.2h.75M71.4 2.6h.75M155.8 101.8h.75M83.3 144.3h.75M119.6 24.0h.75M40.5 8.2h.75M103.8 89.4h.75M57.5 85.2h.75M52.6 49.9h.75M139.9 153.2h.75M29.0 124.4h.75M158.5 104.1h.75M147.2 30.8h.75M143.3 54.0h.75M51.2 63.8h.75M131.2 66.9h.75M111.5 78.2h.75M153.7 125.6h.75M71.7 131.5h.75M8.9 145.7h.75M66.9 78.4h.75M156.2 27.3h.75M6.5 12.3h.75M21.7 65.4h.75M104.0 103.5h.75M121.8 85.4h.75M24.5 74.2h.75M21.3 120.1h.75M69.7 71.8h.75M2.2 76.8h.75M60.6 126.4h.75M133.5 114.6h.75M142.9 77.1h.75M134.3 41.6h.75M76.3 8.4h.75M66.4 112.8h.75M117.8 53.1h.75M80.8 52.0h.75M52.0 27.1h.75M19.4 136.3h.75M16.9 32.8h.75M148.6 83.8h.75M14.7 55.5h.75M56.4 110.7h.75M58.1 58.3h.75M41.0 141.6h.75M79.9 27.5h.75M128.1 94.4h.75M24.1 79.4h.75M91.0 110.8h.75M58.6 64.2h.75M134.2 26.1h.75M158.1 50.7h.75M143.0 136.4h.75M135.4 134.8h.75M64.8 150.4h.75M84.9 2.4h.75M118.7 57.6h.75M24.9 76.0h.75M135.8 32.5h.75M24.1 57.9h.75M60.8 136.7h.75M41.6 46.8h.75M88.3 71.6h.75M19.0 149.6h.75M91.6 84.7h.75M77.1 128.4h.75M80.6 41.9h.75M65.7 147.5h.75M37.8 78.1h.75M71.6 3.0h.75M137.8 145.1h.75M18.1 52.7h.75M34.6 85.5h.75M126.5 100.2h.75M157.2 110.0h.75M29.4 23.3h.75M51.8 72.7h.75M58.2 41.3h.75M13.3 90.3h.75M107.0 38.5h.75M7.9 131.5h.75M30.8 45.2h.75M164.6 39.8h.75M118.0 42.0h.75M32.1 62.2h.75M99.3 90.8h.75M44.2 54.0h.75M80.4 5.1h.75M95.7 96.1h.75M117.3 5.5h.75M50.7 40.2h.75M3.5 98.4h.75M49.9 147.4h.75M20.6 98.5h.75M151.3 70.3h.75M50.3 73.1h.75M62.2 144.8h.75M97.9 84.6h.75M34.6 75.0h.75M108.0 11.9h.75M17.8 69.2h.75M17.5 153.2h.75M129.2 66.4h.75M96.9 5.6h.75M123.5 12.1h.75M38.4 95.2h.75M124.3 56.2h.75M73.4 102.7h.75M40.8 97.0h.75M80.8 12.9h.75M119.9 120.3h.75M85.8 127.5h.75M117.3 92.4h.75M164.4 118.4h.75M53.1 49.3h.75M9.4 36.1h.75M143.7 85.0h.75M127.7 61.6h.75M124.1 53.8h.75M83.5 56.9h.75M120.0 5.2h.75M124.4 34.0h.75M116.1 29.7h.75M150.6 38.0h.75M142.1 8.2h.75M86.6 105.4h.75M162.6 112.8h.75M17.8 100.0h.75M103.3 92.5h.75M96.1 102.6h.75M0.4 77.3h.75M13.0 128.1h.75M8.6 147.9h.75M28.8 94.2h.75M6.7 56.3h.75M117.2 8.6h.75M125.8 110.7h.75M89.3 154.3h.75M23.6 3.1h.75M125.8 106.3h.75M129.0 114.9h.75M71.2 151.0h.75M65.8 139.8h.75M49.0 131.6h.75M55.3 114.2h.75M116.4 3.3h.75M95.9 76.5h.75M27.6 108.3h.75M75.5 73.5h.75M162.3 109.5h.75M112.7 9.2h.75M28.5 10.9h.75M46.7 131.0h.75M120.0 16.4h.75M10.1 119.3h.75M84.6 29.0h.75M82.9 30.5h.75M94.3 141.9h.75M150.7 37.2h.75M96.3 66.0h.75M17.1 62.7h.75M137.4 149.1h.75M154.6 138.6h.75M4.2 108.8h.75M143.9 88.9h.75M83.3 57.5h.75M135.4 33.4h.75M152.7 31.2h.75M82.0 98.8h.75M72.9 143.5h.75M30.7 95.5h.75M156.4 151.5h.75M105.0 49.1h.75M17.4 73.0h.75M34.0 129.6h.75M127.9 6.7h.75M109.5 90.6h.75M68.9 99.8h.75M49.8 33.6h.75M102.3 107.4h.75M55.4 140.4h.75M10.3 25.3h.75M121.1 51.5h.75M63.0 67.0h.75M77.1 138.0h.75M41.2 74.2h.75M118.4 41.1h.75M28.8 125.6h.75M27.4 112.0h.75M144.4 142.5h.75M86.6 61.9h.75M59.4 120.0h.75M21.7 36.5h.75M76.8 131.7h.75M74.0 40.1h.75M111.7 142.5h.75M33.4 10.6h.75M137.7 89.1h.75M70.8 56.6h.75M8.5 3.3h.75M138.8 66.5h.75M154.2 7.6h.75M77.4 41.7h.75M88.4 92.5h.75M162.4 79.7h.75M70.8 122.3h.75M39.2 107.5h.75M44.0 75.9h.75M130.3 72.9h.75M35.2 45.9h.75M32.1 14.2h.75M44.7 76.5h.75M108.2 45.0h.75M156.1 24.5h.75M56.0 47.5h.75M148.1 145.4h.75M6.6 93.0h.75M157.1 140.4h.75M44.4 111.7h.75M119.0 137.1h.75M101.2 80.1h.75M149.5 121.4h.75M4.1 39.4h.75M101.5 129.7h.75M159.5 1.2h.75M60.1 29.2h.75M139.8 31.2h.75M74.9 130.4h.75M25.8 15.9h.75M78.7 25.9h.75M83.9 21.9h.75M153.3 89.9h.75M137.7 92.9h.75M19.5 64.9h.75M5.7 0.2h.75M26.1 35.3h.75M162.8 79.3h.75M30.2 120.5h.75M15.9 49.8h.75M4.4 134.9h.75M49.7 153.0h.75M141.4 139.4h.75M31.3 56.5h.75M131.1 106.5h.75M51.6 62.0h.75M36.7 108.7h.75M42.3 111.2h.75M147.6 13.3h.75M121.8 103.9h.75M150.4 65.4h.75M117.7 111.5h.75M91.6 42.0h.75M22.6 151.7h.75M99.2 148.7h.75M124.6 4.0h.75M125.0 116.9h.75M131.9 100.0h.75M79.7 61.1h.75M157.6 136.5h.75M8.2 139.6h.75M2.2 8.9h.75M31.4 86.0h.75M47.7 58.1h.75M106.6 97.4h.75M66.8 134.8h.75M89.4 30.1h.75M130.0 68.5h.75M154.8 88.3h.75M29.8 8.5h.75M70.6 51.7h.75M164.0 65.4h.75M100.2 137.1h.75M72.4 75.0h.75M146.2 82.8h.75M143.4 71.4h.75M94.3 34.0h.75M118.6 141.7h.75M118.7 56.6h.75M12.6 118.9h.75M91.4 143.8h.75M35.9 126.6h.75M27.5 140.4h.75M110.3 129.0h.75M94.4 36.1h.75M64.3 36.5h.75M161.5 61.1h.75M135.1 49.9h.75M52.9 135.6h.75M108.3 96.9h.75M161.7 138.9h.75M78.5 57.9h.75M31.4 65.9h.75M162.6 11.8h.75M133.6 144.5h.75M66.0 146.4h.75M8.4 70.2h.75M28.3 144.9h.75M127.0 146.4h.75M63.1 97.9h.75M2.9 101.9h.75M98.0 110.1h.75M60.5 75.5h.75M23.5 18.0h.75M30.3 100.3h.75M77.1 135.5h.75M48.2 49.3h.75M160.6 99.6h.75M131.9 72.1h.75M117.5 9.1h.75M38.6 62.2h.75M113.5 96.2h.75M142.0 82.6h.75M10.8 25.7h.75M122.7 25.1h.75M53.0 9.2h.75M156.6 114.6h.75M98.2 152.4h.75M5.1 62.2h.75M39.2 9.0h.75M69.4 101.9h.75M84.9 136.6h.75M115.5 149.2h.75M15.3 98.1h.75M5.4 50.2h.75M88.1 33.4h.75M2.7 18.2h.75M131.3 75.5h.75M77.8 126.5h.75M29.0 63.4h.75M53.2 114.9h.75M15.2 95.3h.75M145.8 118.0h.75M127.1 150.3h.75M99.4 94.6h.75M31.0 17.6h.75M130.0 93.4h.75M111.9 108.6h.75M105.7 127.9h.75M87.1 77.6h.75M117.1 106.5h.75M162.8 7.2h.75M20.8 71.1h.75M98.1 82.9h.75M52.4 111.6h.75M14.8 131.9h.75M149.8 70.7h.75M30.2 114.8h.75M87.1 145.7h.75M81.0 15.9h.75M13.2 131.5h.75M75.8 66.3h.75M44.4 47.6h.75M109.9 93.0h.75M98.7 42.9h.75M52.3 71.4h.75M162.5 49.6h.75M2.5 83.2h.75M121.4 29.7h.75M113.1 35.8h.75M116.3 129.3h.75M80.0 26.1h.75M39.1 49.6h.75" stroke="#44d030" stroke-width=".8" stroke-opacity=".65" fill="none"/><path d="M10.3 16.2h.8M52.9 55.6h.8M141.8 93.0h.8M79.9 74.9h.8M99.6 112.3h.8M13.2 83.0h.8M110.7 142.6h.8M101.3 128.9h.8M20.2 139.1h.8M37.1 108.9h.8M161.9 69.8h.8M43.4 147.0h.8M51.4 69.5h.8M67.2 9.4h.8M22.9 47.8h.8M132.5 24.0h.8M163.7 24.7h.8M110.7 106.1h.8M11.5 102.9h.8M85.5 53.3h.8M69.1 127.3h.8M29.7 144.7h.8M28.8 57.8h.8M25.7 89.7h.8M112.3 141.0h.8M43.9 37.1h.8M124.0 149.8h.8M150.8 130.9h.8M130.5 108.0h.8M69.9 121.6h.8M73.2 68.1h.8M151.4 149.7h.8M156.7 97.5h.8M59.5 28.4h.8M98.2 132.0h.8M13.1 133.0h.8M125.3 61.7h.8M16.4 28.6h.8M95.1 92.6h.8M81.2 55.4h.8M164.7 134.9h.8M4.5 22.7h.8M80.0 42.0h.8M84.0 66.4h.8M44.4 57.3h.8M20.7 6.4h.8M50.7 98.2h.8M0.9 5.2h.8M51.1 133.2h.8M0.9 72.2h.8M15.1 95.6h.8M91.8 95.6h.8M44.3 40.3h.8M145.9 128.5h.8M151.0 95.5h.8M110.5 59.9h.8M120.6 90.7h.8M4.4 60.7h.8M154.5 143.1h.8M59.6 23.4h.8M79.4 82.9h.8M5.5 88.9h.8M80.1 25.8h.8M132.8 56.9h.8M33.9 44.9h.8M46.0 116.9h.8M130.7 7.9h.8M123.1 0.9h.8M70.3 128.4h.8M55.1 108.4h.8M55.9 72.1h.8M155.2 105.4h.8M71.5 61.4h.8M152.9 77.6h.8M98.2 119.7h.8M1.8 10.0h.8M30.0 57.0h.8M151.0 27.8h.8M111.3 10.1h.8M75.8 47.6h.8M108.5 97.6h.8M102.5 122.6h.8M61.0 125.3h.8M23.1 78.6h.8M61.6 144.0h.8M22.2 50.2h.8M88.6 16.9h.8M96.1 8.6h.8M21.1 81.8h.8M25.9 46.9h.8M7.6 11.8h.8M45.7 148.0h.8M109.9 35.3h.8M111.4 141.6h.8M107.0 54.2h.8M133.7 122.0h.8M52.9 7.4h.8M38.1 61.1h.8M113.5 117.7h.8M32.6 52.9h.8M57.3 92.4h.8M88.9 12.9h.8M130.1 103.1h.8M70.5 52.7h.8M97.8 76.5h.8M128.5 82.1h.8M138.3 85.1h.8M117.1 58.0h.8M64.7 28.9h.8M46.7 89.0h.8M48.8 22.7h.8M52.7 145.0h.8M104.7 39.4h.8M157.6 57.2h.8M11.0 20.0h.8M76.8 56.2h.8M29.3 29.8h.8M89.6 36.5h.8M154.5 99.3h.8M128.3 67.2h.8M11.2 126.5h.8M101.7 118.2h.8M111.9 119.0h.8M74.2 108.6h.8M13.5 123.6h.8M138.7 150.2h.8M10.2 1.6h.8M148.4 76.9h.8M91.7 38.0h.8M152.5 4.5h.8M64.8 124.4h.8M49.9 97.3h.8M66.1 16.9h.8M30.7 21.9h.8M144.8 6.7h.8M8.5 46.2h.8M60.8 135.8h.8M10.4 50.8h.8M37.2 60.5h.8M99.8 102.5h.8M53.9 67.1h.8M91.8 35.6h.8M41.7 15.1h.8M141.3 86.4h.8M51.0 127.5h.8M71.6 60.0h.8M122.6 63.1h.8M3.2 44.6h.8M93.8 103.8h.8M55.2 113.6h.8M41.7 65.3h.8M10.2 113.2h.8M64.6 138.2h.8M68.9 85.8h.8M70.8 14.3h.8M158.1 15.4h.8M85.9 113.7h.8M9.1 38.0h.8M154.5 12.4h.8M154.5 5.0h.8M115.3 100.3h.8M72.8 94.7h.8M98.2 93.2h.8M34.8 61.9h.8M51.4 64.9h.8M95.2 32.2h.8M51.3 31.0h.8M47.0 116.3h.8M28.6 10.2h.8M144.7 50.8h.8M66.8 58.1h.8M116.4 40.1h.8M14.7 4.9h.8M77.7 149.8h.8M71.5 39.7h.8M161.7 72.3h.8M136.6 11.8h.8M139.0 123.8h.8M97.4 81.7h.8M164.6 52.6h.8M8.0 49.4h.8M1.9 24.0h.8M66.4 150.8h.8M86.3 62.5h.8M151.3 93.8h.8M3.4 12.4h.8M53.2 53.4h.8M65.0 113.9h.8M25.8 106.6h.8M23.0 56.9h.8M17.7 43.8h.8M163.0 144.2h.8M163.1 59.3h.8M50.0 152.1h.8M58.0 87.2h.8M161.4 112.1h.8M51.2 81.5h.8M85.0 30.8h.8M127.5 18.8h.8M23.1 43.2h.8M5.9 35.0h.8M34.3 76.6h.8M140.1 145.9h.8M147.5 96.3h.8M146.4 39.6h.8M153.8 7.9h.8M115.6 29.3h.8M134.4 143.6h.8M23.7 138.2h.8M20.0 17.9h.8M48.4 139.2h.8M134.8 63.7h.8M116.5 60.8h.8M94.4 130.6h.8M149.1 26.4h.8M115.5 58.9h.8M129.9 21.6h.8M76.1 112.4h.8M151.4 146.1h.8M88.1 109.9h.8M117.4 101.1h.8M20.1 136.3h.8M25.5 102.0h.8M37.5 12.9h.8M69.6 137.3h.8M141.8 43.7h.8M73.0 20.7h.8M88.8 57.5h.8M128.4 61.7h.8M90.6 119.7h.8M34.2 87.0h.8M134.1 73.9h.8M74.1 66.2h.8M13.3 112.2h.8M79.9 153.3h.8M146.4 28.7h.8M57.1 22.6h.8M156.2 47.8h.8M95.8 31.4h.8M6.3 132.8h.8M137.6 93.1h.8M33.5 132.9h.8M157.4 90.5h.8M147.1 9.3h.8M67.6 144.8h.8M141.1 65.0h.8M42.7 70.0h.8M62.0 112.1h.8M107.4 18.4h.8M143.3 113.9h.8M88.4 132.1h.8M158.4 3.9h.8M45.7 97.3h.8M86.8 137.8h.8M96.0 5.5h.8M135.0 11.0h.8M115.9 34.1h.8M156.4 35.4h.8M162.1 11.4h.8M8.2 84.4h.8M66.3 124.1h.8M124.2 106.4h.8M77.4 116.1h.8M73.7 1.8h.8M66.3 88.7h.8M57.3 61.0h.8M19.5 10.2h.8M21.0 131.1h.8M58.9 138.6h.8M98.1 33.2h.8M64.3 108.3h.8M47.3 85.3h.8M13.0 62.6h.8M94.6 137.5h.8M144.7 19.8h.8M108.9 105.1h.8M10.0 56.4h.8M29.1 150.2h.8M67.7 1.7h.8M154.0 91.4h.8M74.1 129.4h.8M76.0 100.8h.8M109.3 136.7h.8M54.3 34.3h.8M136.8 104.3h.8M15.8 144.1h.8M164.1 77.0h.8M34.5 44.4h.8M130.6 106.2h.8M10.8 80.8h.8M153.4 132.7h.8M20.8 24.6h.8M10.4 48.3h.8M59.0 38.6h.8M149.1 93.1h.8M110.9 80.9h.8M68.2 90.2h.8M114.4 87.0h.8M110.0 36.0h.8M164.0 95.1h.8" stroke="#606868" stroke-width=".8" stroke-opacity=".35" fill="none"/><rect width="165" height="165" fill="url(#rim)"/></g>
</g>
</svg>
<div class="lb" style="left:379px;top:209.5px">Acquiring sample...</div>
<div style="left:379px;top:219px;width:165px;height:7px;background:#4a4b50;border-radius:1.5px"></div>
<div style="left:379px;top:219px;width:158px;height:7px;background:#008000;border-radius:1.5px 0 0 1.5px"></div>
<div class="lb" style="left:379px;top:230px">Time remaining: 0:03 min</div>
<div style="left:378.5px;top:240px;width:165px;height:13px;background:#4a4b50;border-radius:1.5px"></div>
<div style="left:378.5px;top:257px;width:165px;height:13px;background:#4a4b50;border-radius:1.5px"></div>
<div style="left:452px;top:244.3px;width:1.4px;height:5px;background:#f0f0f0"></div>
<div style="left:454.8px;top:244.3px;width:1.4px;height:5px;background:#f0f0f0"></div>
<div class="lb" style="left:459.2px;top:243.8px">Pause</div>
<div style="left:453px;top:261px;width:5px;height:5.4px;background:#f4f4f4"></div><div style="left:455.2px;top:261px;width:0.5px;height:5.4px;background:#c8c8c8"></div><div style="left:453px;top:263.5px;width:5px;height:0.5px;background:#c8c8c8"></div>
<div class="lb" style="left:460.6px;top:260.7px">Stop</div>

<!-- info panel -->
<div class="hd" style="left:551.3px;top:28.7px">Sample information</div>
<div style="left:551px;top:36px;width:195px;height:1px;background:#8a8a8a"></div>
<div class="lb" style="left:551px;top:41px">Sample ID:</div>
<div class="lb" style="left:551px;top:51px">Standard:</div>
<div class="lb" style="left:551px;top:61px">Classification measurement:</div>
<div class="lb" style="left:551px;top:71px">Count result:</div>
<div class="lb" style="left:650.2px;top:41px">000003</div>
<div class="lb" style="left:650.2px;top:51px">ISO 16232-10:2007 (A)</div>
<div class="lb" style="left:650.2px;top:61px">Feret Max. [µm]</div>
<div class="lb" style="left:650.2px;top:71px">Contamination class</div>
<div class="hd" style="left:551.3px;top:90.7px">Sample results</div>
<div style="left:551px;top:97.2px;width:195px;height:1px;background:#8a8a8a"></div>
<div class="lb" style="left:551px;top:102px">Overall approval:</div>
<div class="lb" style="left:651px;top:102px;color:#f5c400;font-weight:bold">NOK</div>
<div style="position:absolute;left:551px;top:112.20px;width:195px;height:1px;background:#2e2e2e"></div><div class="rng" style="left:559px;top:115.10px">[5.00 - 15.00]</div><div class="let" style="left:554.3px;top:121.30px">B</div><div style="position:absolute;left:559px;top:119.90px;width:140px;height:8px;background:#000"></div><div style="position:absolute;left:559px;top:119.90px;width:51.2px;height:8px;background:#3a7494"></div><div style="position:absolute;left:642px;top:119.90px;width:2px;height:8px;background:#f5c400"></div><div style="position:absolute;left:642px;top:127.90px;width:0.6px;height:6px;background:#666"></div><div class="rng" style="left:644px;top:130.60px">Max 20</div><div class="cnt" style="left:709px;top:121.00px">11</div><div style="position:absolute;left:551px;top:135.98px;width:195px;height:1px;background:#2e2e2e"></div><div class="rng" style="left:559px;top:138.92px">[15.00 - 25.00]</div><div class="let" style="left:554.3px;top:145.16px">C</div><div style="position:absolute;left:559px;top:143.78px;width:140px;height:8px;background:#000"></div><div style="position:absolute;left:559px;top:143.78px;width:71.2px;height:8px;background:#3a7494"></div><div style="position:absolute;left:642px;top:143.78px;width:2px;height:8px;background:#f5c400"></div><div style="position:absolute;left:642px;top:151.78px;width:0.6px;height:6px;background:#666"></div><div class="rng" style="left:644px;top:154.48px">Max 10</div><div class="cnt" style="left:709px;top:144.88px">8</div><div style="position:absolute;left:551px;top:159.76px;width:195px;height:1px;background:#2e2e2e"></div><div class="rng" style="left:559px;top:162.74px">[25.00 - 50.00]</div><div class="let" style="left:554.3px;top:169.02px">D</div><div style="position:absolute;left:559px;top:167.66px;width:140px;height:8px;background:#000"></div><div style="position:absolute;left:559px;top:167.66px;width:76.7px;height:8px;background:#3a7494"></div><div style="position:absolute;left:642px;top:167.66px;width:2px;height:8px;background:#f5c400"></div><div style="position:absolute;left:642px;top:175.66px;width:0.6px;height:6px;background:#666"></div><div class="rng" style="left:644px;top:178.36px">Max 8</div><div class="cnt" style="left:709px;top:168.76px">7</div><div style="position:absolute;left:551px;top:183.54px;width:195px;height:1px;background:#2e2e2e"></div><div class="rng" style="left:559px;top:186.56px">[50.00 - 100.00]</div><div class="let" style="left:554.3px;top:192.88px">E</div><div style="position:absolute;left:559px;top:191.54px;width:140px;height:8px;background:#000"></div><div style="position:absolute;left:559px;top:191.54px;width:83.8px;height:8px;background:#3a7494"></div><div style="position:absolute;left:642px;top:191.54px;width:2px;height:8px;background:#f5c400"></div><div style="position:absolute;left:642px;top:199.54px;width:0.6px;height:6px;background:#666"></div><div class="rng" style="left:644px;top:202.24px">Max 1</div><div class="cnt" style="left:709px;top:192.64px">5</div><div style="position:absolute;left:551px;top:207.32px;width:195px;height:1px;background:#2e2e2e"></div><div class="rng" style="left:559px;top:210.38px">[100.00 - 150.00]</div><div class="let" style="left:554.3px;top:216.74px">F</div><div style="position:absolute;left:559px;top:215.42px;width:140px;height:8px;background:#000"></div><div style="position:absolute;left:559px;top:215.42px;width:67.0px;height:8px;background:#3a7494"></div><div style="position:absolute;left:642px;top:215.42px;width:2px;height:8px;background:#f5c400"></div><div style="position:absolute;left:642px;top:223.42px;width:0.6px;height:6px;background:#666"></div><div class="rng" style="left:644px;top:226.12px">Max 2</div><div class="cnt" style="left:709px;top:216.52px">1</div><div style="position:absolute;left:551px;top:231.10px;width:195px;height:1px;background:#2e2e2e"></div><div class="rng" style="left:559px;top:234.20px">[150.00 - 200.00]</div><div class="let" style="left:554.3px;top:240.60px">G</div><div style="position:absolute;left:559px;top:239.30px;width:140px;height:8px;background:#000"></div><div style="position:absolute;left:559px;top:239.30px;width:83.8px;height:8px;background:#3a7494"></div><div style="position:absolute;left:642px;top:239.30px;width:2px;height:8px;background:#f5c400"></div><div style="position:absolute;left:642px;top:247.30px;width:0.6px;height:6px;background:#666"></div><div class="rng" style="left:644px;top:250.00px">Max 0</div><div class="cnt" style="left:709px;top:240.40px">0</div><div style="position:absolute;left:551px;top:254.88px;width:195px;height:1px;background:#2e2e2e"></div><div class="rng" style="left:559px;top:258.02px">[200.00 - 400.00]</div><div class="let" style="left:554.3px;top:264.46px">H</div><div style="position:absolute;left:559px;top:263.18px;width:140px;height:8px;background:#000"></div><div style="position:absolute;left:559px;top:263.18px;width:83.8px;height:8px;background:#3a7494"></div><div style="position:absolute;left:642px;top:263.18px;width:2px;height:8px;background:#f5c400"></div><div style="position:absolute;left:642px;top:271.18px;width:0.6px;height:6px;background:#666"></div><div class="rng" style="left:644px;top:273.88px">Max 0</div><div class="cnt" style="left:709px;top:264.28px">0</div><div style="position:absolute;left:551px;top:278.66px;width:195px;height:1px;background:#2e2e2e"></div><div class="rng" style="left:559px;top:281.84px">[400.00 - 600.00]</div><div class="let" style="left:554.3px;top:288.32px">I</div><div style="position:absolute;left:559px;top:287.06px;width:140px;height:8px;background:#000"></div><svg style="position:absolute;left:559px;top:287.06px" width="150" height="8"><path d="M0 0H140L148 4L140 8H0Z" fill="#f5c400"/></svg><div style="position:absolute;left:642px;top:287.06px;width:2px;height:8px;background:#3a7494"></div><div style="position:absolute;left:642px;top:295.06px;width:0.6px;height:6px;background:#666"></div><div class="rng" style="left:644px;top:297.76px">Max 00</div><div class="cnt" style="left:709px;top:288.16px">0</div><div style="position:absolute;left:551px;top:302.44px;width:195px;height:1px;background:#2e2e2e"></div><div class="rng" style="left:559px;top:305.66px">[600.00 - 1000.00]</div><div class="let" style="left:554.3px;top:312.18px">J</div><div style="position:absolute;left:559px;top:310.94px;width:140px;height:8px;background:#000"></div><div style="position:absolute;left:642px;top:310.94px;width:2px;height:8px;background:#f5c400"></div><div style="position:absolute;left:642px;top:318.94px;width:0.6px;height:6px;background:#666"></div><div class="rng" style="left:644px;top:321.64px">Max 00</div><div style="position:absolute;left:551px;top:326.22px;width:195px;height:1px;background:#2e2e2e"></div><div class="rng" style="left:559px;top:329.48px">≥ 1000.00</div><div class="let" style="left:554.3px;top:336.04px">K</div><div style="position:absolute;left:559px;top:334.82px;width:140px;height:8px;background:#000"></div><div style="position:absolute;left:642px;top:334.82px;width:2px;height:8px;background:#f5c400"></div><div style="position:absolute;left:642px;top:342.82px;width:0.6px;height:6px;background:#666"></div><div class="rng" style="left:644px;top:345.52px">Max 00</div>
</body></html>
